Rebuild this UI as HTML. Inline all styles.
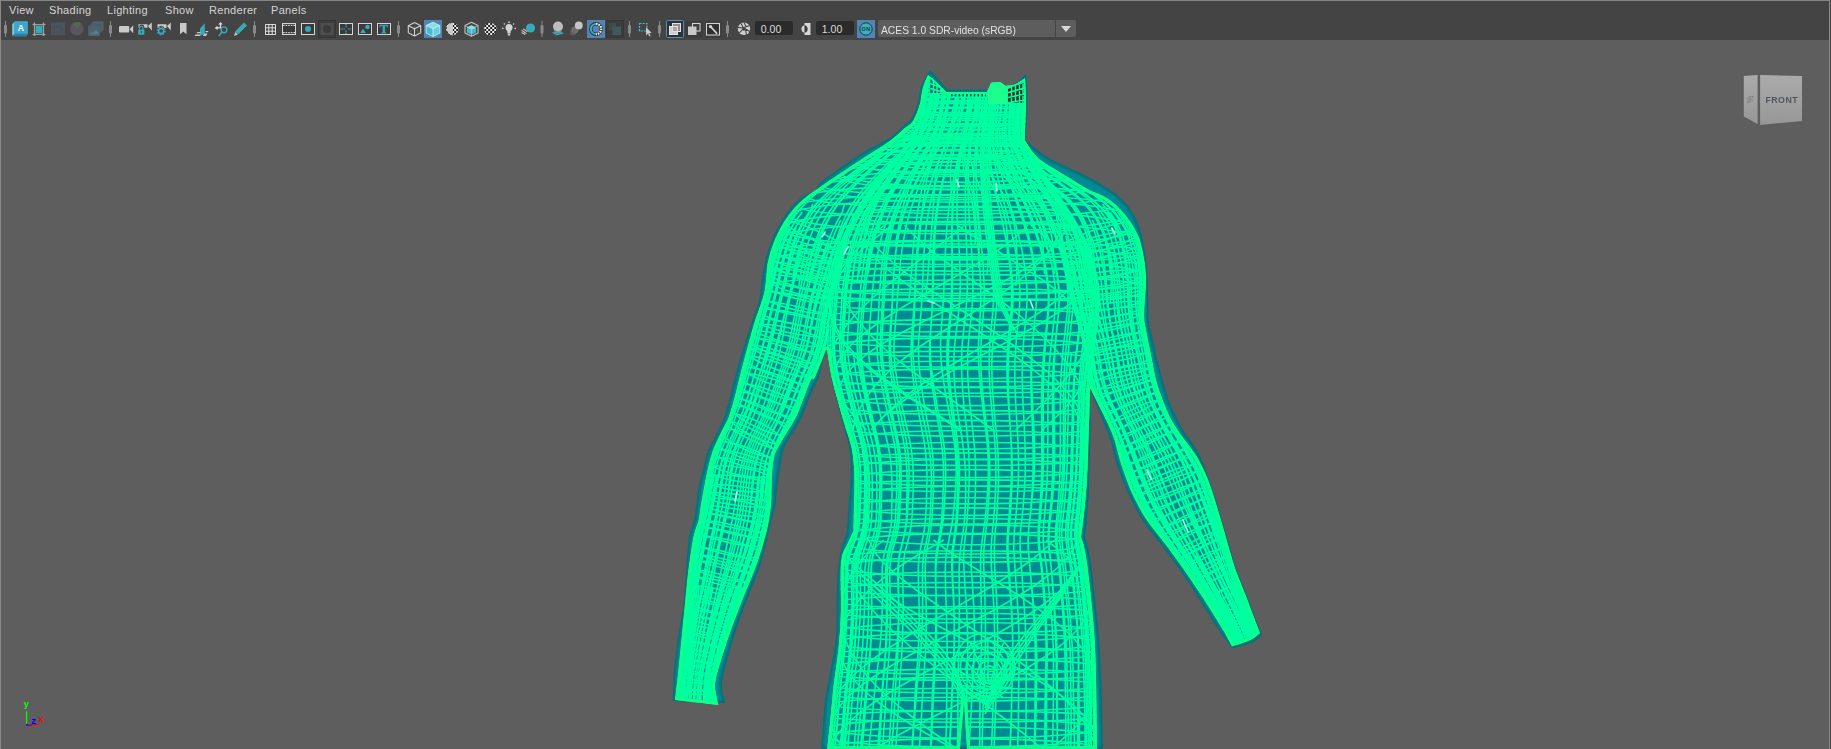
<!DOCTYPE html>
<html lang="en">
<head>
<meta charset="utf-8">
<title>Viewport</title>
<style>
html,body{margin:0;padding:0;}
body{width:1831px;height:749px;overflow:hidden;background:#5e5e5e;position:relative;font-family:"Liberation Sans","DejaVu Sans",sans-serif;}
#bar{position:absolute;left:0;top:0;width:1831px;height:40px;background:#444444;}
#topline{position:absolute;left:0;top:0;width:1831px;height:1px;background:#858585;}
#leftline{position:absolute;left:0;top:0;width:1px;height:749px;background:#8a8a8a;}
#rightline{position:absolute;left:1829px;top:0;width:1px;height:749px;background:#8a8a8a;}
#rightedge{position:absolute;left:1830px;top:0;width:1px;height:749px;background:#444444;}
.menu{position:absolute;top:3px;height:14px;line-height:14px;font-size:11px;letter-spacing:0.3px;color:#d4d4d4;white-space:nowrap;}
.fld{position:absolute;top:21px;height:14px;width:32px;padding-right:6px;background:#2b2b2b;border-radius:2px;color:#dcdcdc;font-size:10.5px;line-height:17px;text-align:center;letter-spacing:0;}
#dd{position:absolute;left:878px;top:20px;width:177px;height:17px;background:#5d5d5d;border-radius:2px 0 0 2px;color:#e2e2e2;font-size:11px;line-height:20px;white-space:nowrap;letter-spacing:0;}
#dd span{position:absolute;left:3px;top:0;transform:scaleX(0.935);transform-origin:0 50%;}
#dda{position:absolute;left:1056px;top:20px;width:20px;height:17px;background:#5d5d5d;border-radius:0 2px 2px 0;}
#dda:after{content:"";position:absolute;left:5px;top:6px;border-left:5px solid transparent;border-right:5px solid transparent;border-top:6px solid #d8d8d8;}
#icons{position:absolute;left:0;top:0;}
#scene{position:absolute;left:0;top:0;}
</style>
</head>
<body>
<div id="bar"></div>
<div class="menu" style="left:9px">View</div>
<div class="menu" style="left:49px">Shading</div>
<div class="menu" style="left:107px">Lighting</div>
<div class="menu" style="left:165px">Show</div>
<div class="menu" style="left:209px">Renderer</div>
<div class="menu" style="left:271px">Panels</div>
<div class="fld" style="left:755px">0.00</div>
<div class="fld" style="left:816px">1.00</div>
<div id="dd"><span>ACES 1.0 SDR-video (sRGB)</span></div>
<div id="dda"></div>
<svg id="scene" width="1831" height="749" viewBox="0 0 1831 749">
<defs>
<clipPath id="cg"><path d="M928 75 L929.1 75.9 L930.5 77.2 L932.3 78.6 L934.1 80.3 L936 82 L938 84 L940.3 86.3 L942.6 88.6 L944.6 90.6 L946 92 L952.2 92 L961.4 92 L971.6 92 L980.8 92 L987 92 L987.6 90.6 L988.5 88.6 L989.5 86.4 L990.4 84.4 L991 83 L992.1 82.8 L993.7 82.4 L995.5 82.1 L997.3 81.9 L999 82 L1000.6 82.5 L1002.2 83.4 L1003.8 84.4 L1005.1 85.4 L1006 86 L1007.4 85.8 L1009.3 85.5 L1011.6 85.2 L1013.9 84.7 L1016 84 L1018 83 L1020.1 81.6 L1022.1 80.2 L1023.8 78.9 L1025 78 L1025.2 81.5 L1025.4 86.5 L1025.7 92.3 L1025.9 98.7 L1026 105 L1025.9 112 L1025.5 120.1 L1025.2 128.1 L1024.8 135.1 L1024.6 140 L1026.2 142.4 L1028.3 145.9 L1030.9 149.9 L1034.2 154.1 L1038 158 L1042.8 161.7 L1048.4 165.4 L1054.5 169.1 L1060.5 172.7 L1066 176 L1070.9 179.1 L1075.6 182 L1080.1 184.7 L1084.3 187.2 L1088.5 189.5 L1092.5 191.5 L1096.4 193.1 L1100.1 194.6 L1103.7 196.2 L1107 198 L1110.1 200.1 L1113 202.4 L1115.8 204.7 L1118.4 207.3 L1121 210 L1123.6 212.9 L1126.1 216 L1128.6 219.3 L1130.9 222.6 L1133 226 L1134.9 229.2 L1136.6 232.4 L1138.2 235.7 L1139.7 239.5 L1141 244 L1142.3 249.4 L1143.6 255.5 L1144.6 262 L1145.5 268.9 L1146 276 L1146 283.7 L1145.5 292 L1144.8 300.4 L1144.2 308.3 L1144 315 L1144.2 320.1 L1144.7 324.1 L1145.4 327.6 L1146.2 331 L1147 335 L1147.9 339.8 L1148.9 344.9 L1150 350.1 L1151 355.2 L1152 360 L1152.8 364.3 L1153.5 368.4 L1154.3 372.2 L1155 376.1 L1156 380 L1157.1 384 L1158.4 388.1 L1159.8 392.1 L1161.2 396.1 L1162.7 400 L1164.2 403.9 L1165.7 407.8 L1167.3 411.6 L1169 415.2 L1170.7 418.7 L1172.5 421.9 L1174.3 424.9 L1176.1 427.7 L1178 430.5 L1180 433.4 L1182.1 436.4 L1184.3 439.4 L1186.6 442.4 L1188.8 445.2 L1190.8 448 L1192.5 450.4 L1194.1 452.5 L1195.6 454.6 L1197.1 457 L1198.8 460 L1200.7 463.7 L1202.8 467.8 L1204.9 472.3 L1207 477.1 L1209 482 L1210.9 487.2 L1212.7 492.8 L1214.5 498.5 L1216.3 504.3 L1218 510 L1219.6 515.5 L1221.2 520.9 L1222.8 526.3 L1224.4 531.8 L1226 537.5 L1227.7 543.4 L1229.4 549.6 L1231.2 555.8 L1233.1 562 L1235 568 L1237.1 573.8 L1239.4 579.6 L1241.6 585.2 L1243.9 590.7 L1246 596 L1248 601.2 L1249.9 606.4 L1251.8 611.4 L1253.5 616 L1255 620 L1256.3 623.5 L1257.5 626.6 L1258.6 629.3 L1259.4 631.4 L1260 633 L1258.9 634 L1257.3 635.3 L1255.4 636.9 L1253.1 638.5 L1250.5 640 L1247.1 641.4 L1242.9 642.9 L1238.5 644.4 L1234.7 645.6 L1232 646.5 L1230.9 644.4 L1229.4 641.5 L1227.5 638 L1225.4 634.1 L1223 630 L1220.4 625.6 L1217.4 620.8 L1214.2 615.6 L1210.9 610.3 L1207.5 605 L1204 599.6 L1200.5 594.1 L1196.8 588.5 L1192.9 582.8 L1189 577 L1184.9 571.1 L1180.7 565 L1176.3 559 L1171.9 552.9 L1167.6 547 L1163.2 541.3 L1158.7 535.7 L1154.2 530.1 L1149.9 524.6 L1146 519 L1142.5 513.4 L1139.3 507.8 L1136.4 502.3 L1133.6 496.7 L1131 491 L1128.5 485.2 L1126.3 479.1 L1124.2 473.1 L1122.2 467.4 L1120.5 462 L1119 457.1 L1117.8 452.4 L1116.7 448 L1115.7 443.9 L1114.5 440 L1113.3 436.5 L1112.1 433.3 L1110.8 430.3 L1109.5 427.3 L1108 424 L1106.3 420.4 L1104.4 416.5 L1102.4 412.6 L1100.5 408.7 L1098.6 405 L1096.7 401.2 L1094.7 397.2 L1092.8 393.5 L1091.2 390.3 L1090 388 L1089.9 392.6 L1089.7 398.9 L1089.5 406.5 L1089.3 414.7 L1089 423 L1088.7 431.8 L1088.4 441.6 L1088.1 451.6 L1087.8 461.2 L1087.4 470 L1087 477.6 L1086.6 484.6 L1086.1 491.1 L1085.6 497.5 L1085 504 L1084.2 511.2 L1083.3 518.9 L1082.4 526.2 L1081.6 532.5 L1081 537 L1081.7 539.2 L1082.6 542.1 L1083.7 545.8 L1084.9 550.7 L1086 557 L1087.2 565.2 L1088.4 575.1 L1089.7 586 L1090.9 597.2 L1092 608 L1092.9 617.7 L1093.7 627 L1094.4 636.5 L1095 647.2 L1095.5 660 L1096 676.9 L1096.3 697.2 L1096.6 718 L1096.8 736.3 L1097 749 L1077.2 749 L1048.1 749 L1015.9 749 L986.8 749 L967 749 L966.5 741.9 L965.9 731.3 L965.1 719.7 L964.5 709.1 L964 702 L963.4 709.1 L962.5 719.7 L961.5 731.3 L960.6 741.9 L960 749 L939.8 749 L910 749 L877 749 L847.2 749 L827 749 L827.4 745.8 L828 741.4 L828.6 736.1 L829.3 730.2 L830 724 L830.6 717.4 L831.3 710.1 L832 702.4 L832.7 694.7 L833.5 687 L834.4 679.5 L835.5 671.9 L836.6 664.2 L837.6 656.6 L838.5 649 L839.2 641.6 L839.8 634.4 L840.3 627.1 L840.7 619.4 L841 611 L841 601.3 L840.8 590.3 L840.6 579.3 L840.6 569.1 L841 561 L842 555.3 L843.4 551.2 L845 548.2 L846.6 545.7 L848 543 L849.3 540 L850.6 537.2 L851.8 534.6 L852.8 532.5 L853.5 531 L853.6 527.4 L853.7 522.4 L853.8 516.6 L853.9 510.6 L854 505 L854.1 499.8 L854.3 494.6 L854.4 489.5 L854.5 484.6 L854.5 480 L854.4 475.8 L854.3 471.8 L854.1 468.1 L853.8 464.5 L853.5 461 L853.2 457.7 L852.8 454.5 L852.3 451.5 L851.7 448.3 L851 445 L850 441.4 L848.9 437.7 L847.6 433.9 L846.3 430 L845 426 L843.8 422 L842.7 418.1 L841.5 414 L840.3 409.7 L839 405 L837.6 399.8 L836 394.3 L834.4 388.5 L832.9 382.6 L831.6 377 L830.4 371.1 L829.3 364.8 L828.4 358.8 L827.6 353.7 L827 350 L826.8 350 L826.6 350 L826.4 350 L826.2 350 L826 350 L824.4 354.1 L822.1 360 L819.4 366.6 L816.9 372.7 L815 377 L813.8 378.9 L813 379.2 L812.4 378.8 L811.7 378.8 L810.8 380 L809.5 382.7 L808.1 386.3 L806.5 390.5 L804.9 394.7 L803.4 398.7 L802 402.4 L800.6 406.2 L799.2 409.9 L797.6 413.7 L795.9 417.4 L793.9 421.2 L791.6 424.9 L789.2 428.7 L786.9 432.4 L784.7 436 L782.6 439.5 L780.5 443 L778.5 446.4 L776.7 449.8 L775.3 453 L774.3 456.1 L773.6 459 L773.2 461.8 L772.8 464.8 L772.5 468 L772.2 471.5 L772 475.1 L771.8 478.9 L771.7 482.7 L771.6 486.5 L771.5 490.1 L771.5 493.6 L771.5 497.1 L771.3 500.9 L771 505 L770.5 509.4 L769.9 514.1 L769.2 519.1 L768.2 524.4 L767 530 L765.4 536.2 L763.6 542.8 L761.5 549.7 L759.3 556.7 L757 563.5 L754.5 570.3 L751.8 577.1 L748.9 583.9 L746.1 590.5 L743.5 597 L741 603.2 L738.7 609.3 L736.4 615.2 L734.2 621.1 L732 627 L729.9 633 L727.7 639.1 L725.7 645.2 L723.8 651.2 L722 657 L720.2 662.7 L718.5 668.3 L716.9 673.8 L715.7 679 L715 684 L715.1 688.9 L715.8 693.8 L716.8 698.4 L717.8 702.2 L718.4 705 L711.8 704.2 L702.1 703.1 L691.3 701.9 L681.6 700.8 L675 700 L675.5 696 L676.1 690.3 L676.9 683.7 L677.7 676.7 L678.4 670 L679.1 663.6 L679.7 657 L680.4 650.4 L681 643.7 L681.7 637 L682.4 630.3 L683 623.6 L683.7 616.9 L684.3 610.2 L685 603.5 L685.6 596.8 L686.3 590.1 L686.9 583.4 L687.6 576.7 L688.4 570 L689.3 563.1 L690.3 556 L691.3 549 L692.4 542.6 L693.4 537 L694.5 532.5 L695.7 528.9 L696.8 525.7 L697.9 522.9 L698.7 520 L699.3 517.3 L699.6 514.9 L699.9 512.5 L700.2 510 L700.6 507 L701.2 503.3 L702 499.2 L702.7 494.9 L703.5 490.6 L704.3 486.5 L705 482.6 L705.7 478.9 L706.4 475.2 L707.2 471.6 L708 468 L708.8 464.5 L709.7 461.1 L710.6 457.7 L711.6 454.4 L712.7 451 L714 447.6 L715.5 444.3 L717 440.9 L718.6 437.6 L720.2 434.2 L721.9 430.9 L723.6 427.6 L725.4 424.3 L727.1 420.9 L728.6 417.4 L729.9 413.8 L731.1 410.1 L732.2 406.3 L733.2 402.5 L734.2 398.7 L735.2 394.9 L736.2 391.2 L737.1 387.4 L738 383.7 L738.9 380 L739.7 376.8 L740.4 374 L741.2 371 L742.1 367.4 L743.4 362.6 L745.1 356.1 L747.2 348.4 L749.5 340 L751.8 331.6 L754 324 L756.2 317.1 L758.6 310.5 L760.8 304.2 L762.9 298 L764.5 292 L765.5 286.1 L766.1 280.3 L766.5 274.7 L766.9 269.4 L767.5 264.6 L768.3 260.3 L769.2 256.4 L770.2 252.9 L771.2 249.5 L772.4 246 L773.7 242.5 L775.1 239.1 L776.6 235.7 L778.2 232.4 L780 229 L781.9 225.6 L784 222.1 L786.1 218.7 L788.5 215.3 L791 212 L793.7 208.8 L796.5 205.8 L799.5 202.8 L802.7 199.8 L806 197 L809.5 194.3 L813.1 191.8 L816.9 189.2 L820.8 186.7 L824.8 184 L829 181.1 L833.4 178.1 L837.9 175.1 L842.5 172 L847 169 L851.5 166 L856.1 163 L860.7 160.1 L865.2 157.1 L869.6 154.3 L873.9 151.5 L878.2 148.9 L882.3 146.2 L886.3 143.6 L890 141 L893.5 138.3 L896.7 135.5 L899.8 132.8 L902.5 130.2 L905 128 L907.1 126.4 L908.8 125.2 L910.2 124.2 L911.6 122.9 L913 121 L914.5 118.4 L915.9 115.3 L917.3 111.9 L918.6 108.4 L919.7 105 L920.6 101.5 L921.2 98 L921.7 94.4 L922.3 90.9 L923 87.7 L924 84.7 L925.1 81.7 L926.3 78.9 L927.3 76.7Z"/></clipPath>
<clipPath id="ct"><path d="M930 70 L931.1 71.1 L932.6 72.7 L934.3 74.5 L936.2 76.5 L938 78.5 L939.9 80.7 L942 83.2 L944 85.8 L945.8 88 L947 89.5 L955.1 89.5 L966.9 89.5 L980.1 89.5 L991.9 89.5 L1000 89.5 L1002.3 88.7 L1005.5 87.5 L1009.3 86.1 L1012.9 84.6 L1016 83 L1018.5 81.2 L1020.9 79.1 L1023 77.1 L1024.7 75.3 L1026 74 L1026.3 78.2 L1026.7 84 L1027.1 90.8 L1027.4 98 L1027.5 105 L1027.3 112.3 L1026.9 120.4 L1026.3 128.3 L1025.8 135.2 L1025.5 140 L1028.3 142.4 L1032.2 145.7 L1036.9 149.6 L1041.9 153.6 L1047 157 L1052.3 160 L1058.2 162.8 L1064.1 165.6 L1069.9 168.1 L1075 170.5 L1079.3 172.6 L1083.2 174.4 L1086.7 176.1 L1090.2 177.9 L1094 180 L1098.1 182.3 L1102.4 184.9 L1106.8 187.5 L1110.9 190.2 L1114.7 193 L1118.1 195.8 L1121.3 198.7 L1124.3 201.7 L1127.1 204.7 L1129.6 208 L1131.9 211.4 L1134 215.1 L1135.8 218.8 L1137.5 222.6 L1139 226.5 L1140.3 230.3 L1141.4 234.1 L1142.3 238.1 L1143.2 242.3 L1144 247 L1144.8 252 L1145.6 257.2 L1146.3 262.8 L1147 269 L1147.5 276 L1147.9 284.4 L1148.1 294.1 L1148.3 304.1 L1148.6 313.4 L1149 321 L1149.6 326.4 L1150.4 330.4 L1151.3 333.6 L1152.1 336.6 L1153 340 L1153.8 343.9 L1154.7 347.9 L1155.6 352 L1156.5 356 L1157.4 360 L1158.4 364 L1159.4 368 L1160.5 372 L1161.6 376 L1162.7 380 L1163.8 384.1 L1165 388.2 L1166.2 392.3 L1167.4 396.3 L1168.7 400 L1170.1 403.5 L1171.6 406.8 L1173.1 410 L1174.6 413 L1176 416 L1177.3 418.8 L1178.6 421.5 L1179.9 424.2 L1181.2 426.8 L1182.7 429.4 L1184.4 432.1 L1186.3 434.8 L1188.2 437.5 L1190.2 440.1 L1192 442.8 L1193.7 445.2 L1195.2 447.5 L1196.7 449.8 L1198.3 452.5 L1200 456 L1201.9 460.3 L1203.9 465.4 L1206 470.8 L1208 476.5 L1210 482 L1211.9 487.5 L1213.7 493.1 L1215.5 498.7 L1217.3 504.4 L1219 510 L1220.6 515.5 L1222.2 520.9 L1223.8 526.3 L1225.4 531.8 L1227 537.5 L1228.7 543.4 L1230.4 549.6 L1232.2 555.8 L1234.1 562 L1236 568 L1238.1 573.8 L1240.4 579.6 L1242.6 585.2 L1244.9 590.7 L1247 596 L1249 601.2 L1250.9 606.3 L1252.7 611.2 L1254.4 615.8 L1256 620 L1257.5 623.8 L1258.9 627.4 L1260.2 630.5 L1261.2 633.1 L1262 635 L1260.8 636 L1259.2 637.5 L1257.2 639.2 L1254.8 641 L1252 642.5 L1248.3 643.9 L1243.8 645.3 L1239 646.6 L1234.9 647.7 L1232 648.5 L1230.4 646.4 L1228.3 643.5 L1225.7 640 L1222.8 636.1 L1220 632 L1217.1 627.6 L1214 622.8 L1210.7 617.6 L1207.4 612.3 L1204 607 L1200.6 601.6 L1197.1 596.1 L1193.5 590.5 L1189.9 584.8 L1186 579 L1181.9 573.1 L1177.7 567 L1173.3 561 L1168.9 554.9 L1164.5 549 L1160.1 543.3 L1155.6 537.7 L1151.1 532.1 L1146.9 526.6 L1143 521 L1139.5 515.4 L1136.3 509.8 L1133.4 504.2 L1130.6 498.6 L1128 493 L1125.5 487.3 L1123.1 481.6 L1120.8 475.8 L1118.8 470.3 L1117 465 L1115.5 460 L1114.2 455.1 L1113.2 450.5 L1112.1 446.1 L1111 442 L1109.8 438.4 L1108.7 435.2 L1107.5 432.3 L1106.3 429.3 L1105 426 L1103.5 422.4 L1101.9 418.6 L1100.2 414.7 L1098.6 410.8 L1097 407 L1095.4 402.9 L1093.8 398.5 L1092.2 394.2 L1090.9 390.6 L1090 388 L1090.1 392.6 L1090.2 398.9 L1090.4 406.5 L1090.5 414.7 L1090.5 423 L1090.4 431.9 L1090.2 441.8 L1090 451.8 L1089.7 461.5 L1089.5 470 L1089.3 477 L1089.2 482.9 L1089.1 488.3 L1088.9 493.8 L1088.5 500 L1087.9 507.5 L1087.1 516.1 L1086.3 524.5 L1085.5 531.9 L1085 537 L1085.7 539.4 L1086.6 542.5 L1087.7 546.5 L1088.9 551.6 L1090 558 L1091.2 566.1 L1092.4 575.8 L1093.7 586.5 L1094.9 597.4 L1096 608 L1097 617.7 L1098 626.9 L1098.9 636.4 L1099.8 647.2 L1100.5 660 L1101.2 676.9 L1101.8 697.2 L1102.3 718 L1102.7 736.3 L1103 749 L1060.1 749 L997 749 L927 749 L863.9 749 L821 749 L821.1 747.7 L821.2 746.2 L821.4 744 L821.7 741.1 L822 737 L822.4 731.4 L822.8 724.3 L823.4 716.6 L824 708.9 L824.7 702 L825.5 696.1 L826.5 690.8 L827.5 685.6 L828.6 680.1 L829.7 674 L831 667.2 L832.4 660.1 L833.8 652.5 L835.1 644.5 L836 636 L836.5 626.4 L836.7 615.9 L836.7 605.1 L836.8 594.9 L837 586 L837.4 578.6 L837.7 572.3 L838.2 566.7 L838.8 561.4 L839.7 556 L841 550.3 L842.6 544.4 L844.4 539 L845.9 534.3 L847 531 L847.2 527.4 L847.5 522.4 L847.8 516.6 L848.1 510.6 L848.5 505 L848.9 499.8 L849.4 494.6 L849.8 489.5 L850.2 484.6 L850.5 480 L850.7 475.8 L850.7 471.8 L850.7 468.1 L850.7 464.5 L850.5 461 L850.3 457.7 L850 454.5 L849.6 451.5 L849.1 448.3 L848.5 445 L847.7 441.4 L846.7 437.7 L845.7 433.9 L844.6 430 L843.5 426 L842.5 422 L841.4 418.1 L840.3 414 L839.2 409.7 L838 405 L836.6 399.8 L835.2 394.3 L833.7 388.5 L832.2 382.6 L831 377 L829.9 371.1 L829 364.8 L828.2 358.8 L827.5 353.7 L827 350 L826.8 350 L826.6 350 L826.4 350 L826.2 350 L826 350 L825 354.1 L823.4 360 L821.7 366.6 L820.2 372.7 L819 377 L818.4 378.9 L818.3 379.2 L818.3 378.8 L818.1 378.8 L817.4 380 L816.1 382.7 L814.5 386.3 L812.6 390.5 L810.7 394.7 L809 398.7 L807.5 402.5 L806 406.3 L804.6 410.1 L803.1 413.8 L801.5 417.4 L799.7 420.9 L797.8 424.4 L795.8 427.7 L793.9 431 L792 434.2 L790.2 437.2 L788.4 440.1 L786.6 442.9 L785 445.8 L783.7 449 L782.7 452.5 L781.8 456.3 L781.2 460.2 L780.6 464.2 L780 468 L779.4 471.7 L778.8 475.3 L778.2 479 L777.7 482.7 L777.2 486.5 L776.8 490.4 L776.5 494.4 L776.1 498.5 L775.7 502.7 L775 507 L774.1 511.3 L773 515.5 L771.7 520 L770.4 524.7 L769 530 L767.6 535.9 L766.2 542.4 L764.7 549.2 L763 556.2 L761 563 L758.7 569.8 L756.1 576.7 L753.3 583.6 L750.6 590.4 L748 597 L745.6 603.3 L743.4 609.3 L741.2 615.2 L739 621.1 L737 627 L735 633 L733.1 639.1 L731.3 645.2 L729.6 651.2 L728 657 L726.5 662.7 L724.9 668.4 L723.6 673.9 L722.5 679.2 L722 684 L722.1 688.6 L722.9 693.1 L723.9 697.2 L724.9 700.5 L725.5 703 L717.5 702.7 L705.6 702.2 L692.6 701.8 L680.7 701.3 L672.7 701 L672.8 696.8 L673 690.9 L673.2 684 L673.5 676.8 L674 670 L674.6 663.5 L675.3 657 L676.2 650.3 L677.1 643.7 L678 637 L679 630.3 L680.2 623.6 L681.4 616.9 L682.5 610.2 L683.4 603.5 L684.1 596.8 L684.6 590.1 L685.1 583.4 L685.5 576.7 L686 570 L686.5 563.1 L687.1 556 L687.6 549 L688.3 542.6 L689 537 L689.9 532.5 L691 528.9 L692.1 525.7 L693.2 522.9 L694 520 L694.6 517.3 L694.9 514.9 L695.2 512.5 L695.5 510 L695.9 507 L696.4 503.3 L696.9 499.2 L697.4 494.9 L698 490.6 L698.7 486.5 L699.5 482.6 L700.4 478.9 L701.4 475.2 L702.4 471.6 L703.4 468 L704.3 464.5 L705.1 461.1 L705.9 457.7 L706.8 454.4 L708 451 L709.4 447.6 L711.1 444.3 L712.9 440.9 L714.7 437.6 L716.4 434.2 L718 430.9 L719.6 427.6 L721.1 424.3 L722.6 420.9 L724 417.4 L725.2 413.8 L726.4 410.1 L727.5 406.3 L728.5 402.5 L729.5 398.7 L730.5 395 L731.4 391.3 L732.3 387.6 L733.2 383.8 L734.2 380 L735.1 376.3 L736 372.9 L736.9 369.2 L738 365 L739.5 360 L741.5 353.6 L743.8 346.2 L746.4 338.3 L748.8 330.7 L751 324 L752.9 318.6 L754.6 313.9 L756.2 309.6 L757.7 305.1 L759 300 L760.1 294 L761 287.5 L761.8 280.8 L762.6 274.3 L763.5 268.5 L764.6 263.4 L765.7 258.7 L766.9 254.3 L768.2 250.1 L769.6 246 L771.1 241.9 L772.7 238.1 L774.3 234.3 L776.1 230.6 L778 227 L780 223.4 L782.1 219.9 L784.3 216.4 L786.6 213.1 L789 210 L791.5 207 L794 204.2 L796.7 201.6 L799.3 199.2 L802 197 L804.8 195.2 L807.7 193.8 L810.6 192.6 L813.2 191.4 L815.4 190 L816.7 188.6 L817.4 187.3 L817.9 185.9 L818.9 184.2 L821 182 L824.4 179.2 L828.8 175.9 L833.7 172.4 L838.7 168.8 L843.5 165.5 L848 162.4 L852.4 159.3 L856.9 156.4 L861.4 153.4 L866 150.6 L870.9 147.8 L876 145.2 L881.1 142.5 L885.9 140 L890 137.5 L893.4 135 L896.2 132.6 L898.7 130.2 L900.9 128 L903 126 L904.9 124.4 L906.6 123.3 L908.1 122.2 L909.6 120.8 L911 119 L912.4 116.6 L913.9 113.7 L915.2 110.6 L916.4 107.3 L917.5 104 L918.3 100.6 L918.9 96.9 L919.3 93.2 L920 89.5 L921 86 L922.6 82.4 L924.6 78.7 L926.8 75.2 L928.7 72.1Z"/></clipPath>
<clipPath id="cla"><path d="M800 196 L788 214 L772.4 246 L767.5 264.6 L764.5 292 L754 324 L743.4 362.6 L738.9 380 L734.2 398.7 L728.6 417.4 L720.2 434.2 L712.7 451 L708 468 L704.3 486.5 L700.6 507 L698.7 520 L693.4 537 L688.4 570 L685 603.5 L681.7 637 L678.4 670 L675 700 L718.4 705 L715 684 L722 657 L732 627 L743.5 597 L757 563.5 L767 530 L771 505 L771.6 486.5 L772.5 468 L775.3 453 L784.7 436 L795.9 417.4 L803.4 398.7 L810.8 380 L815 377 L826 350 L832 300 L842 262 L848 230 L850 200Z"/></clipPath>
<clipPath id="cra"><path d="M1100 192 L1121 210 L1133 226 L1141 243 L1146 276 L1144 315 L1147 335 L1152 360 L1156 380 L1162.7 400 L1170.7 418.7 L1180 433.4 L1190.8 448 L1198.8 460 L1209 482 L1218 510 L1226 537.5 L1235 568 L1246 596 L1255 620 L1260 633 L1250.5 640 L1232 646.5 L1223 630 L1207.5 605 L1189 577 L1167.6 547 L1146 519 L1131 491 L1120.5 462 L1114.5 440 L1108 424 L1098.6 405 L1090 388 L1082 340 L1068 290 L1060 245 L1056 220 L1056 196Z"/></clipPath>
<clipPath id="ccape"><rect x="700" y="60" width="520" height="285"/></clipPath><clipPath id="cribs"><rect x="700" y="135" width="520" height="620"/></clipPath>
<filter id="b2" x="-5%" y="-5%" width="110%" height="110%"><feGaussianBlur stdDeviation="1.1"/></filter>
</defs>
<path d="M930 70 L931.1 71.1 L932.6 72.7 L934.3 74.5 L936.2 76.5 L938 78.5 L939.9 80.7 L942 83.2 L944 85.8 L945.8 88 L947 89.5 L955.1 89.5 L966.9 89.5 L980.1 89.5 L991.9 89.5 L1000 89.5 L1002.3 88.7 L1005.5 87.5 L1009.3 86.1 L1012.9 84.6 L1016 83 L1018.5 81.2 L1020.9 79.1 L1023 77.1 L1024.7 75.3 L1026 74 L1026.3 78.2 L1026.7 84 L1027.1 90.8 L1027.4 98 L1027.5 105 L1027.3 112.3 L1026.9 120.4 L1026.3 128.3 L1025.8 135.2 L1025.5 140 L1028.3 142.4 L1032.2 145.7 L1036.9 149.6 L1041.9 153.6 L1047 157 L1052.3 160 L1058.2 162.8 L1064.1 165.6 L1069.9 168.1 L1075 170.5 L1079.3 172.6 L1083.2 174.4 L1086.7 176.1 L1090.2 177.9 L1094 180 L1098.1 182.3 L1102.4 184.9 L1106.8 187.5 L1110.9 190.2 L1114.7 193 L1118.1 195.8 L1121.3 198.7 L1124.3 201.7 L1127.1 204.7 L1129.6 208 L1131.9 211.4 L1134 215.1 L1135.8 218.8 L1137.5 222.6 L1139 226.5 L1140.3 230.3 L1141.4 234.1 L1142.3 238.1 L1143.2 242.3 L1144 247 L1144.8 252 L1145.6 257.2 L1146.3 262.8 L1147 269 L1147.5 276 L1147.9 284.4 L1148.1 294.1 L1148.3 304.1 L1148.6 313.4 L1149 321 L1149.6 326.4 L1150.4 330.4 L1151.3 333.6 L1152.1 336.6 L1153 340 L1153.8 343.9 L1154.7 347.9 L1155.6 352 L1156.5 356 L1157.4 360 L1158.4 364 L1159.4 368 L1160.5 372 L1161.6 376 L1162.7 380 L1163.8 384.1 L1165 388.2 L1166.2 392.3 L1167.4 396.3 L1168.7 400 L1170.1 403.5 L1171.6 406.8 L1173.1 410 L1174.6 413 L1176 416 L1177.3 418.8 L1178.6 421.5 L1179.9 424.2 L1181.2 426.8 L1182.7 429.4 L1184.4 432.1 L1186.3 434.8 L1188.2 437.5 L1190.2 440.1 L1192 442.8 L1193.7 445.2 L1195.2 447.5 L1196.7 449.8 L1198.3 452.5 L1200 456 L1201.9 460.3 L1203.9 465.4 L1206 470.8 L1208 476.5 L1210 482 L1211.9 487.5 L1213.7 493.1 L1215.5 498.7 L1217.3 504.4 L1219 510 L1220.6 515.5 L1222.2 520.9 L1223.8 526.3 L1225.4 531.8 L1227 537.5 L1228.7 543.4 L1230.4 549.6 L1232.2 555.8 L1234.1 562 L1236 568 L1238.1 573.8 L1240.4 579.6 L1242.6 585.2 L1244.9 590.7 L1247 596 L1249 601.2 L1250.9 606.3 L1252.7 611.2 L1254.4 615.8 L1256 620 L1257.5 623.8 L1258.9 627.4 L1260.2 630.5 L1261.2 633.1 L1262 635 L1260.8 636 L1259.2 637.5 L1257.2 639.2 L1254.8 641 L1252 642.5 L1248.3 643.9 L1243.8 645.3 L1239 646.6 L1234.9 647.7 L1232 648.5 L1230.4 646.4 L1228.3 643.5 L1225.7 640 L1222.8 636.1 L1220 632 L1217.1 627.6 L1214 622.8 L1210.7 617.6 L1207.4 612.3 L1204 607 L1200.6 601.6 L1197.1 596.1 L1193.5 590.5 L1189.9 584.8 L1186 579 L1181.9 573.1 L1177.7 567 L1173.3 561 L1168.9 554.9 L1164.5 549 L1160.1 543.3 L1155.6 537.7 L1151.1 532.1 L1146.9 526.6 L1143 521 L1139.5 515.4 L1136.3 509.8 L1133.4 504.2 L1130.6 498.6 L1128 493 L1125.5 487.3 L1123.1 481.6 L1120.8 475.8 L1118.8 470.3 L1117 465 L1115.5 460 L1114.2 455.1 L1113.2 450.5 L1112.1 446.1 L1111 442 L1109.8 438.4 L1108.7 435.2 L1107.5 432.3 L1106.3 429.3 L1105 426 L1103.5 422.4 L1101.9 418.6 L1100.2 414.7 L1098.6 410.8 L1097 407 L1095.4 402.9 L1093.8 398.5 L1092.2 394.2 L1090.9 390.6 L1090 388 L1090.1 392.6 L1090.2 398.9 L1090.4 406.5 L1090.5 414.7 L1090.5 423 L1090.4 431.9 L1090.2 441.8 L1090 451.8 L1089.7 461.5 L1089.5 470 L1089.3 477 L1089.2 482.9 L1089.1 488.3 L1088.9 493.8 L1088.5 500 L1087.9 507.5 L1087.1 516.1 L1086.3 524.5 L1085.5 531.9 L1085 537 L1085.7 539.4 L1086.6 542.5 L1087.7 546.5 L1088.9 551.6 L1090 558 L1091.2 566.1 L1092.4 575.8 L1093.7 586.5 L1094.9 597.4 L1096 608 L1097 617.7 L1098 626.9 L1098.9 636.4 L1099.8 647.2 L1100.5 660 L1101.2 676.9 L1101.8 697.2 L1102.3 718 L1102.7 736.3 L1103 749 L1060.1 749 L997 749 L927 749 L863.9 749 L821 749 L821.1 747.7 L821.2 746.2 L821.4 744 L821.7 741.1 L822 737 L822.4 731.4 L822.8 724.3 L823.4 716.6 L824 708.9 L824.7 702 L825.5 696.1 L826.5 690.8 L827.5 685.6 L828.6 680.1 L829.7 674 L831 667.2 L832.4 660.1 L833.8 652.5 L835.1 644.5 L836 636 L836.5 626.4 L836.7 615.9 L836.7 605.1 L836.8 594.9 L837 586 L837.4 578.6 L837.7 572.3 L838.2 566.7 L838.8 561.4 L839.7 556 L841 550.3 L842.6 544.4 L844.4 539 L845.9 534.3 L847 531 L847.2 527.4 L847.5 522.4 L847.8 516.6 L848.1 510.6 L848.5 505 L848.9 499.8 L849.4 494.6 L849.8 489.5 L850.2 484.6 L850.5 480 L850.7 475.8 L850.7 471.8 L850.7 468.1 L850.7 464.5 L850.5 461 L850.3 457.7 L850 454.5 L849.6 451.5 L849.1 448.3 L848.5 445 L847.7 441.4 L846.7 437.7 L845.7 433.9 L844.6 430 L843.5 426 L842.5 422 L841.4 418.1 L840.3 414 L839.2 409.7 L838 405 L836.6 399.8 L835.2 394.3 L833.7 388.5 L832.2 382.6 L831 377 L829.9 371.1 L829 364.8 L828.2 358.8 L827.5 353.7 L827 350 L826.8 350 L826.6 350 L826.4 350 L826.2 350 L826 350 L825 354.1 L823.4 360 L821.7 366.6 L820.2 372.7 L819 377 L818.4 378.9 L818.3 379.2 L818.3 378.8 L818.1 378.8 L817.4 380 L816.1 382.7 L814.5 386.3 L812.6 390.5 L810.7 394.7 L809 398.7 L807.5 402.5 L806 406.3 L804.6 410.1 L803.1 413.8 L801.5 417.4 L799.7 420.9 L797.8 424.4 L795.8 427.7 L793.9 431 L792 434.2 L790.2 437.2 L788.4 440.1 L786.6 442.9 L785 445.8 L783.7 449 L782.7 452.5 L781.8 456.3 L781.2 460.2 L780.6 464.2 L780 468 L779.4 471.7 L778.8 475.3 L778.2 479 L777.7 482.7 L777.2 486.5 L776.8 490.4 L776.5 494.4 L776.1 498.5 L775.7 502.7 L775 507 L774.1 511.3 L773 515.5 L771.7 520 L770.4 524.7 L769 530 L767.6 535.9 L766.2 542.4 L764.7 549.2 L763 556.2 L761 563 L758.7 569.8 L756.1 576.7 L753.3 583.6 L750.6 590.4 L748 597 L745.6 603.3 L743.4 609.3 L741.2 615.2 L739 621.1 L737 627 L735 633 L733.1 639.1 L731.3 645.2 L729.6 651.2 L728 657 L726.5 662.7 L724.9 668.4 L723.6 673.9 L722.5 679.2 L722 684 L722.1 688.6 L722.9 693.1 L723.9 697.2 L724.9 700.5 L725.5 703 L717.5 702.7 L705.6 702.2 L692.6 701.8 L680.7 701.3 L672.7 701 L672.8 696.8 L673 690.9 L673.2 684 L673.5 676.8 L674 670 L674.6 663.5 L675.3 657 L676.2 650.3 L677.1 643.7 L678 637 L679 630.3 L680.2 623.6 L681.4 616.9 L682.5 610.2 L683.4 603.5 L684.1 596.8 L684.6 590.1 L685.1 583.4 L685.5 576.7 L686 570 L686.5 563.1 L687.1 556 L687.6 549 L688.3 542.6 L689 537 L689.9 532.5 L691 528.9 L692.1 525.7 L693.2 522.9 L694 520 L694.6 517.3 L694.9 514.9 L695.2 512.5 L695.5 510 L695.9 507 L696.4 503.3 L696.9 499.2 L697.4 494.9 L698 490.6 L698.7 486.5 L699.5 482.6 L700.4 478.9 L701.4 475.2 L702.4 471.6 L703.4 468 L704.3 464.5 L705.1 461.1 L705.9 457.7 L706.8 454.4 L708 451 L709.4 447.6 L711.1 444.3 L712.9 440.9 L714.7 437.6 L716.4 434.2 L718 430.9 L719.6 427.6 L721.1 424.3 L722.6 420.9 L724 417.4 L725.2 413.8 L726.4 410.1 L727.5 406.3 L728.5 402.5 L729.5 398.7 L730.5 395 L731.4 391.3 L732.3 387.6 L733.2 383.8 L734.2 380 L735.1 376.3 L736 372.9 L736.9 369.2 L738 365 L739.5 360 L741.5 353.6 L743.8 346.2 L746.4 338.3 L748.8 330.7 L751 324 L752.9 318.6 L754.6 313.9 L756.2 309.6 L757.7 305.1 L759 300 L760.1 294 L761 287.5 L761.8 280.8 L762.6 274.3 L763.5 268.5 L764.6 263.4 L765.7 258.7 L766.9 254.3 L768.2 250.1 L769.6 246 L771.1 241.9 L772.7 238.1 L774.3 234.3 L776.1 230.6 L778 227 L780 223.4 L782.1 219.9 L784.3 216.4 L786.6 213.1 L789 210 L791.5 207 L794 204.2 L796.7 201.6 L799.3 199.2 L802 197 L804.8 195.2 L807.7 193.8 L810.6 192.6 L813.2 191.4 L815.4 190 L816.7 188.6 L817.4 187.3 L817.9 185.9 L818.9 184.2 L821 182 L824.4 179.2 L828.8 175.9 L833.7 172.4 L838.7 168.8 L843.5 165.5 L848 162.4 L852.4 159.3 L856.9 156.4 L861.4 153.4 L866 150.6 L870.9 147.8 L876 145.2 L881.1 142.5 L885.9 140 L890 137.5 L893.4 135 L896.2 132.6 L898.7 130.2 L900.9 128 L903 126 L904.9 124.4 L906.6 123.3 L908.1 122.2 L909.6 120.8 L911 119 L912.4 116.6 L913.9 113.7 L915.2 110.6 L916.4 107.3 L917.5 104 L918.3 100.6 L918.9 96.9 L919.3 93.2 L920 89.5 L921 86 L922.6 82.4 L924.6 78.7 L926.8 75.2 L928.7 72.1Z" fill="#028a94"/>
<g clip-path="url(#ct)"><path d="M930 70 L931.1 71.1 L932.6 72.7 L934.3 74.5 L936.2 76.5 L938 78.5 L939.9 80.7 L942 83.2 L944 85.8 L945.8 88 L947 89.5 L955.1 89.5 L966.9 89.5 L980.1 89.5 L991.9 89.5 L1000 89.5 L1002.3 88.7 L1005.5 87.5 L1009.3 86.1 L1012.9 84.6 L1016 83 L1018.5 81.2 L1020.9 79.1 L1023 77.1 L1024.7 75.3 L1026 74 L1026.3 78.2 L1026.7 84 L1027.1 90.8 L1027.4 98 L1027.5 105 L1027.3 112.3 L1026.9 120.4 L1026.3 128.3 L1025.8 135.2 L1025.5 140 L1028.3 142.4 L1032.2 145.7 L1036.9 149.6 L1041.9 153.6 L1047 157 L1052.3 160 L1058.2 162.8 L1064.1 165.6 L1069.9 168.1 L1075 170.5 L1079.3 172.6 L1083.2 174.4 L1086.7 176.1 L1090.2 177.9 L1094 180 L1098.1 182.3 L1102.4 184.9 L1106.8 187.5 L1110.9 190.2 L1114.7 193 L1118.1 195.8 L1121.3 198.7 L1124.3 201.7 L1127.1 204.7 L1129.6 208 L1131.9 211.4 L1134 215.1 L1135.8 218.8 L1137.5 222.6 L1139 226.5 L1140.3 230.3 L1141.4 234.1 L1142.3 238.1 L1143.2 242.3 L1144 247 L1144.8 252 L1145.6 257.2 L1146.3 262.8 L1147 269 L1147.5 276 L1147.9 284.4 L1148.1 294.1 L1148.3 304.1 L1148.6 313.4 L1149 321 L1149.6 326.4 L1150.4 330.4 L1151.3 333.6 L1152.1 336.6 L1153 340 L1153.8 343.9 L1154.7 347.9 L1155.6 352 L1156.5 356 L1157.4 360 L1158.4 364 L1159.4 368 L1160.5 372 L1161.6 376 L1162.7 380 L1163.8 384.1 L1165 388.2 L1166.2 392.3 L1167.4 396.3 L1168.7 400 L1170.1 403.5 L1171.6 406.8 L1173.1 410 L1174.6 413 L1176 416 L1177.3 418.8 L1178.6 421.5 L1179.9 424.2 L1181.2 426.8 L1182.7 429.4 L1184.4 432.1 L1186.3 434.8 L1188.2 437.5 L1190.2 440.1 L1192 442.8 L1193.7 445.2 L1195.2 447.5 L1196.7 449.8 L1198.3 452.5 L1200 456 L1201.9 460.3 L1203.9 465.4 L1206 470.8 L1208 476.5 L1210 482 L1211.9 487.5 L1213.7 493.1 L1215.5 498.7 L1217.3 504.4 L1219 510 L1220.6 515.5 L1222.2 520.9 L1223.8 526.3 L1225.4 531.8 L1227 537.5 L1228.7 543.4 L1230.4 549.6 L1232.2 555.8 L1234.1 562 L1236 568 L1238.1 573.8 L1240.4 579.6 L1242.6 585.2 L1244.9 590.7 L1247 596 L1249 601.2 L1250.9 606.3 L1252.7 611.2 L1254.4 615.8 L1256 620 L1257.5 623.8 L1258.9 627.4 L1260.2 630.5 L1261.2 633.1 L1262 635 L1260.8 636 L1259.2 637.5 L1257.2 639.2 L1254.8 641 L1252 642.5 L1248.3 643.9 L1243.8 645.3 L1239 646.6 L1234.9 647.7 L1232 648.5 L1230.4 646.4 L1228.3 643.5 L1225.7 640 L1222.8 636.1 L1220 632 L1217.1 627.6 L1214 622.8 L1210.7 617.6 L1207.4 612.3 L1204 607 L1200.6 601.6 L1197.1 596.1 L1193.5 590.5 L1189.9 584.8 L1186 579 L1181.9 573.1 L1177.7 567 L1173.3 561 L1168.9 554.9 L1164.5 549 L1160.1 543.3 L1155.6 537.7 L1151.1 532.1 L1146.9 526.6 L1143 521 L1139.5 515.4 L1136.3 509.8 L1133.4 504.2 L1130.6 498.6 L1128 493 L1125.5 487.3 L1123.1 481.6 L1120.8 475.8 L1118.8 470.3 L1117 465 L1115.5 460 L1114.2 455.1 L1113.2 450.5 L1112.1 446.1 L1111 442 L1109.8 438.4 L1108.7 435.2 L1107.5 432.3 L1106.3 429.3 L1105 426 L1103.5 422.4 L1101.9 418.6 L1100.2 414.7 L1098.6 410.8 L1097 407 L1095.4 402.9 L1093.8 398.5 L1092.2 394.2 L1090.9 390.6 L1090 388 L1090.1 392.6 L1090.2 398.9 L1090.4 406.5 L1090.5 414.7 L1090.5 423 L1090.4 431.9 L1090.2 441.8 L1090 451.8 L1089.7 461.5 L1089.5 470 L1089.3 477 L1089.2 482.9 L1089.1 488.3 L1088.9 493.8 L1088.5 500 L1087.9 507.5 L1087.1 516.1 L1086.3 524.5 L1085.5 531.9 L1085 537 L1085.7 539.4 L1086.6 542.5 L1087.7 546.5 L1088.9 551.6 L1090 558 L1091.2 566.1 L1092.4 575.8 L1093.7 586.5 L1094.9 597.4 L1096 608 L1097 617.7 L1098 626.9 L1098.9 636.4 L1099.8 647.2 L1100.5 660 L1101.2 676.9 L1101.8 697.2 L1102.3 718 L1102.7 736.3 L1103 749 L1060.1 749 L997 749 L927 749 L863.9 749 L821 749 L821.1 747.7 L821.2 746.2 L821.4 744 L821.7 741.1 L822 737 L822.4 731.4 L822.8 724.3 L823.4 716.6 L824 708.9 L824.7 702 L825.5 696.1 L826.5 690.8 L827.5 685.6 L828.6 680.1 L829.7 674 L831 667.2 L832.4 660.1 L833.8 652.5 L835.1 644.5 L836 636 L836.5 626.4 L836.7 615.9 L836.7 605.1 L836.8 594.9 L837 586 L837.4 578.6 L837.7 572.3 L838.2 566.7 L838.8 561.4 L839.7 556 L841 550.3 L842.6 544.4 L844.4 539 L845.9 534.3 L847 531 L847.2 527.4 L847.5 522.4 L847.8 516.6 L848.1 510.6 L848.5 505 L848.9 499.8 L849.4 494.6 L849.8 489.5 L850.2 484.6 L850.5 480 L850.7 475.8 L850.7 471.8 L850.7 468.1 L850.7 464.5 L850.5 461 L850.3 457.7 L850 454.5 L849.6 451.5 L849.1 448.3 L848.5 445 L847.7 441.4 L846.7 437.7 L845.7 433.9 L844.6 430 L843.5 426 L842.5 422 L841.4 418.1 L840.3 414 L839.2 409.7 L838 405 L836.6 399.8 L835.2 394.3 L833.7 388.5 L832.2 382.6 L831 377 L829.9 371.1 L829 364.8 L828.2 358.8 L827.5 353.7 L827 350 L826.8 350 L826.6 350 L826.4 350 L826.2 350 L826 350 L825 354.1 L823.4 360 L821.7 366.6 L820.2 372.7 L819 377 L818.4 378.9 L818.3 379.2 L818.3 378.8 L818.1 378.8 L817.4 380 L816.1 382.7 L814.5 386.3 L812.6 390.5 L810.7 394.7 L809 398.7 L807.5 402.5 L806 406.3 L804.6 410.1 L803.1 413.8 L801.5 417.4 L799.7 420.9 L797.8 424.4 L795.8 427.7 L793.9 431 L792 434.2 L790.2 437.2 L788.4 440.1 L786.6 442.9 L785 445.8 L783.7 449 L782.7 452.5 L781.8 456.3 L781.2 460.2 L780.6 464.2 L780 468 L779.4 471.7 L778.8 475.3 L778.2 479 L777.7 482.7 L777.2 486.5 L776.8 490.4 L776.5 494.4 L776.1 498.5 L775.7 502.7 L775 507 L774.1 511.3 L773 515.5 L771.7 520 L770.4 524.7 L769 530 L767.6 535.9 L766.2 542.4 L764.7 549.2 L763 556.2 L761 563 L758.7 569.8 L756.1 576.7 L753.3 583.6 L750.6 590.4 L748 597 L745.6 603.3 L743.4 609.3 L741.2 615.2 L739 621.1 L737 627 L735 633 L733.1 639.1 L731.3 645.2 L729.6 651.2 L728 657 L726.5 662.7 L724.9 668.4 L723.6 673.9 L722.5 679.2 L722 684 L722.1 688.6 L722.9 693.1 L723.9 697.2 L724.9 700.5 L725.5 703 L717.5 702.7 L705.6 702.2 L692.6 701.8 L680.7 701.3 L672.7 701 L672.8 696.8 L673 690.9 L673.2 684 L673.5 676.8 L674 670 L674.6 663.5 L675.3 657 L676.2 650.3 L677.1 643.7 L678 637 L679 630.3 L680.2 623.6 L681.4 616.9 L682.5 610.2 L683.4 603.5 L684.1 596.8 L684.6 590.1 L685.1 583.4 L685.5 576.7 L686 570 L686.5 563.1 L687.1 556 L687.6 549 L688.3 542.6 L689 537 L689.9 532.5 L691 528.9 L692.1 525.7 L693.2 522.9 L694 520 L694.6 517.3 L694.9 514.9 L695.2 512.5 L695.5 510 L695.9 507 L696.4 503.3 L696.9 499.2 L697.4 494.9 L698 490.6 L698.7 486.5 L699.5 482.6 L700.4 478.9 L701.4 475.2 L702.4 471.6 L703.4 468 L704.3 464.5 L705.1 461.1 L705.9 457.7 L706.8 454.4 L708 451 L709.4 447.6 L711.1 444.3 L712.9 440.9 L714.7 437.6 L716.4 434.2 L718 430.9 L719.6 427.6 L721.1 424.3 L722.6 420.9 L724 417.4 L725.2 413.8 L726.4 410.1 L727.5 406.3 L728.5 402.5 L729.5 398.7 L730.5 395 L731.4 391.3 L732.3 387.6 L733.2 383.8 L734.2 380 L735.1 376.3 L736 372.9 L736.9 369.2 L738 365 L739.5 360 L741.5 353.6 L743.8 346.2 L746.4 338.3 L748.8 330.7 L751 324 L752.9 318.6 L754.6 313.9 L756.2 309.6 L757.7 305.1 L759 300 L760.1 294 L761 287.5 L761.8 280.8 L762.6 274.3 L763.5 268.5 L764.6 263.4 L765.7 258.7 L766.9 254.3 L768.2 250.1 L769.6 246 L771.1 241.9 L772.7 238.1 L774.3 234.3 L776.1 230.6 L778 227 L780 223.4 L782.1 219.9 L784.3 216.4 L786.6 213.1 L789 210 L791.5 207 L794 204.2 L796.7 201.6 L799.3 199.2 L802 197 L804.8 195.2 L807.7 193.8 L810.6 192.6 L813.2 191.4 L815.4 190 L816.7 188.6 L817.4 187.3 L817.9 185.9 L818.9 184.2 L821 182 L824.4 179.2 L828.8 175.9 L833.7 172.4 L838.7 168.8 L843.5 165.5 L848 162.4 L852.4 159.3 L856.9 156.4 L861.4 153.4 L866 150.6 L870.9 147.8 L876 145.2 L881.1 142.5 L885.9 140 L890 137.5 L893.4 135 L896.2 132.6 L898.7 130.2 L900.9 128 L903 126 L904.9 124.4 L906.6 123.3 L908.1 122.2 L909.6 120.8 L911 119 L912.4 116.6 L913.9 113.7 L915.2 110.6 L916.4 107.3 L917.5 104 L918.3 100.6 L918.9 96.9 L919.3 93.2 L920 89.5 L921 86 L922.6 82.4 L924.6 78.7 L926.8 75.2 L928.7 72.1Z" fill="none" stroke="#0a6c70" stroke-width="4.5" filter="url(#b2)"/></g>
<g clip-path="url(#cg)" fill="none" stroke="#00ffa0" stroke-width="1.6" stroke-linejoin="round">
<g id="w-cape" clip-path="url(#ccape)">
<path d="M924.4 70 L924 76 L923.5 82 L922.6 88 L921.6 94 L920.3 100 L918.6 106 L916.1 112 L912.5 118 L907.8 124 L901.9 130 L894.9 136 L887.2 142 L878.9 148 L870.1 154 L861.2 160 L852.1 166 L843 172 L834.2 178 L825.5 184 L817.4 190 L809.9 196 L803.1 202 L797.2 208 L792.2 214 L787.8 220 L784.1 226 L780.7 232 L777.8 238 L775.2 244 L772.9 250 L770.8 256M925.5 70 L925.1 76 L924.7 82 L923.8 88 L922.8 94 L921.5 100 L919.8 106 L917.4 112 L913.8 118 L909.1 124 L903.4 130 L896.5 136 L888.9 142 L880.7 148 L872.1 154 L863.4 160 L854.5 166 L845.7 172 L837 178 L828.6 184 L820.7 190 L813.4 196 L806.8 202 L801.1 208 L796.2 214 L791.9 220 L788.3 226 L785 232 L782.1 238 L779.6 244 L777.3 250M929.3 70 L928.9 76 L928.4 82 L927.4 88 L926.5 94 L925.2 100 L923.5 106 L921.1 112 L917.6 118 L913.1 124 L907.5 130 L900.9 136 L893.7 142 L886.1 148 L878 154 L869.9 160 L861.7 166 L853.6 172 L845.7 178 L838.1 184 L830.9 190 L824.3 196 L818.3 202 L813.1 208 L808.7 214 L804.8 220 L801.6 226 L798.6 232 L796 238 L793.6 244 L791.5 250 L789.7 256 L788.2 262 L786.9 268M929.4 70 L929 76 L928.6 82 L927.8 88 L926.9 94 L925.7 100 L924.1 106 L921.7 112 L918.3 118 L913.8 124 L908.2 130 L901.6 136 L894.3 142 L886.6 148 L878.5 154 L870.3 160 L862 166 L853.8 172 L845.7 178 L838 184 L830.7 190 L823.9 196 L817.8 202 L812.5 208 L807.9 214 L804 220 L800.6 226 L797.6 232 L794.9 238 L792.6 244M933.2 70 L932.8 76 L932.3 82 L931.4 88 L930.5 94 L929.2 100 L927.6 106 L925.3 112 L921.9 118 L917.6 124 L912.2 130 L906 136 L899.2 142 L892 148 L884.5 154 L877 160 L869.5 166 L862.1 172 L854.9 178 L848 184 L841.5 190 L835.5 196 L830.2 202 L825.4 208 L821.4 214 L817.9 220 L814.9 226 L812.2 232 L809.8 238 L807.7 244 L805.8 250 L804.2 256 L802.8 262 L801.7 268 L800.7 274 L799.8 280 L798.9 286M935.5 70 L935.1 76 L934.7 82 L933.9 88 L933.1 94 L931.9 100 L930.4 106 L928.1 112 L924.8 118 L920.6 124 L915.4 130 L909.3 136 L902.6 142 L895.7 148 L888.4 154 L881.2 160 L874 166 L866.9 172 L860 178 L853.4 184 L847.2 190 L841.5 196 L836.3 202 L831.8 208 L827.9 214 L824.5 220 L821.6 226 L819 232 L816.7 238 L814.6 244 L812.7 250 L811 256 L809.7 262 L808.5 268 L807.5 274 L806.5 280M937.2 70 L936.9 76 L936.6 82 L935.9 88 L935.1 94 L933.9 100 L932.5 106 L930.2 112 L927 118 L922.8 124 L917.6 130 L911.6 136 L905 142 L898.1 148 L891 154 L883.9 160 L876.8 166 L869.8 172 L863 178 L856.5 184 L850.5 190 L844.8 196 L839.7 202 L835.3 208 L831.4 214 L828 220 L825.1 226 L822.5 232 L820.2 238 L818.1 244 L816.2 250M940.7 70 L940.4 76 L940.1 82 L939.5 88 L938.9 94 L937.9 100 L936.6 106 L934.6 112 L931.7 118 L927.9 124 L923.3 130 L917.9 136 L912 142 L906 148 L899.8 154 L893.7 160 L887.7 166 L881.8 172 L876.2 178 L870.8 184 L865.8 190 L861.1 196 L856.9 202 L853.1 208 L849.8 214 L847 220 L844.5 226 L842.1 232 L840 238 L838.1 244 L836.3 250 L834.7 256 L833.4 262M940.8 70 L940.6 76 L940.3 82 L939.8 88 L939.2 94 L938.3 100 L937.1 106 L935.2 112 L932.4 118 L928.7 124 L924.2 130 L918.9 136 L913.2 142 L907.2 148 L901.1 154 L895.1 160 L889 166 L883.2 172 L877.5 178 L872.1 184 L867.1 190 L862.3 196 L858 202 L854.1 208 L850.7 214 L847.7 220 L845.1 226 L842.7 232 L840.5 238 L838.5 244 L836.7 250 L835.1 256 L833.8 262 L832.7 268 L831.7 274 L830.8 280M947.4 70 L947.1 76 L946.8 82 L946.2 88 L945.5 94 L944.5 100 L943.2 106 L941.2 112 L938.3 118 L934.6 124 L930.3 130 L925.2 136 L919.8 142 L914.4 148 L909 154 L903.7 160 L898.5 166 L893.6 172 L889 178 L884.7 184 L880.7 190 L877 196 L873.6 202 L870.6 208 L868 214 L865.7 220 L863.7 226 L861.9 232 L860.1 238 L858.6 244 L857.2 250 L855.9 256 L854.9 262 L853.9 268 L853.1 274 L852.3 280 L851.4 286 L850.6 292 L849.6 298 L848.6 304M948 70 L947.6 76 L947.1 82 L946.4 88 L945.5 94 L944.4 100 L943 106 L941 112 L938.1 118 L934.4 124 L930 130 L925 136 L919.7 142 L914.4 148 L909.2 154 L904.1 160 L899.2 166 L894.5 172 L890.2 178 L886.2 184 L882.4 190 L879 196 L875.9 202 L873.2 208 L870.9 214 L868.8 220 L867.1 226 L865.5 232 L864 238 L862.7 244 L861.5 250 L860.4 256 L859.5 262 L858.8 268 L858.1 274 L857.4 280M952.1 70 L951.8 76 L951.5 82 L950.9 88 L950.2 94 L949.3 100 L948 106 L946.1 112 L943.4 118 L939.9 124 L935.8 130 L931.1 136 L926.2 142 L921.3 148 L916.5 154 L912 160 L907.6 166 L903.5 172 L899.8 178 L896.3 184 L893.1 190 L890.2 196 L887.5 202 L885.1 208 L883 214 L881.1 220 L879.5 226 L878 232M957.7 70 L957.5 76 L957.2 82 L956.6 88 L956 94 L955.1 100 L953.9 106 L952.1 112 L949.5 118 L946.3 124 L942.5 130 L938.2 136 L933.9 142 L929.8 148 L925.8 154 L922.1 160 L918.7 166 L915.6 172 L912.9 178 L910.5 184 L908.3 190 L906.3 196 L904.5 202 L902.8 208 L901.3 214 L900 220 L898.8 226 L897.7 232 L896.6 238 L895.5 244M964.5 70 L964.2 76 L963.8 82 L963.2 88 L962.5 94 L961.5 100 L960.3 106 L958.5 112 L956 118 L952.9 124 L949.5 130 L945.7 136 L941.9 142 L938.5 148 L935.4 154 L932.7 160 L930.5 166 L928.6 172 L927.1 178 L926 184 L925 190 L924.1 196 L923.3 202 L922.6 208 L921.9 214 L921.2 220 L920.6 226 L920 232 L919.4 238 L918.7 244 L918 250 L917.4 256 L916.8 262M963.9 70 L963.8 76 L963.6 82 L963.2 88 L962.7 94 L961.9 100 L960.8 106 L959.1 112 L956.6 118 L953.5 124 L949.9 130 L945.9 136 L941.9 142 L938.2 148 L934.8 154 L931.7 160 L929 166 L926.7 172 L924.7 178 L923.2 184 L921.7 190 L920.5 196 L919.3 202 L918.3 208 L917.3 214 L916.4 220 L915.7 226 L915 232 L914.3 238 L913.6 244 L913 250 L912.5 256 L912 262 L911.7 268 L911.3 274 L910.9 280 L910.4 286 L909.9 292 L909.2 298M967 70 L966.7 76 L966.4 82 L966 88 L965.4 94 L964.6 100 L963.5 106 L961.9 112 L959.7 118 L956.8 124 L953.7 130 L950.2 136 L946.9 142 L944 148 L941.4 154 L939.2 160 L937.5 166 L936.2 172 L935.3 178 L934.8 184 L934.3 190 L934 196 L933.6 202 L933.2 208 L932.8 214 L932.3 220 L931.9 226 L931.5 232 L931 238 L930.4 244 L929.8 250 L929.3 256 L928.9 262 L928.4 268 L928 274 L927.5 280 L926.9 286 L926.2 292 L925.4 298M975.8 70 L975.6 76 L975.3 82 L974.8 88 L974.3 94 L973.5 100 L972.4 106 L970.8 112 L968.7 118 L965.9 124 L963 130 L959.9 136 L957.1 142 L954.8 148 L952.9 154 L951.6 160 L950.7 166 L950.4 172 L950.4 178 L950.9 184 L951.3 190 L951.8 196 L952.1 202 L952.3 208 L952.4 214 L952.3 220 L952.2 226 L952 232 L951.6 238 L951.2 244M979 70 L978.9 76 L978.8 82 L978.6 88 L978.3 94 L977.7 100 L976.9 106 L975.7 112 L973.9 118 L971.7 124 L969.4 130 L967.1 136 L965.1 142 L963.7 148 L963 154 L962.8 160 L963.2 166 L964.1 172 L965.5 178 L967.3 184 L969 190 L970.6 196 L972 202 L973.1 208 L973.9 214 L974.5 220 L975 226 L975.2 232 L975.3 238 L975.1 244M980.8 70 L980.7 76 L980.6 82 L980.3 88 L979.9 94 L979.3 100 L978.5 106 L977.2 112 L975.5 118 L973.2 124 L971 130 L968.6 136 L966.7 142 L965.4 148 L964.8 154 L964.8 160 L965.3 166 L966.4 172 L968 178 L970 184 L971.8 190 L973.6 196 L975.2 202 L976.5 208 L977.4 214 L978.1 220 L978.7 226 L979 232 L979.2 238 L979.2 244 L979.1 250 L979 256 L978.8 262 L978.6 268M981 70 L981 76 L981 82 L980.9 88 L980.8 94 L980.5 100 L980 106 L979.1 112 L977.7 118 L975.9 124 L974.1 130 L972.3 136 L971 142 L970.3 148 L970.4 154 L971 160 L972.2 166 L973.9 172 L976.1 178 L978.6 184 L981 190 L983.2 196 L985.1 202 L986.6 208 L987.7 214 L988.5 220 L989 226 L989.3 232 L989.3 238 L989.1 244 L988.8 250 L988.4 256 L988 262 L987.5 268 L987 274M991 70 L991 76 L991 82 L991 88 L990.8 94 L990.4 100 L989.9 106 L988.9 112 L987.5 118 L985.8 124 L984.2 130 L982.8 136 L982 142 L982 148 L982.8 154 L984.4 160 L986.8 166 L989.7 172 L993.1 178 L996.9 184 L1000.6 190 L1004.1 196 L1007.1 202 L1009.6 208 L1011.6 214 L1013.2 220 L1014.4 226 L1015.4 232 L1016.1 238 L1016.4 244 L1016.7 250 L1016.9 256 L1016.9 262 L1016.8 268 L1016.7 274 L1016.4 280 L1015.9 286M986.5 70 L986.3 76 L986.1 82 L985.9 88 L985.7 94 L985.3 100 L984.7 106 L983.8 112 L982.5 118 L980.8 124 L979.3 130 L977.9 136 L977 142 L977 148 L977.8 154 L979.3 160 L981.4 166 L984.1 172 L987.3 178 L990.9 184 L994.3 190 L997.4 196 L1000.2 202 L1002.4 208 L1004.1 214 L1005.4 220 L1006.4 226 L1007.1 232 L1007.5 238 L1007.5 244 L1007.5 250 L1007.3 256M997.2 70 L997.2 76 L997.1 82 L997 88 L996.8 94 L996.4 100 L995.8 106 L994.8 112 L993.6 118 L992 124 L990.7 130 L989.7 136 L989.4 142 L990.1 148 L991.8 154 L994.3 160 L997.7 166 L1001.7 172 L1006.2 178 L1011.2 184 L1015.9 190 L1020.4 196 L1024.4 202 L1027.7 208 L1030.4 214 L1032.6 220 L1034.4 226M997 70 L996.9 76 L996.8 82 L996.7 88 L996.5 94 L996 100 L995.4 106 L994.5 112 L993.2 118 L991.7 124 L990.4 130 L989.4 136 L989.1 142 L989.8 148 L991.5 154 L994 160 L997.3 166 L1001.3 172 L1005.8 178 L1010.8 184 L1015.5 190 L1020 196 L1023.9 202 L1027.2 208 L1029.9 214 L1032.1 220 L1033.8 226M999.4 70 L999.4 76 L999.4 82 L999.3 88 L999.1 94 L998.8 100 L998.2 106 L997.4 112 L996.2 118 L994.8 124 L993.7 130 L992.9 136 L992.9 142 L994 148 L996 154 L998.9 160 L1002.7 166 L1007.1 172 L1012.1 178 L1017.6 184 L1022.7 190 L1027.6 196 L1032 202 L1035.6 208 L1038.5 214 L1040.9 220 L1042.8 226 L1044.4 232 L1045.6 238 L1046.4 244 L1047.1 250M1002.5 70 L1002.5 76 L1002.5 82 L1002.5 88 L1002.4 94 L1002.1 100 L1001.6 106 L1000.8 112 L999.8 118 L998.5 124 L997.6 130 L997 136 L997.4 142 L998.8 148 L1001.3 154 L1004.7 160 L1009 166 L1014 172 L1019.6 178 L1025.6 184 L1031.3 190 L1036.7 196 L1041.5 202 L1045.5 208 L1048.7 214 L1051.4 220 L1053.6 226 L1055.3 232M1006.6 70 L1006.6 76 L1006.6 82 L1006.5 88 L1006.4 94 L1006.1 100 L1005.7 106 L1005 112 L1004 118 L1002.9 124 L1002.3 130 L1002.1 136 L1002.8 142 L1004.8 148 L1007.9 154 L1012 160 L1017 166 L1022.8 172 L1029.1 178 L1036 184 L1042.5 190 L1048.6 196 L1054.1 202 L1058.6 208 L1062.3 214 L1065.5 220 L1068 226 L1070.1 232M1011.2 70 L1011.3 76 L1011.5 82 L1011.7 88 L1011.8 94 L1011.8 100 L1011.7 106 L1011.3 112 L1010.8 118 L1010.1 124 L1010 130 L1010.4 136 L1011.9 142 L1014.6 148 L1018.6 154 L1023.6 160 L1029.6 166 L1036.3 172 L1043.6 178 L1051.4 184 L1058.7 190 L1065.6 196 L1071.6 202 L1076.7 208 L1080.7 214 L1084.1 220 L1086.9 226 L1089.1 232 L1090.8 238 L1092 244 L1093.1 250 L1093.9 256 L1094.5 262M1011.9 70 L1011.9 76 L1012 82 L1012 88 L1012 94 L1011.8 100 L1011.4 106 L1010.9 112 L1010.1 118 L1009.2 124 L1008.9 130 L1009.1 136 L1010.4 142 L1013 148 L1016.8 154 L1021.7 160 L1027.6 166 L1034.2 172 L1041.6 178 L1049.3 184 L1056.7 190 L1063.7 196 L1069.8 202 L1075 208 L1079.2 214 L1082.8 220 L1085.7 226 L1088.1 232 L1089.9 238 L1091.3 244M1017.1 70 L1017.2 76 L1017.3 82 L1017.4 88 L1017.4 94 L1017.3 100 L1017 106 L1016.6 112 L1016 118 L1015.3 124 L1015.2 130 L1015.8 136 L1017.5 142 L1020.6 148 L1025.1 154 L1030.7 160 L1037.3 166 L1044.7 172 L1052.8 178 L1061.4 184 L1069.5 190 L1077.1 196 L1083.9 202 L1089.6 208 L1094.2 214 L1098.1 220 L1101.3 226 L1103.9 232 L1105.9 238 L1107.4 244 L1108.7 250 L1109.8 256 L1110.4 262 L1110.9 268 L1111.3 274 L1111.3 280 L1111.2 286 L1110.9 292 L1110.5 298 L1110.1 304M1018.6 70 L1018.7 76 L1018.8 82 L1018.9 88 L1018.9 94 L1018.9 100 L1018.6 106 L1018.2 112 L1017.7 118 L1017.1 124 L1017.3 130 L1018.1 136 L1020.1 142 L1023.6 148 L1028.5 154 L1034.5 160 L1041.7 166 L1049.6 172 L1058.3 178 L1067.4 184 L1076.1 190 L1084.3 196 L1091.5 202 L1097.6 208 L1102.6 214 L1106.8 220 L1110.3 226M1020.4 70 L1020.6 76 L1020.6 82 L1020.8 88 L1020.8 94 L1020.7 100 L1020.5 106 L1020.1 112 L1019.5 118 L1019 124 L1019.1 130 L1019.9 136 L1022 142 L1025.6 148 L1030.6 154 L1036.7 160 L1044 166 L1052.1 172 L1060.9 178 L1070.2 184 L1079.1 190 L1087.4 196 L1094.8 202 L1101 208 L1106.2 214 L1110.5 220 L1114.1 226 L1117.1 232 L1119.4 238 L1121.2 244 L1122.8 250 L1124.1 256 L1124.9 262 L1125.6 268 L1126.1 274 L1126.3 280M1022.9 70 L1023 76 L1023.1 82 L1023.2 88 L1023.3 94 L1023.3 100 L1023.1 106 L1022.8 112 L1022.3 118 L1022 124 L1022.3 130 L1023.4 136 L1025.8 142 L1029.8 148 L1035.2 154 L1041.8 160 L1049.6 166 L1058.2 172 L1067.5 178 L1077.4 184 L1086.7 190 L1095.4 196 L1103.2 202 L1109.7 208 L1115.1 214 L1119.7 220 L1123.4 226 L1126.5 232 L1129 238 L1130.8 244 L1132.4 250 L1133.8 256 L1134.7 262 L1135.4 268 L1135.9 274 L1136.1 280 L1136 286M1022.9 70 L1023 76 L1023.1 82 L1023.3 88 L1023.4 94 L1023.3 100 L1023.2 106 L1022.9 112 L1022.5 118 L1022.1 124 L1022.5 130 L1023.7 136 L1026.1 142 L1030.1 148 L1035.6 154 L1042.3 160 L1050.1 166 L1058.8 172 L1068.2 178 L1078.1 184 L1087.5 190 L1096.3 196 L1104.1 202 L1110.7 208 L1116.2 214 L1120.7 220 L1124.5 226 L1127.6 232 L1130.1 238"/>
<ellipse cx="974.4" cy="82.0" rx="51.7" ry="7.8"/>
<ellipse cx="973.4" cy="95.7" rx="53.0" ry="8.1"/>
<ellipse cx="971.5" cy="108.4" rx="54.6" ry="8.1"/>
<ellipse cx="967.5" cy="120.7" rx="58.0" ry="5.9"/>
<ellipse cx="962.6" cy="131.8" rx="63.7" ry="6.8"/>
<ellipse cx="958.9" cy="140.2" rx="70.2" ry="5.6"/>
<ellipse cx="955.6" cy="150.0" rx="80.5" ry="7.4"/>
<ellipse cx="953.4" cy="162.0" rx="96.3" ry="12.4"/>
<ellipse cx="953.1" cy="172.7" rx="112.3" ry="13.7"/>
<ellipse cx="954.6" cy="186.4" rx="133.7" ry="15.7"/>
<ellipse cx="956.0" cy="196.7" rx="148.2" ry="11.1"/>
<ellipse cx="956.9" cy="206.2" rx="159.3" ry="11.5"/>
<ellipse cx="957.4" cy="215.5" rx="167.8" ry="15.8"/>
<ellipse cx="957.6" cy="228.7" rx="176.6" ry="18.5"/>
<ellipse cx="957.3" cy="239.6" rx="181.8" ry="17.1"/>
<ellipse cx="956.6" cy="252.3" rx="186.1" ry="12.0"/>
<ellipse cx="955.9" cy="264.2" rx="188.9" ry="20.2"/>
<ellipse cx="955.2" cy="276.7" rx="190.8" ry="18.8"/>
<ellipse cx="954.2" cy="287.6" rx="191.8" ry="13.2"/>
<ellipse cx="974.4" cy="80.0" rx="51.6" ry="3.0"/>
<ellipse cx="974.3" cy="84.2" rx="51.9" ry="1.8"/>
<ellipse cx="974.0" cy="88.4" rx="52.3" ry="2.9"/>
<ellipse cx="973.5" cy="94.6" rx="52.9" ry="1.8"/>
<ellipse cx="973.0" cy="99.6" rx="53.4" ry="2.5"/>
<ellipse cx="972.1" cy="105.3" rx="54.1" ry="2.0"/>
<ellipse cx="971.0" cy="110.3" rx="55.0" ry="2.3"/>
<ellipse cx="969.3" cy="116.2" rx="56.5" ry="2.1"/>
<ellipse cx="966.9" cy="122.3" rx="58.6" ry="2.2"/>
<ellipse cx="965.0" cy="126.6" rx="60.6" ry="2.8"/>
<ellipse cx="962.7" cy="131.6" rx="63.5" ry="1.9"/>
<ellipse cx="960.3" cy="136.9" rx="67.4" ry="1.9"/>
<ellipse cx="957.9" cy="142.6" rx="72.5" ry="2.8"/>
<ellipse cx="956.0" cy="148.3" rx="78.5" ry="2.7"/>
<ellipse cx="956.7" cy="146.0" rx="76.0" ry="9.1"/>
<ellipse cx="954.5" cy="154.4" rx="85.9" ry="11.3"/>
<ellipse cx="953.1" cy="165.0" rx="100.6" ry="7.3"/>
<ellipse cx="953.3" cy="175.5" rx="116.6" ry="13.8"/>
<ellipse cx="954.5" cy="185.7" rx="132.6" ry="9.6"/>
<path d="M915.4 154 L910.9 160 L906.5 166 L902.5 172 L898.7 178 L895.2 184 L892 190 L889 196 L886.3 202 L883.8 208 L881.7 214 L879.7 220 L878 226 L876.4 232 L874.9 238 L873.5 244 L872.1 250 L870.9 256 L869.9 262 L868.9 268 L868 274M910.6 154 L905.6 160 L900.7 166 L896.1 172 L891.8 178 L887.8 184 L884.1 190 L880.6 196 L877.5 202 L874.8 208 L872.4 214 L870.3 220 L868.5 226 L866.8 232 L865.2 238 L863.8 244 L862.5 250 L861.4 256 L860.5 262 L859.6 268 L858.9 274M901.4 154 L895.5 160 L889.8 166 L884.3 172 L879.1 178 L874.2 184 L869.6 190 L865.4 196 L861.6 202 L858.3 208 L855.4 214 L852.9 220 L850.8 226 L848.8 232 L847.1 238 L845.5 244 L844 250 L842.7 256 L841.6 262 L840.6 268 L839.8 274M897.4 154 L891.2 160 L885 166 L879 172 L873.2 178 L867.7 184 L862.6 190 L857.9 196 L853.6 202 L849.8 208 L846.6 214 L843.7 220 L841.3 226 L839 232 L837 238 L835.1 244 L833.4 250 L831.9 256 L830.6 262 L829.5 268 L828.5 274M889.5 154 L882.5 160 L875.5 166 L868.7 172 L862.1 178 L855.7 184 L849.8 190 L844.3 196 L839.3 202 L835 208 L831.2 214 L828 220 L825.2 226 L822.7 232 L820.4 238 L818.5 244 L816.6 250 L815 256 L813.7 262 L812.6 268 L811.5 274M882.5 154 L874.7 160 L866.8 166 L859 172 L851.4 178 L844 184 L837.2 190 L830.8 196 L825 202 L820 208 L815.7 214 L811.9 220 L808.7 226 L805.9 232 L803.3 238 L801 244 L799 250 L797.2 256 L795.8 262 L794.6 268 L793.5 274M880.1 154 L872.2 160 L864.1 166 L856.1 172 L848.3 178 L840.8 184 L833.7 190 L827.1 196 L821.2 202 L816.1 208 L811.6 214 L807.8 220 L804.5 226 L801.5 232 L798.9 238 L796.5 244 L794.4 250 L792.5 256 L791 262 L789.7 268 L788.5 274M993.6 154 L996.4 160 L1000 166 L1004.3 172 L1009.2 178 L1014.4 184 L1019.5 190 L1024.2 196 L1028.5 202 L1032 208 L1034.8 214 L1037.2 220 L1039.1 226 L1040.7 232 L1041.9 238 L1042.7 244 L1043.3 250 L1043.9 256 L1044.2 262 L1044.4 268 L1044.5 274M999.5 154 L1002.8 160 L1006.9 166 L1011.7 172 L1017 178 L1022.8 184 L1028.3 190 L1033.4 196 L1037.9 202 L1041.7 208 L1044.7 214 L1047.2 220 L1049.2 226 L1050.8 232 L1052 238 L1052.7 244 L1053.3 250 L1053.8 256 L1054 262 L1054.1 268 L1054.1 274M1007.4 154 L1011.3 160 L1016.1 166 L1021.6 172 L1027.8 178 L1034.3 184 L1040.6 190 L1046.5 196 L1051.7 202 L1056 208 L1059.5 214 L1062.5 220 L1064.8 226 L1066.8 232 L1068.2 238 L1069.3 244 L1070.2 250 L1070.9 256 L1071.3 262 L1071.6 268 L1071.8 274M1011.3 154 L1015.6 160 L1020.8 166 L1026.8 172 L1033.4 178 L1040.4 184 L1047 190 L1053.3 196 L1058.8 202 L1063.4 208 L1067.2 214 L1070.3 220 L1072.8 226 L1074.8 232 L1076.4 238 L1077.5 244 L1078.4 250 L1079.1 256 L1079.5 262 L1079.7 268 L1079.9 274M1016.7 154 L1021.4 160 L1027.1 166 L1033.6 172 L1040.7 178 L1048.3 184 L1055.5 190 L1062.3 196 L1068.3 202 L1073.3 208 L1077.4 214 L1080.9 220 L1083.7 226 L1086 232 L1087.8 238 L1089.1 244 L1090.2 250 L1091.2 256 L1091.8 262 L1092.3 268 L1092.6 274M1023.5 154 L1029 160 L1035.6 166 L1043 172 L1051.1 178 L1059.7 184 L1067.8 190 L1075.4 196 L1082.2 202 L1087.9 208 L1092.6 214 L1096.6 220 L1099.8 226 L1102.4 232 L1104.6 238 L1106.1 244 L1107.5 250 L1108.6 256 L1109.3 262 L1109.9 268 L1110.3 274M1030.5 154 L1036.7 160 L1044.1 166 L1052.3 172 L1061.2 178 L1070.6 184 L1079.5 190 L1087.9 196 L1095.4 202 L1101.7 208 L1106.9 214 L1111.3 220 L1114.9 226 L1118 232 L1120.4 238 L1122.2 244 L1123.9 250 L1125.2 256 L1126.2 262 L1126.9 268 L1127.5 274"/>
</g>
<g id="w-ribs">
<path d="M925.9 70 L925.8 76 L925.7 82 L925.5 88 L925 94 L924.2 100 L923.1 106 L921.6 112 L919.9 118 L918.1 124 L915.7 130 L912.6 136 L909 142 L904.7 148 L899.9 154 L895 160 L890.1 166 L885.1 172 L880.1 178 L875.3 184 L870.7 190 L866.3 196 L862.1 202 L858.1 208 L854.5 214 L851.1 220 L848.1 226 L845.4 232 L843 238 L840.8 244 L838.9 250 L837.2 256 L835.8 262 L834.6 268 L833.5 274 L832.6 280 L831.7 286 L831 292 L830.5 298 L830 304 L829.6 310 L829.2 316 L828.9 322 L828.5 328 L828.2 334 L827.9 340 L827.9 346 L828.2 352 L828.7 358 L829.6 364 L830.7 370 L831.9 376 L833.3 382 L834.7 388 L836.3 394 L837.9 400 L839.5 406 L841.2 412 L842.9 418 L844.7 424 L846.5 430 L848.2 436 L849.8 442 L851.3 448 L852.4 454 L853.2 460 L853.8 466 L854.2 472 L854.4 478 L854.4 484 L854.4 490 L854.3 496 L854.2 502 L854.1 508 L854 514 L853.8 520 L853.1 526 L851.9 532 L850.2 538 L848.1 544 L845.6 550 L843.7 556 L842.4 562 L841.6 568 L841.2 574 L841.2 580 L841.2 586 L841.2 592 L841.2 598 L841.1 604 L841 610 L840.7 616 L840.4 622 L840.1 628 L839.7 634 L839.2 640 L838.7 646 L838.1 652 L837.5 658 L836.7 664 L835.9 670 L835.1 676 L834.4 682 L833.7 688 L833.1 694 L832.5 700 L831.9 706 L831.3 712 L830.7 718 L830.1 724 L829.5 730 L828.9 736 L828.3 742 L828 748 L827.7 752M926.7 70 L926.6 76 L926.5 82 L926.3 88 L925.8 94 L925 100 L923.9 106 L922.5 112 L920.8 118 L919.1 124 L916.7 130 L913.7 136 L910 142 L905.8 148 L901.1 154 L896.3 160 L891.4 166 L886.6 172 L881.7 178 L876.9 184 L872.4 190 L868.1 196 L864 202 L860 208 L856.4 214 L853.1 220 L850.1 226 L847.5 232 L845.1 238 L843 244 L841.1 250 L839.4 256 L838 262 L836.8 268 L835.8 274 L834.8 280 L834 286 L833.3 292 L832.8 298 L832.3 304 L831.9 310 L831.5 316 L831.2 322 L830.8 328 L830.4 334 L830.2 340 L830.2 346 L830.5 352 L831 358 L831.9 364 L833 370 L834.2 376 L835.5 382 L837 388 L838.6 394 L840.2 400 L841.8 406 L843.4 412 L845.1 418 L846.9 424 L848.7 430 L850.4 436 L852 442 L853.4 448 L854.5 454 L855.3 460 L855.9 466 L856.2 472 L856.4 478 L856.5 484 L856.5 490 L856.4 496 L856.2 502 L856.1 508 L856 514 L855.8 520 L855.1 526 L853.8 532 L852.1 538 L850 544 L847.7 550 L845.8 556 L844.5 562 L843.7 568 L843.3 574 L843.3 580 L843.3 586 L843.3 592 L843.3 598 L843.3 604 L843.2 610 L843 616 L842.7 622 L842.3 628 L841.9 634 L841.5 640 L841 646 L840.4 652 L839.8 658 L839.1 664 L838.3 670 L837.5 676 L836.8 682 L836.1 688 L835.4 694 L834.8 700 L834.3 706 L833.7 712 L833.1 718 L832.5 724 L831.9 730 L831.3 736 L830.7 742 L830.3 748 L830 752M927.8 70 L927.7 76 L927.7 82 L927.5 88 L927 94 L926.2 100 L925 106 L923.6 112 L921.9 118 L920.1 124 L917.7 130 L914.7 136 L911.1 142 L906.9 148 L902.1 154 L897.3 160 L892.5 166 L887.7 172 L882.8 178 L878.2 184 L873.7 190 L869.5 196 L865.4 202 L861.5 208 L858 214 L854.8 220 L851.9 226 L849.3 232 L847 238 L844.9 244 L843.1 250 L841.6 256 L840.2 262 L839.1 268 L838.1 274 L837.2 280 L836.4 286 L835.8 292 L835.3 298 L834.9 304 L834.5 310 L834.1 316 L833.8 322 L833.4 328 L833.1 334 L832.8 340 L832.8 346 L833 352 L833.5 358 L834.3 364 L835.4 370 L836.6 376 L837.8 382 L839.2 388 L840.7 394 L842.3 400 L843.8 406 L845.4 412 L847.1 418 L848.8 424 L850.5 430 L852.2 436 L853.8 442 L855.1 448 L856.2 454 L857 460 L857.6 466 L858 472 L858.2 478 L858.3 484 L858.3 490 L858.2 496 L858.1 502 L858 508 L858 514 L857.8 520 L857.1 526 L855.9 532 L854.3 538 L852.3 544 L850 550 L848.1 556 L846.9 562 L846.1 568 L845.7 574 L845.7 580 L845.8 586 L845.8 592 L845.8 598 L845.7 604 L845.5 610 L845.3 616 L845 622 L844.6 628 L844.2 634 L843.7 640 L843.2 646 L842.6 652 L841.9 658 L841.1 664 L840.3 670 L839.5 676 L838.8 682 L838.1 688 L837.4 694 L836.8 700 L836.2 706 L835.7 712 L835.1 718 L834.6 724 L834 730 L833.4 736 L832.8 742 L832.5 748 L832.3 752M927.4 70 L927.3 76 L927.2 82 L927 88 L926.5 94 L925.7 100 L924.7 106 L923.3 112 L921.6 118 L919.9 124 L917.5 130 L914.6 136 L911 142 L906.9 148 L902.2 154 L897.5 160 L892.7 166 L887.9 172 L883.1 178 L878.5 184 L874.1 190 L869.8 196 L865.8 202 L861.9 208 L858.4 214 L855.1 220 L852.2 226 L849.6 232 L847.3 238 L845.2 244 L843.3 250 L841.7 256 L840.3 262 L839.1 268 L838 274 L837.1 280 L836.3 286 L835.6 292 L835 298 L834.5 304 L834.1 310 L833.7 316 L833.3 322 L832.9 328 L832.6 334 L832.3 340 L832.3 346 L832.5 352 L833.1 358 L833.9 364 L835 370 L836.2 376 L837.5 382 L839 388 L840.5 394 L842.1 400 L843.7 406 L845.4 412 L847.1 418 L848.9 424 L850.7 430 L852.4 436 L854 442 L855.4 448 L856.5 454 L857.3 460 L857.9 466 L858.3 472 L858.5 478 L858.6 484 L858.6 490 L858.5 496 L858.4 502 L858.2 508 L858.1 514 L857.9 520 L857.2 526 L855.9 532 L854.3 538 L852.2 544 L849.8 550 L847.9 556 L846.6 562 L845.8 568 L845.4 574 L845.4 580 L845.3 586 L845.3 592 L845.3 598 L845.2 604 L845.1 610 L844.9 616 L844.6 622 L844.2 628 L843.8 634 L843.4 640 L842.9 646 L842.4 652 L841.7 658 L841 664 L840.2 670 L839.5 676 L838.8 682 L838.1 688 L837.5 694 L837 700 L836.4 706 L835.9 712 L835.4 718 L834.8 724 L834.2 730 L833.6 736 L833.1 742 L832.8 748 L832.5 752M928.1 70 L928 76 L927.9 82 L927.7 88 L927.2 94 L926.4 100 L925.4 106 L924 112 L922.4 118 L920.6 124 L918.3 130 L915.4 136 L911.9 142 L907.9 148 L903.3 154 L898.6 160 L894 166 L889.3 172 L884.5 178 L880 184 L875.6 190 L871.5 196 L867.5 202 L863.7 208 L860.2 214 L857 220 L854.1 226 L851.5 232 L849.3 238 L847.2 244 L845.4 250 L843.7 256 L842.3 262 L841.2 268 L840.1 274 L839.2 280 L838.3 286 L837.6 292 L837.1 298 L836.6 304 L836.2 310 L835.7 316 L835.4 322 L835 328 L834.6 334 L834.3 340 L834.3 346 L834.6 352 L835.1 358 L835.9 364 L837 370 L838.2 376 L839.6 382 L841 388 L842.6 394 L844.2 400 L845.8 406 L847.5 412 L849.2 418 L850.9 424 L852.7 430 L854.5 436 L856 442 L857.4 448 L858.6 454 L859.4 460 L859.9 466 L860.3 472 L860.5 478 L860.6 484 L860.5 490 L860.4 496 L860.3 502 L860.1 508 L859.9 514 L859.7 520 L859 526 L857.7 532 L856 538 L853.9 544 L851.6 550 L849.7 556 L848.4 562 L847.6 568 L847.2 574 L847.2 580 L847.1 586 L847.1 592 L847.2 598 L847.1 604 L847 610 L846.8 616 L846.5 622 L846.2 628 L845.8 634 L845.4 640 L845 646 L844.5 652 L843.8 658 L843.2 664 L842.4 670 L841.7 676 L841 682 L840.4 688 L839.8 694 L839.3 700 L838.8 706 L838.2 712 L837.7 718 L837.1 724 L836.5 730 L835.9 736 L835.4 742 L835 748 L834.7 752M930.6 70 L930.6 76 L930.5 82 L930.3 88 L929.8 94 L929.1 100 L928 106 L926.6 112 L925 118 L923.2 124 L920.9 130 L918 136 L914.5 142 L910.5 148 L905.9 154 L901.4 160 L896.8 166 L892.1 172 L887.5 178 L883 184 L878.8 190 L874.7 196 L870.8 202 L867.1 208 L863.7 214 L860.7 220 L857.9 226 L855.4 232 L853.2 238 L851.2 244 L849.5 250 L848 256 L846.7 262 L845.6 268 L844.7 274 L843.8 280 L843.1 286 L842.5 292 L842 298 L841.6 304 L841.2 310 L840.9 316 L840.6 322 L840.2 328 L839.9 334 L839.7 340 L839.7 346 L840 352 L840.6 358 L841.4 364 L842.5 370 L843.7 376 L845 382 L846.4 388 L847.9 394 L849.4 400 L851 406 L852.6 412 L854.2 418 L855.9 424 L857.6 430 L859.3 436 L860.8 442 L862.1 448 L863.1 454 L863.8 460 L864.4 466 L864.7 472 L864.8 478 L864.8 484 L864.8 490 L864.6 496 L864.4 502 L864.2 508 L864 514 L863.8 520 L863 526 L861.8 532 L860.1 538 L858.1 544 L855.8 550 L854 556 L852.8 562 L852 568 L851.6 574 L851.7 580 L851.7 586 L851.7 592 L851.8 598 L851.8 604 L851.7 610 L851.5 616 L851.3 622 L851 628 L850.7 634 L850.3 640 L849.9 646 L849.4 652 L848.8 658 L848.2 664 L847.5 670 L846.8 676 L846.1 682 L845.5 688 L844.9 694 L844.4 700 L843.9 706 L843.4 712 L842.9 718 L842.3 724 L841.8 730 L841.2 736 L840.6 742 L840.3 748 L840 752M931.5 70 L931.4 76 L931.3 82 L931.1 88 L930.6 94 L929.7 100 L928.6 106 L927.1 112 L925.4 118 L923.6 124 L921.2 130 L918.2 136 L914.7 142 L910.7 148 L906.2 154 L901.6 160 L897.1 166 L892.5 172 L888 178 L883.6 184 L879.5 190 L875.5 196 L871.8 202 L868.2 208 L865 214 L862.1 220 L859.5 226 L857.2 232 L855.1 238 L853.3 244 L851.8 250 L850.4 256 L849.2 262 L848.2 268 L847.3 274 L846.6 280 L845.9 286 L845.3 292 L844.8 298 L844.3 304 L843.9 310 L843.5 316 L843 322 L842.6 328 L842.1 334 L841.7 340 L841.6 346 L841.7 352 L842.1 358 L842.8 364 L843.7 370 L844.7 376 L845.9 382 L847.2 388 L848.6 394 L850.1 400 L851.6 406 L853.2 412 L854.8 418 L856.5 424 L858.2 430 L859.9 436 L861.5 442 L862.9 448 L864.1 454 L864.9 460 L865.6 466 L866 472 L866.3 478 L866.5 484 L866.5 490 L866.5 496 L866.4 502 L866.4 508 L866.3 514 L866.1 520 L865.4 526 L864.2 532 L862.6 538 L860.6 544 L858.3 550 L856.5 556 L855.2 562 L854.3 568 L853.9 574 L853.8 580 L853.7 586 L853.7 592 L853.6 598 L853.5 604 L853.3 610 L853 616 L852.7 622 L852.3 628 L851.9 634 L851.5 640 L851.1 646 L850.6 652 L850 658 L849.3 664 L848.7 670 L848 676 L847.4 682 L846.9 688 L846.4 694 L845.9 700 L845.5 706 L845 712 L844.6 718 L844.1 724 L843.6 730 L843.1 736 L842.5 742 L842.3 748 L842 752M931.1 70 L931 76 L930.9 82 L930.8 88 L930.3 94 L929.5 100 L928.4 106 L927.1 112 L925.4 118 L923.7 124 L921.4 130 L918.5 136 L915.1 142 L911.1 148 L906.7 154 L902.2 160 L897.6 166 L893.1 172 L888.5 178 L884.2 184 L880 190 L876 196 L872.2 202 L868.6 208 L865.3 214 L862.2 220 L859.5 226 L857.1 232 L855 238 L853.1 244 L851.4 250 L849.9 256 L848.6 262 L847.6 268 L846.7 274 L845.8 280 L845.1 286 L844.5 292 L844.1 298 L843.7 304 L843.3 310 L842.9 316 L842.6 322 L842.2 328 L841.9 334 L841.6 340 L841.6 346 L841.8 352 L842.4 358 L843.1 364 L844.2 370 L845.3 376 L846.6 382 L847.9 388 L849.4 394 L850.9 400 L852.5 406 L854 412 L855.6 418 L857.3 424 L858.9 430 L860.6 436 L862 442 L863.3 448 L864.4 454 L865.1 460 L865.6 466 L866 472 L866.1 478 L866.1 484 L866.1 490 L865.9 496 L865.8 502 L865.6 508 L865.5 514 L865.2 520 L864.5 526 L863.3 532 L861.7 538 L859.8 544 L857.5 550 L855.8 556 L854.6 562 L853.9 568 L853.6 574 L853.6 580 L853.7 586 L853.7 592 L853.8 598 L853.8 604 L853.7 610 L853.6 616 L853.3 622 L853 628 L852.7 634 L852.3 640 L851.9 646 L851.4 652 L850.8 658 L850.1 664 L849.3 670 L848.6 676 L847.9 682 L847.3 688 L846.7 694 L846.1 700 L845.5 706 L845 712 L844.4 718 L843.9 724 L843.3 730 L842.6 736 L842 742 L841.7 748 L841.4 752M932.9 70 L932.8 76 L932.6 82 L932.4 88 L931.9 94 L931.2 100 L930.1 106 L928.7 112 L927.1 118 L925.3 124 L923 130 L920.2 136 L916.8 142 L912.8 148 L908.4 154 L904 160 L899.5 166 L895 172 L890.5 178 L886.2 184 L882.1 190 L878.1 196 L874.4 202 L870.8 208 L867.5 214 L864.6 220 L861.9 226 L859.4 232 L857.3 238 L855.4 244 L853.7 250 L852.2 256 L851 262 L849.9 268 L849 274 L848.1 280 L847.4 286 L846.7 292 L846.2 298 L845.8 304 L845.4 310 L845 316 L844.6 322 L844.2 328 L843.9 334 L843.6 340 L843.6 346 L843.8 352 L844.4 358 L845.1 364 L846.2 370 L847.4 376 L848.6 382 L850 388 L851.5 394 L853.1 400 L854.7 406 L856.3 412 L858 418 L859.7 424 L861.4 430 L863.1 436 L864.7 442 L866 448 L867.1 454 L867.9 460 L868.5 466 L869 472 L869.2 478 L869.3 484 L869.3 490 L869.3 496 L869.2 502 L869 508 L868.9 514 L868.7 520 L868.1 526 L866.9 532 L865.4 538 L863.4 544 L861.2 550 L859.5 556 L858.4 562 L857.6 568 L857.3 574 L857.3 580 L857.3 586 L857.3 592 L857.3 598 L857.3 604 L857.1 610 L856.9 616 L856.6 622 L856.2 628 L855.8 634 L855.4 640 L854.9 646 L854.3 652 L853.6 658 L852.9 664 L852.1 670 L851.3 676 L850.5 682 L849.8 688 L849.2 694 L848.5 700 L847.9 706 L847.4 712 L846.8 718 L846.2 724 L845.5 730 L844.9 736 L844.3 742 L843.9 748 L843.6 752M933.7 70 L933.6 76 L933.5 82 L933.3 88 L932.8 94 L932 100 L930.9 106 L929.6 112 L927.9 118 L926.2 124 L924 130 L921.2 136 L917.9 142 L914.1 148 L909.8 154 L905.5 160 L901.2 166 L896.8 172 L892.5 178 L888.3 184 L884.3 190 L880.5 196 L876.9 202 L873.5 208 L870.4 214 L867.5 220 L864.9 226 L862.7 232 L860.7 238 L858.8 244 L857.2 250 L855.8 256 L854.7 262 L853.7 268 L852.8 274 L852 280 L851.3 286 L850.7 292 L850.2 298 L849.8 304 L849.4 310 L849 316 L848.6 322 L848.3 328 L847.9 334 L847.6 340 L847.6 346 L847.8 352 L848.3 358 L849.1 364 L850.1 370 L851.2 376 L852.4 382 L853.8 388 L855.2 394 L856.7 400 L858.3 406 L859.8 412 L861.4 418 L863.1 424 L864.8 430 L866.4 436 L867.9 442 L869.2 448 L870.3 454 L871.1 460 L871.6 466 L872 472 L872.2 478 L872.3 484 L872.3 490 L872.2 496 L872 502 L871.9 508 L871.8 514 L871.5 520 L870.9 526 L869.7 532 L868.2 538 L866.2 544 L864.1 550 L862.4 556 L861.3 562 L860.6 568 L860.3 574 L860.3 580 L860.3 586 L860.4 592 L860.4 598 L860.4 604 L860.3 610 L860.1 616 L859.8 622 L859.5 628 L859.1 634 L858.7 640 L858.2 646 L857.7 652 L857 658 L856.3 664 L855.6 670 L854.8 676 L854.1 682 L853.5 688 L852.8 694 L852.3 700 L851.7 706 L851.2 712 L850.6 718 L850 724 L849.4 730 L848.8 736 L848.2 742 L847.9 748 L847.6 752M936.8 70 L936.7 76 L936.6 82 L936.5 88 L936 94 L935.3 100 L934.3 106 L933.1 112 L931.5 118 L929.9 124 L927.8 130 L925.2 136 L922.1 142 L918.5 148 L914.5 154 L910.5 160 L906.5 166 L902.5 172 L898.5 178 L894.6 184 L891 190 L887.5 196 L884.2 202 L881 208 L878.2 214 L875.6 220 L873.2 226 L871.2 232 L869.3 238 L867.7 244 L866.3 250 L865 256 L863.9 262 L863.1 268 L862.3 274 L861.5 280 L860.9 286 L860.4 292 L859.9 298 L859.5 304 L859.1 310 L858.7 316 L858.3 322 L858 328 L857.6 334 L857.3 340 L857.2 346 L857.4 352 L857.8 358 L858.5 364 L859.5 370 L860.5 376 L861.6 382 L862.9 388 L864.3 394 L865.7 400 L867.1 406 L868.5 412 L870 418 L871.6 424 L873.2 430 L874.7 436 L876.1 442 L877.3 448 L878.2 454 L878.9 460 L879.4 466 L879.7 472 L879.9 478 L879.9 484 L879.8 490 L879.7 496 L879.5 502 L879.3 508 L879.1 514 L878.9 520 L878.2 526 L877.1 532 L875.6 538 L873.8 544 L871.7 550 L870.2 556 L869.2 562 L868.5 568 L868.3 574 L868.3 580 L868.4 586 L868.5 592 L868.6 598 L868.6 604 L868.6 610 L868.4 616 L868.2 622 L867.9 628 L867.7 634 L867.3 640 L866.9 646 L866.4 652 L865.9 658 L865.2 664 L864.5 670 L863.9 676 L863.2 682 L862.6 688 L862 694 L861.5 700 L861 706 L860.5 712 L860 718 L859.5 724 L858.9 730 L858.3 736 L857.8 742 L857.5 748 L857.2 752M937 70 L937 76 L937 82 L936.9 88 L936.6 94 L935.9 100 L935.1 106 L933.9 112 L932.5 118 L931 124 L929 130 L926.6 136 L923.7 142 L920.3 148 L916.5 154 L912.7 160 L909 166 L905.2 172 L901.4 178 L897.8 184 L894.3 190 L891 196 L887.9 202 L885 208 L882.3 214 L879.8 220 L877.6 226 L875.7 232 L874 238 L872.4 244 L871.1 250 L869.9 256 L868.8 262 L868 268 L867.2 274 L866.5 280 L865.8 286 L865.3 292 L864.8 298 L864.3 304 L863.8 310 L863.3 316 L862.8 322 L862.3 328 L861.9 334 L861.4 340 L861.3 346 L861.3 352 L861.6 358 L862.2 364 L863 370 L863.9 376 L864.9 382 L866 388 L867.2 394 L868.5 400 L869.8 406 L871.2 412 L872.5 418 L874 424 L875.5 430 L876.9 436 L878.2 442 L879.3 448 L880.2 454 L880.8 460 L881.3 466 L881.6 472 L881.7 478 L881.7 484 L881.6 490 L881.5 496 L881.3 502 L881.1 508 L881 514 L880.8 520 L880.1 526 L879 532 L877.6 538 L875.9 544 L874 550 L872.5 556 L871.6 562 L871.1 568 L870.9 574 L871.1 580 L871.2 586 L871.4 592 L871.6 598 L871.7 604 L871.8 610 L871.7 616 L871.6 622 L871.5 628 L871.3 634 L871.1 640 L870.8 646 L870.4 652 L869.9 658 L869.4 664 L868.8 670 L868.2 676 L867.6 682 L867.1 688 L866.6 694 L866.2 700 L865.7 706 L865.3 712 L864.8 718 L864.3 724 L863.8 730 L863.3 736 L862.8 742 L862.5 748 L862.2 752M937.9 70 L937.9 76 L937.9 82 L937.8 88 L937.4 94 L936.8 100 L935.8 106 L934.7 112 L933.2 118 L931.6 124 L929.6 130 L927.1 136 L924.1 142 L920.6 148 L916.7 154 L912.8 160 L909 166 L905.1 172 L901.1 178 L897.4 184 L893.8 190 L890.4 196 L887.2 202 L884.1 208 L881.3 214 L878.8 220 L876.5 226 L874.4 232 L872.6 238 L871 244 L869.6 250 L868.3 256 L867.2 262 L866.2 268 L865.4 274 L864.6 280 L863.9 286 L863.3 292 L862.8 298 L862.3 304 L861.8 310 L861.3 316 L860.9 322 L860.4 328 L859.9 334 L859.5 340 L859.4 346 L859.5 352 L859.8 358 L860.4 364 L861.3 370 L862.2 376 L863.3 382 L864.5 388 L865.8 394 L867.2 400 L868.6 406 L870 412 L871.5 418 L873 424 L874.6 430 L876.1 436 L877.5 442 L878.7 448 L879.7 454 L880.4 460 L881 466 L881.3 472 L881.5 478 L881.6 484 L881.6 490 L881.5 496 L881.4 502 L881.3 508 L881.2 514 L881 520 L880.4 526 L879.4 532 L878 538 L876.3 544 L874.3 550 L872.9 556 L871.9 562 L871.4 568 L871.2 574 L871.3 580 L871.5 586 L871.6 592 L871.7 598 L871.8 604 L871.8 610 L871.7 616 L871.6 622 L871.3 628 L871.1 634 L870.8 640 L870.4 646 L869.9 652 L869.4 658 L868.8 664 L868.1 670 L867.4 676 L866.8 682 L866.2 688 L865.6 694 L865 700 L864.5 706 L864 712 L863.5 718 L862.9 724 L862.3 730 L861.7 736 L861.1 742 L860.8 748 L860.5 752M942.7 70 L942.7 76 L942.7 82 L942.7 88 L942.3 94 L941.7 100 L940.8 106 L939.6 112 L938.2 118 L936.7 124 L934.7 130 L932.3 136 L929.5 142 L926.2 148 L922.5 154 L918.9 160 L915.2 166 L911.6 172 L907.9 178 L904.4 184 L901.1 190 L897.9 196 L894.9 202 L892.1 208 L889.4 214 L887.1 220 L884.9 226 L883 232 L881.3 238 L879.8 244 L878.4 250 L877.2 256 L876.1 262 L875.3 268 L874.4 274 L873.7 280 L873 286 L872.5 292 L871.9 298 L871.4 304 L870.9 310 L870.5 316 L870 322 L869.5 328 L869.1 334 L868.7 340 L868.6 346 L868.7 352 L869.1 358 L869.7 364 L870.6 370 L871.6 376 L872.7 382 L873.9 388 L875.3 394 L876.7 400 L878.1 406 L879.6 412 L881.1 418 L882.7 424 L884.3 430 L885.9 436 L887.3 442 L888.6 448 L889.7 454 L890.5 460 L891.1 466 L891.5 472 L891.8 478 L891.9 484 L892 490 L892 496 L891.9 502 L891.8 508 L891.7 514 L891.6 520 L891 526 L890 532 L888.6 538 L887 544 L885.2 550 L883.8 556 L882.9 562 L882.3 568 L882.1 574 L882.2 580 L882.2 586 L882.3 592 L882.3 598 L882.3 604 L882.2 610 L882 616 L881.7 622 L881.4 628 L881 634 L880.6 640 L880.1 646 L879.5 652 L878.8 658 L878.1 664 L877.3 670 L876.5 676 L875.8 682 L875.1 688 L874.4 694 L873.8 700 L873.2 706 L872.7 712 L872.1 718 L871.5 724 L870.9 730 L870.2 736 L869.6 742 L869.3 748 L869 752M944.7 70 L944.7 76 L944.6 82 L944.4 88 L944 94 L943.3 100 L942.3 106 L941.1 112 L939.6 118 L938.1 124 L936.1 130 L933.7 136 L931 142 L927.8 148 L924.3 154 L920.8 160 L917.3 166 L913.9 172 L910.5 178 L907.2 184 L904.1 190 L901.2 196 L898.4 202 L895.8 208 L893.5 214 L891.3 220 L889.4 226 L887.8 232 L886.4 238 L885.1 244 L884 250 L883 256 L882.2 262 L881.6 268 L881 274 L880.5 280 L880.1 286 L879.7 292 L879.4 298 L879 304 L878.7 310 L878.4 316 L878 322 L877.7 328 L877.4 334 L877.1 340 L877 346 L877.2 352 L877.6 358 L878.3 364 L879.1 370 L880.1 376 L881.1 382 L882.2 388 L883.5 394 L884.8 400 L886 406 L887.4 412 L888.7 418 L890.1 424 L891.5 430 L892.8 436 L894 442 L895 448 L895.9 454 L896.4 460 L896.8 466 L897 472 L897 478 L896.9 484 L896.7 490 L896.5 496 L896.2 502 L895.9 508 L895.6 514 L895.3 520 L894.6 526 L893.4 532 L892.1 538 L890.4 544 L888.6 550 L887.3 556 L886.4 562 L885.9 568 L885.7 574 L885.9 580 L886 586 L886.2 592 L886.3 598 L886.4 604 L886.5 610 L886.5 616 L886.4 622 L886.3 628 L886.1 634 L885.9 640 L885.7 646 L885.3 652 L884.9 658 L884.4 664 L883.9 670 L883.3 676 L882.8 682 L882.3 688 L881.9 694 L881.5 700 L881.1 706 L880.6 712 L880.2 718 L879.7 724 L879.2 730 L878.7 736 L878.2 742 L877.9 748 L877.6 752M944.1 70 L943.9 76 L943.7 82 L943.5 88 L943 94 L942.2 100 L941.2 106 L940 112 L938.5 118 L937 124 L935.1 130 L932.8 136 L930.1 142 L927 148 L923.7 154 L920.4 160 L917.1 166 L913.8 172 L910.6 178 L907.5 184 L904.6 190 L901.9 196 L899.3 202 L897 208 L894.8 214 L892.9 220 L891.2 226 L889.7 232 L888.4 238 L887.3 244 L886.4 250 L885.5 256 L884.9 262 L884.3 268 L883.8 274 L883.4 280 L883.1 286 L882.7 292 L882.5 298 L882.2 304 L881.9 310 L881.6 316 L881.2 322 L880.9 328 L880.6 334 L880.3 340 L880.2 346 L880.4 352 L880.8 358 L881.4 364 L882.2 370 L883.1 376 L884.1 382 L885.2 388 L886.4 394 L887.6 400 L888.9 406 L890.2 412 L891.5 418 L892.8 424 L894.2 430 L895.5 436 L896.6 442 L897.7 448 L898.4 454 L899 460 L899.3 466 L899.5 472 L899.5 478 L899.3 484 L899.1 490 L898.8 496 L898.5 502 L898.2 508 L897.9 514 L897.4 520 L896.6 526 L895.5 532 L894 538 L892.3 544 L890.4 550 L889.1 556 L888.1 562 L887.5 568 L887.2 574 L887.3 580 L887.3 586 L887.4 592 L887.5 598 L887.5 604 L887.4 610 L887.3 616 L887.2 622 L887 628 L886.7 634 L886.5 640 L886.2 646 L885.8 652 L885.3 658 L884.8 664 L884.3 670 L883.8 676 L883.3 682 L882.8 688 L882.4 694 L882.1 700 L881.7 706 L881.4 712 L881.1 718 L880.8 724 L880.4 730 L880 736 L879.7 742 L879.5 748 L879.4 752M946.4 70 L946.2 76 L946.1 82 L945.8 88 L945.3 94 L944.6 100 L943.6 106 L942.3 112 L940.8 118 L939.2 124 L937.3 130 L935 136 L932.3 142 L929.2 148 L925.8 154 L922.5 160 L919.2 166 L915.9 172 L912.7 178 L909.6 184 L906.7 190 L903.9 196 L901.4 202 L899 208 L896.8 214 L894.9 220 L893.1 226 L891.6 232 L890.4 238 L889.3 244 L888.3 250 L887.4 256 L886.7 262 L886.2 268 L885.7 274 L885.2 280 L884.9 286 L884.5 292 L884.3 298 L884 304 L883.6 310 L883.3 316 L883 322 L882.6 328 L882.3 334 L882 340 L882 346 L882.1 352 L882.5 358 L883.1 364 L883.9 370 L884.8 376 L885.8 382 L886.9 388 L888.1 394 L889.3 400 L890.6 406 L891.9 412 L893.2 418 L894.5 424 L895.8 430 L897.1 436 L898.3 442 L899.3 448 L900.1 454 L900.6 460 L900.9 466 L901.1 472 L901.1 478 L901 484 L900.8 490 L900.6 496 L900.2 502 L899.9 508 L899.6 514 L899.2 520 L898.5 526 L897.4 532 L896 538 L894.3 544 L892.6 550 L891.3 556 L890.4 562 L889.9 568 L889.7 574 L889.8 580 L889.9 586 L890.1 592 L890.2 598 L890.3 604 L890.3 610 L890.3 616 L890.2 622 L890.1 628 L889.9 634 L889.8 640 L889.5 646 L889.2 652 L888.8 658 L888.3 664 L887.8 670 L887.3 676 L886.9 682 L886.5 688 L886.1 694 L885.7 700 L885.4 706 L885 712 L884.7 718 L884.3 724 L883.9 730 L883.4 736 L883 742 L882.8 748 L882.6 752M949.1 70 L949 76 L948.9 82 L948.7 88 L948.2 94 L947.5 100 L946.6 106 L945.3 112 L943.9 118 L942.4 124 L940.5 130 L938.3 136 L935.8 142 L932.9 148 L929.7 154 L926.6 160 L923.6 166 L920.6 172 L917.6 178 L914.8 184 L912.1 190 L909.7 196 L907.4 202 L905.3 208 L903.3 214 L901.6 220 L900.1 226 L898.9 232 L897.8 238 L896.8 244 L896 250 L895.3 256 L894.7 262 L894.2 268 L893.8 274 L893.4 280 L893.1 286 L892.7 292 L892.4 298 L892.1 304 L891.7 310 L891.3 316 L890.8 322 L890.3 328 L889.9 334 L889.5 340 L889.2 346 L889.2 352 L889.4 358 L889.8 364 L890.5 370 L891.2 376 L892 382 L893 388 L894 394 L895.1 400 L896.2 406 L897.4 412 L898.6 418 L899.9 424 L901.2 430 L902.5 436 L903.6 442 L904.7 448 L905.5 454 L906.1 460 L906.5 466 L906.9 472 L907 478 L907.1 484 L907 490 L907 496 L906.8 502 L906.7 508 L906.6 514 L906.3 520 L905.8 526 L904.8 532 L903.6 538 L902.2 544 L900.6 550 L899.5 556 L898.8 562 L898.4 568 L898.2 574 L898.4 580 L898.5 586 L898.6 592 L898.7 598 L898.7 604 L898.6 610 L898.5 616 L898.3 622 L898 628 L897.7 634 L897.4 640 L897 646 L896.5 652 L896 658 L895.4 664 L894.7 670 L894.1 676 L893.5 682 L893 688 L892.5 694 L892.1 700 L891.7 706 L891.3 712 L890.9 718 L890.5 724 L890.1 730 L889.7 736 L889.3 742 L889.1 748 L889 752M950.2 70 L950.1 76 L950 82 L949.8 88 L949.4 94 L948.7 100 L947.8 106 L946.6 112 L945.2 118 L943.7 124 L941.8 130 L939.6 136 L937.1 142 L934.2 148 L931 154 L927.9 160 L924.8 166 L921.8 172 L918.7 178 L915.9 184 L913.2 190 L910.6 196 L908.3 202 L906 208 L904 214 L902.2 220 L900.7 226 L899.3 232 L898.1 238 L897.1 244 L896.2 250 L895.5 256 L894.8 262 L894.3 268 L893.9 274 L893.5 280 L893.2 286 L892.9 292 L892.6 298 L892.4 304 L892.1 310 L891.8 316 L891.4 322 L891.1 328 L890.8 334 L890.6 340 L890.5 346 L890.7 352 L891.1 358 L891.7 364 L892.5 370 L893.4 376 L894.4 382 L895.5 388 L896.6 394 L897.8 400 L899.1 406 L900.3 412 L901.6 418 L902.8 424 L904.1 430 L905.4 436 L906.5 442 L907.4 448 L908.1 454 L908.6 460 L908.9 466 L909.1 472 L909 478 L908.9 484 L908.7 490 L908.4 496 L908 502 L907.7 508 L907.3 514 L906.9 520 L906.1 526 L905 532 L903.6 538 L902.1 544 L900.4 550 L899.2 556 L898.4 562 L897.9 568 L897.8 574 L897.9 580 L898 586 L898.2 592 L898.4 598 L898.5 604 L898.6 610 L898.6 616 L898.6 622 L898.5 628 L898.4 634 L898.3 640 L898.2 646 L897.9 652 L897.6 658 L897.2 664 L896.7 670 L896.3 676 L895.9 682 L895.5 688 L895.2 694 L894.8 700 L894.5 706 L894.2 712 L893.9 718 L893.5 724 L893.1 730 L892.6 736 L892.2 742 L892 748 L891.7 752M950 70 L949.9 76 L949.9 82 L949.8 88 L949.5 94 L948.9 100 L948.1 106 L947.1 112 L945.8 118 L944.6 124 L942.9 130 L941 136 L938.8 142 L936.2 148 L933.4 154 L930.6 160 L927.9 166 L925.2 172 L922.5 178 L920 184 L917.6 190 L915.3 196 L913.2 202 L911.2 208 L909.4 214 L907.7 220 L906.3 226 L905 232 L903.9 238 L902.9 244 L902 250 L901.2 256 L900.5 262 L899.9 268 L899.4 274 L898.9 280 L898.4 286 L897.9 292 L897.5 298 L897 304 L896.6 310 L896 316 L895.5 322 L895.1 328 L894.6 334 L894.2 340 L894 346 L894 352 L894.3 358 L894.8 364 L895.5 370 L896.4 376 L897.3 382 L898.4 388 L899.5 394 L900.8 400 L902 406 L903.3 412 L904.6 418 L906 424 L907.4 430 L908.7 436 L910 442 L911 448 L911.9 454 L912.5 460 L912.9 466 L913.2 472 L913.3 478 L913.3 484 L913.2 490 L913 496 L912.7 502 L912.5 508 L912.2 514 L911.8 520 L911 526 L910 532 L908.7 538 L907.1 544 L905.5 550 L904.3 556 L903.5 562 L903 568 L902.8 574 L902.9 580 L903 586 L903 592 L903.1 598 L903.2 604 L903.2 610 L903.1 616 L903 622 L902.8 628 L902.7 634 L902.5 640 L902.2 646 L901.9 652 L901.5 658 L901.1 664 L900.6 670 L900.1 676 L899.7 682 L899.3 688 L899 694 L898.7 700 L898.4 706 L898.1 712 L897.7 718 L897.4 724 L897 730 L896.6 736 L896.2 742 L896 748 L895.8 752M956.9 70 L956.9 76 L956.8 82 L956.7 88 L956.3 94 L955.7 100 L954.9 106 L953.9 112 L952.7 118 L951.4 124 L949.8 130 L948.1 136 L946 142 L943.7 148 L941.3 154 L938.9 160 L936.6 166 L934.3 172 L932.1 178 L930 184 L928.1 190 L926.3 196 L924.7 202 L923.2 208 L921.8 214 L920.7 220 L919.6 226 L918.8 232 L918.1 238 L917.5 244 L917 250 L916.5 256 L916.1 262 L915.8 268 L915.5 274 L915.3 280 L915 286 L914.8 292 L914.5 298 L914.1 304 L913.7 310 L913.3 316 L912.8 322 L912.3 328 L911.8 334 L911.4 340 L911.1 346 L911.1 352 L911.2 358 L911.6 364 L912.1 370 L912.8 376 L913.5 382 L914.4 388 L915.4 394 L916.4 400 L917.4 406 L918.5 412 L919.6 418 L920.8 424 L921.9 430 L923.1 436 L924.1 442 L925 448 L925.8 454 L926.3 460 L926.7 466 L926.9 472 L927 478 L926.9 484 L926.8 490 L926.6 496 L926.4 502 L926.2 508 L925.9 514 L925.5 520 L924.9 526 L923.9 532 L922.8 538 L921.5 544 L920.2 550 L919.3 556 L918.7 562 L918.3 568 L918.3 574 L918.4 580 L918.6 586 L918.8 592 L918.9 598 L919.1 604 L919.1 610 L919.1 616 L919.1 622 L918.9 628 L918.8 634 L918.7 640 L918.5 646 L918.2 652 L917.8 658 L917.4 664 L916.9 670 L916.4 676 L916 682 L915.6 688 L915.2 694 L914.9 700 L914.6 706 L914.2 712 L913.9 718 L913.5 724 L913.1 730 L912.7 736 L912.3 742 L912.1 748 L911.8 752M959.1 70 L958.9 76 L958.7 82 L958.4 88 L957.9 94 L957.2 100 L956.2 106 L955.1 112 L953.7 118 L952.3 124 L950.6 130 L948.7 136 L946.6 142 L944.2 148 L941.7 154 L939.3 160 L937 166 L934.7 172 L932.4 178 L930.3 184 L928.4 190 L926.6 196 L924.9 202 L923.4 208 L922.1 214 L920.9 220 L919.9 226 L919 232 L918.3 238 L917.7 244 L917.2 250 L916.8 256 L916.4 262 L916.1 268 L915.9 274 L915.7 280 L915.5 286 L915.3 292 L915.1 298 L914.8 304 L914.5 310 L914.2 316 L913.8 322 L913.5 328 L913.1 334 L912.9 340 L912.8 346 L912.9 352 L913.2 358 L913.7 364 L914.4 370 L915.3 376 L916.2 382 L917.2 388 L918.3 394 L919.5 400 L920.7 406 L921.9 412 L923.1 418 L924.4 424 L925.7 430 L926.9 436 L928.1 442 L929.1 448 L929.9 454 L930.5 460 L930.9 466 L931.2 472 L931.3 478 L931.3 484 L931.2 490 L931 496 L930.8 502 L930.5 508 L930.3 514 L929.9 520 L929.2 526 L928.2 532 L927.1 538 L925.8 544 L924.4 550 L923.5 556 L922.9 562 L922.5 568 L922.4 574 L922.4 580 L922.5 586 L922.6 592 L922.6 598 L922.6 604 L922.6 610 L922.4 616 L922.2 622 L922 628 L921.7 634 L921.4 640 L921 646 L920.5 652 L920 658 L919.4 664 L918.7 670 L918.1 676 L917.5 682 L916.9 688 L916.4 694 L915.9 700 L915.5 706 L915 712 L914.6 718 L914.1 724 L913.6 730 L913.2 736 L912.7 742 L912.4 748 L912.2 752M959.6 70 L959.5 76 L959.4 82 L959.3 88 L958.9 94 L958.4 100 L957.6 106 L956.6 112 L955.4 118 L954.2 124 L952.8 130 L951.1 136 L949.2 142 L947.2 148 L945 154 L942.9 160 L940.8 166 L938.8 172 L936.9 178 L935.1 184 L933.5 190 L931.9 196 L930.5 202 L929.3 208 L928.2 214 L927.2 220 L926.3 226 L925.6 232 L925.1 238 L924.6 244 L924.2 250 L923.8 256 L923.5 262 L923.2 268 L923 274 L922.7 280 L922.5 286 L922.3 292 L921.9 298 L921.6 304 L921.2 310 L920.7 316 L920.2 322 L919.7 328 L919.2 334 L918.8 340 L918.5 346 L918.5 352 L918.6 358 L918.9 364 L919.5 370 L920.1 376 L920.8 382 L921.7 388 L922.6 394 L923.6 400 L924.6 406 L925.6 412 L926.7 418 L927.8 424 L928.9 430 L930 436 L931 442 L931.9 448 L932.6 454 L933 460 L933.4 466 L933.6 472 L933.6 478 L933.5 484 L933.4 490 L933.2 496 L932.9 502 L932.6 508 L932.3 514 L931.9 520 L931.2 526 L930.3 532 L929.3 538 L928.1 544 L926.8 550 L926 556 L925.5 562 L925.2 568 L925.2 574 L925.4 580 L925.6 586 L925.8 592 L926 598 L926.2 604 L926.2 610 L926.3 616 L926.3 622 L926.2 628 L926.1 634 L926 640 L925.8 646 L925.5 652 L925.1 658 L924.7 664 L924.3 670 L923.8 676 L923.4 682 L923 688 L922.7 694 L922.3 700 L922 706 L921.7 712 L921.4 718 L921 724 L920.6 730 L920.2 736 L919.8 742 L919.6 748 L919.4 752M964 70 L963.9 76 L963.9 82 L963.8 88 L963.5 94 L963 100 L962.2 106 L961.3 112 L960.2 118 L959 124 L957.7 130 L956.2 136 L954.6 142 L952.7 148 L950.8 154 L949 160 L947.3 166 L945.6 172 L944 178 L942.6 184 L941.2 190 L940 196 L938.9 202 L937.9 208 L937.1 214 L936.3 220 L935.7 226 L935.2 232 L934.9 238 L934.6 244 L934.3 250 L934.1 256 L933.9 262 L933.7 268 L933.6 274 L933.4 280 L933.3 286 L933.1 292 L932.9 298 L932.6 304 L932.2 310 L931.7 316 L931.2 322 L930.8 328 L930.3 334 L929.9 340 L929.6 346 L929.6 352 L929.7 358 L930 364 L930.5 370 L931.1 376 L931.7 382 L932.5 388 L933.4 394 L934.3 400 L935.3 406 L936.2 412 L937.3 418 L938.3 424 L939.3 430 L940.3 436 L941.2 442 L942 448 L942.6 454 L943.1 460 L943.4 466 L943.5 472 L943.5 478 L943.4 484 L943.2 490 L943 496 L942.7 502 L942.4 508 L942 514 L941.6 520 L940.9 526 L940 532 L939 538 L937.9 544 L936.8 550 L936 556 L935.6 562 L935.4 568 L935.4 574 L935.6 580 L935.8 586 L936 592 L936.3 598 L936.4 604 L936.5 610 L936.6 616 L936.6 622 L936.5 628 L936.5 634 L936.4 640 L936.2 646 L936 652 L935.7 658 L935.3 664 L934.9 670 L934.5 676 L934.2 682 L933.8 688 L933.5 694 L933.2 700 L933 706 L932.7 712 L932.5 718 L932.2 724 L931.8 730 L931.5 736 L931.2 742 L931 748 L930.8 752M965.8 70 L965.7 76 L965.5 82 L965.3 88 L964.8 94 L964.2 100 L963.3 106 L962.2 112 L960.9 118 L959.6 124 L958.1 130 L956.5 136 L954.7 142 L952.7 148 L950.7 154 L948.7 160 L946.8 166 L945.1 172 L943.4 178 L941.8 184 L940.4 190 L939.1 196 L937.9 202 L936.9 208 L936 214 L935.2 220 L934.6 226 L934.1 232 L933.7 238 L933.4 244 L933.2 250 L933 256 L932.8 262 L932.8 268 L932.7 274 L932.6 280 L932.6 286 L932.5 292 L932.4 298 L932.2 304 L931.9 310 L931.6 316 L931.3 322 L930.9 328 L930.6 334 L930.3 340 L930.2 346 L930.3 352 L930.6 358 L931 364 L931.7 370 L932.4 376 L933.2 382 L934.1 388 L935.1 394 L936.1 400 L937.1 406 L938.2 412 L939.3 418 L940.4 424 L941.5 430 L942.5 436 L943.5 442 L944.3 448 L944.9 454 L945.3 460 L945.6 466 L945.7 472 L945.7 478 L945.5 484 L945.3 490 L944.9 496 L944.6 502 L944.1 508 L943.7 514 L943.2 520 L942.3 526 L941.3 532 L940.2 538 L938.9 544 L937.7 550 L936.8 556 L936.3 562 L935.9 568 L935.8 574 L935.8 580 L935.9 586 L936 592 L936 598 L936.1 604 L936.1 610 L936 616 L935.9 622 L935.8 628 L935.6 634 L935.5 640 L935.2 646 L934.9 652 L934.6 658 L934.2 664 L933.8 670 L933.4 676 L933.1 682 L932.8 688 L932.5 694 L932.3 700 L932.1 706 L931.9 712 L931.7 718 L931.5 724 L931.3 730 L931.1 736 L930.9 742 L930.9 748 L930.8 752M967.5 70 L967.7 76 L968 82 L968.1 88 L968.1 94 L967.9 100 L967.5 106 L966.9 112 L966.1 118 L965.3 124 L964.3 130 L963.2 136 L961.9 142 L960.5 148 L959 154 L957.6 160 L956.3 166 L955 172 L953.8 178 L952.7 184 L951.6 190 L950.6 196 L949.7 202 L948.9 208 L948.2 214 L947.6 220 L947 226 L946.5 232 L946.2 238 L945.8 244 L945.5 250 L945.2 256 L944.9 262 L944.7 268 L944.4 274 L944.2 280 L944 286 L943.8 292 L943.5 298 L943.1 304 L942.7 310 L942.3 316 L941.8 322 L941.4 328 L941 334 L940.7 340 L940.6 346 L940.7 352 L941 358 L941.4 364 L942.1 370 L942.9 376 L943.7 382 L944.7 388 L945.7 394 L946.8 400 L947.9 406 L949 412 L950.1 418 L951.2 424 L952.3 430 L953.3 436 L954.2 442 L955 448 L955.6 454 L955.9 460 L956.2 466 L956.2 472 L956.1 478 L955.8 484 L955.5 490 L955 496 L954.4 502 L953.9 508 L953.3 514 L952.6 520 L951.6 526 L950.5 532 L949.3 538 L948.1 544 L946.9 550 L946.1 556 L945.6 562 L945.3 568 L945.2 574 L945.4 580 L945.5 586 L945.7 592 L945.9 598 L946.1 604 L946.3 610 L946.5 616 L946.6 622 L946.7 628 L946.9 634 L947 640 L947.1 646 L947.2 652 L947.2 658 L947.1 664 L947 670 L946.9 676 L946.8 682 L946.8 688 L946.8 694 L946.8 700 L946.7 706 L946.7 712 L946.6 718 L946.5 724 L946.3 730 L946 736 L945.8 742 L945.6 748 L945.4 752M970.4 70 L970.4 76 L970.3 82 L970.2 88 L970 94 L969.5 100 L968.8 106 L968 112 L967 118 L966 124 L964.9 130 L963.7 136 L962.4 142 L961.1 148 L959.8 154 L958.5 160 L957.4 166 L956.4 172 L955.5 178 L954.7 184 L954 190 L953.4 196 L952.9 202 L952.6 208 L952.3 214 L952.1 220 L952 226 L951.9 232 L952 238 L952 244 L952.1 250 L952.2 256 L952.2 262 L952.3 268 L952.3 274 L952.4 280 L952.4 286 L952.3 292 L952.1 298 L951.8 304 L951.4 310 L950.9 316 L950.4 322 L949.8 328 L949.3 334 L948.8 340 L948.5 346 L948.3 352 L948.3 358 L948.5 364 L948.8 370 L949.2 376 L949.8 382 L950.4 388 L951.1 394 L951.8 400 L952.6 406 L953.4 412 L954.2 418 L955.1 424 L956 430 L956.8 436 L957.5 442 L958.2 448 L958.7 454 L959 460 L959.3 466 L959.4 472 L959.3 478 L959.2 484 L959 490 L958.7 496 L958.4 502 L958.1 508 L957.7 514 L957.3 520 L956.6 526 L955.8 532 L954.9 538 L954.1 544 L953.2 550 L952.7 556 L952.5 562 L952.5 568 L952.6 574 L952.8 580 L953.1 586 L953.4 592 L953.6 598 L953.9 604 L954 610 L954.2 616 L954.2 622 L954.2 628 L954.2 634 L954.2 640 L954.1 646 L953.9 652 L953.7 658 L953.4 664 L953 670 L952.7 676 L952.4 682 L952.1 688 L951.8 694 L951.5 700 L951.3 706 L951.1 712 L950.9 718 L950.6 724 L950.3 730 L950 736 L949.7 742 L949.5 748 L949.4 752M970.8 70 L970.8 76 L970.8 82 L970.8 88 L970.5 94 L970.1 100 L969.5 106 L968.7 112 L967.7 118 L966.7 124 L965.7 130 L964.5 136 L963.2 142 L961.8 148 L960.5 154 L959.3 160 L958.1 166 L957.1 172 L956.1 178 L955.2 184 L954.5 190 L953.9 196 L953.3 202 L952.9 208 L952.5 214 L952.3 220 L952.1 226 L952 232 L951.9 238 L951.9 244 L951.9 250 L951.9 256 L951.9 262 L951.9 268 L951.9 274 L951.8 280 L951.7 286 L951.5 292 L951.3 298 L950.9 304 L950.4 310 L949.8 316 L949.2 322 L948.7 328 L948.1 334 L947.5 340 L947.1 346 L946.9 352 L946.9 358 L947 364 L947.2 370 L947.6 376 L948.1 382 L948.7 388 L949.4 394 L950.1 400 L950.8 406 L951.6 412 L952.5 418 L953.3 424 L954.2 430 L955.1 436 L955.8 442 L956.5 448 L957 454 L957.4 460 L957.6 466 L957.8 472 L957.8 478 L957.7 484 L957.6 490 L957.3 496 L957.1 502 L956.8 508 L956.5 514 L956.1 520 L955.5 526 L954.8 532 L954 538 L953.2 544 L952.4 550 L952 556 L951.8 562 L951.8 568 L952 574 L952.4 580 L952.7 586 L953 592 L953.4 598 L953.7 604 L953.9 610 L954.1 616 L954.2 622 L954.3 628 L954.4 634 L954.4 640 L954.3 646 L954.2 652 L954 658 L953.7 664 L953.4 670 L953.1 676 L952.7 682 L952.5 688 L952.2 694 L952 700 L951.7 706 L951.5 712 L951.3 718 L951 724 L950.7 730 L950.3 736 L950 742 L949.8 748 L949.6 752M974.2 70 L973.9 76 L973.7 82 L973.3 88 L972.8 94 L972.1 100 L971.2 106 L970.2 112 L969 118 L967.8 124 L966.6 130 L965.3 136 L964 142 L962.7 148 L961.5 154 L960.4 160 L959.5 166 L958.7 172 L958.1 178 L957.6 184 L957.3 190 L957.1 196 L957 202 L957 208 L957.1 214 L957.3 220 L957.6 226 L957.9 232 L958.3 238 L958.7 244 L959.1 250 L959.4 256 L959.7 262 L959.9 268 L960.1 274 L960.2 280 L960.2 286 L960.1 292 L959.8 298 L959.4 304 L958.8 310 L958.2 316 L957.4 322 L956.7 328 L955.9 334 L955.2 340 L954.6 346 L954.2 352 L953.9 358 L953.8 364 L953.9 370 L954.1 376 L954.5 382 L954.9 388 L955.5 394 L956.2 400 L956.9 406 L957.8 412 L958.6 418 L959.6 424 L960.6 430 L961.6 436 L962.5 442 L963.3 448 L964 454 L964.6 460 L965.1 466 L965.5 472 L965.6 478 L965.7 484 L965.8 490 L965.6 496 L965.5 502 L965.2 508 L965 514 L964.6 520 L963.9 526 L963.1 532 L962.2 538 L961.3 544 L960.4 550 L959.8 556 L959.5 562 L959.2 568 L959.1 574 L959.2 580 L959.2 586 L959.3 592 L959.3 598 L959.3 604 L959.3 610 L959.3 616 L959.2 622 L959.1 628 L959.1 634 L959 640 L958.9 646 L958.8 652 L958.6 658 L958.4 664 L958.2 670 L958.1 676 L958 682 L957.9 688 L957.9 694 L957.9 700 L957.9 706 L957.9 712 L957.9 718 L957.9 724 L957.8 730 L957.7 736 L957.5 742 L957.4 748 L957.3 752M975.6 70 L975.7 76 L975.8 82 L975.8 88 L975.7 94 L975.4 100 L974.9 106 L974.3 112 L973.5 118 L972.7 124 L971.8 130 L970.9 136 L970 142 L969.1 148 L968.3 154 L967.5 160 L966.9 166 L966.4 172 L966 178 L965.7 184 L965.4 190 L965.3 196 L965.3 202 L965.3 208 L965.4 214 L965.5 220 L965.7 226 L966 232 L966.2 238 L966.5 244 L966.7 250 L966.9 256 L967.1 262 L967.2 268 L967.3 274 L967.3 280 L967.3 286 L967.2 292 L966.9 298 L966.5 304 L965.9 310 L965.3 316 L964.6 322 L963.9 328 L963.3 334 L962.6 340 L962.1 346 L961.8 352 L961.6 358 L961.5 364 L961.6 370 L961.8 376 L962.1 382 L962.5 388 L963 394 L963.5 400 L964.1 406 L964.7 412 L965.3 418 L966 424 L966.7 430 L967.3 436 L967.9 442 L968.4 448 L968.8 454 L969.1 460 L969.2 466 L969.3 472 L969.2 478 L969 484 L968.8 490 L968.5 496 L968.2 502 L967.9 508 L967.5 514 L967.1 520 L966.5 526 L965.8 532 L965.2 538 L964.5 544 L963.9 550 L963.7 556 L963.7 562 L963.9 568 L964.2 574 L964.6 580 L965 586 L965.4 592 L965.9 598 L966.3 604 L966.6 610 L966.9 616 L967.2 622 L967.4 628 L967.5 634 L967.7 640 L967.8 646 L967.8 652 L967.7 658 L967.6 664 L967.4 670 L967.2 676 L967.1 682 L966.9 688 L966.8 694 L966.7 700 L966.6 706 L966.5 712 L966.3 718 L966.1 724 L965.9 730 L965.7 736 L965.5 742 L965.3 748 L965.2 752M976.8 70 L976.8 76 L976.8 82 L976.7 88 L976.5 94 L976.1 100 L975.6 106 L974.9 112 L974 118 L973.2 124 L972.4 130 L971.6 136 L970.8 142 L970 148 L969.4 154 L968.9 160 L968.5 166 L968.2 172 L968 178 L968 184 L968 190 L968.1 196 L968.3 202 L968.6 208 L969 214 L969.3 220 L969.8 226 L970.2 232 L970.7 238 L971.1 244 L971.5 250 L971.9 256 L972.2 262 L972.5 268 L972.7 274 L972.8 280 L972.9 286 L972.9 292 L972.6 298 L972.3 304 L971.8 310 L971.2 316 L970.6 322 L969.9 328 L969.3 334 L968.7 340 L968.2 346 L967.8 352 L967.6 358 L967.6 364 L967.7 370 L967.8 376 L968.1 382 L968.5 388 L969 394 L969.5 400 L970.1 406 L970.7 412 L971.4 418 L972 424 L972.7 430 L973.4 436 L974 442 L974.5 448 L975 454 L975.3 460 L975.5 466 L975.6 472 L975.6 478 L975.5 484 L975.4 490 L975.2 496 L974.9 502 L974.6 508 L974.3 514 L974 520 L973.4 526 L972.8 532 L972.2 538 L971.7 544 L971.2 550 L971.1 556 L971.1 562 L971.3 568 L971.6 574 L972.1 580 L972.5 586 L972.9 592 L973.2 598 L973.6 604 L973.9 610 L974.1 616 L974.2 622 L974.3 628 L974.4 634 L974.4 640 L974.3 646 L974.2 652 L974 658 L973.7 664 L973.3 670 L973 676 L972.6 682 L972.3 688 L972 694 L971.7 700 L971.4 706 L971.1 712 L970.8 718 L970.4 724 L970.1 730 L969.7 736 L969.3 742 L969 748 L968.8 752M984.2 70 L984.1 76 L983.9 82 L983.7 88 L983.4 94 L982.8 100 L982.1 106 L981.3 112 L980.3 118 L979.2 124 L978.3 130 L977.3 136 L976.4 142 L975.6 148 L975 154 L974.4 160 L974 166 L973.8 172 L973.7 178 L973.7 184 L973.8 190 L974 196 L974.3 202 L974.7 208 L975.1 214 L975.6 220 L976.1 226 L976.6 232 L977.2 238 L977.8 244 L978.3 250 L978.8 256 L979.3 262 L979.7 268 L980.1 274 L980.4 280 L980.7 286 L980.8 292 L980.8 298 L980.7 304 L980.5 310 L980.1 316 L979.7 322 L979.4 328 L979 334 L978.7 340 L978.5 346 L978.4 352 L978.5 358 L978.7 364 L979 370 L979.5 376 L980 382 L980.6 388 L981.2 394 L982 400 L982.7 406 L983.4 412 L984.2 418 L985 424 L985.7 430 L986.4 436 L987 442 L987.6 448 L987.9 454 L988.2 460 L988.3 466 L988.4 472 L988.2 478 L988 484 L987.7 490 L987.3 496 L986.8 502 L986.3 508 L985.7 514 L985.1 520 L984.2 526 L983.3 532 L982.5 538 L981.8 544 L981.1 550 L980.8 556 L980.6 562 L980.6 568 L980.6 574 L980.8 580 L980.9 586 L981.1 592 L981.2 598 L981.3 604 L981.4 610 L981.5 616 L981.5 622 L981.5 628 L981.5 634 L981.5 640 L981.4 646 L981.3 652 L981.1 658 L980.9 664 L980.6 670 L980.4 676 L980.2 682 L980.1 688 L980 694 L979.9 700 L979.9 706 L979.9 712 L979.9 718 L979.8 724 L979.8 730 L979.7 736 L979.6 742 L979.7 748 L979.7 752M984.3 70 L984.2 76 L984.2 82 L984 88 L983.7 94 L983.3 100 L982.7 106 L982 112 L981 118 L980.1 124 L979.3 130 L978.5 136 L977.8 142 L977.1 148 L976.6 154 L976.3 160 L976.1 166 L976 172 L976.1 178 L976.2 184 L976.5 190 L976.8 196 L977.3 202 L977.8 208 L978.3 214 L978.9 220 L979.5 226 L980.1 232 L980.8 238 L981.4 244 L981.9 250 L982.4 256 L982.9 262 L983.3 268 L983.6 274 L983.9 280 L984.2 286 L984.3 292 L984.2 298 L984 304 L983.6 310 L983.2 316 L982.7 322 L982.2 328 L981.7 334 L981.3 340 L981 346 L980.8 352 L980.7 358 L980.8 364 L981 370 L981.4 376 L981.8 382 L982.3 388 L982.9 394 L983.5 400 L984.2 406 L984.9 412 L985.6 418 L986.3 424 L987 430 L987.7 436 L988.3 442 L988.8 448 L989.2 454 L989.5 460 L989.7 466 L989.8 472 L989.7 478 L989.5 484 L989.3 490 L989 496 L988.6 502 L988.2 508 L987.7 514 L987.2 520 L986.4 526 L985.7 532 L985 538 L984.4 544 L983.9 550 L983.8 556 L983.7 562 L983.8 568 L984 574 L984.2 580 L984.4 586 L984.7 592 L984.9 598 L985.1 604 L985.2 610 L985.3 616 L985.4 622 L985.4 628 L985.4 634 L985.4 640 L985.3 646 L985.2 652 L984.9 658 L984.7 664 L984.4 670 L984.1 676 L983.9 682 L983.6 688 L983.4 694 L983.3 700 L983.1 706 L983 712 L982.9 718 L982.7 724 L982.5 730 L982.3 736 L982.2 742 L982.1 748 L982 752M986.5 70 L986.5 76 L986.4 82 L986.3 88 L986.1 94 L985.7 100 L985.2 106 L984.5 112 L983.7 118 L983 124 L982.3 130 L981.7 136 L981.2 142 L980.8 148 L980.7 154 L980.7 160 L980.8 166 L981.1 172 L981.6 178 L982.1 184 L982.7 190 L983.4 196 L984.2 202 L985 208 L985.9 214 L986.7 220 L987.6 226 L988.4 232 L989.3 238 L990.1 244 L990.8 250 L991.4 256 L992 262 L992.5 268 L992.9 274 L993.3 280 L993.5 286 L993.6 292 L993.5 298 L993.3 304 L992.9 310 L992.4 316 L991.8 322 L991.2 328 L990.6 334 L990.1 340 L989.7 346 L989.4 352 L989.2 358 L989.1 364 L989.2 370 L989.4 376 L989.6 382 L990 388 L990.4 394 L990.9 400 L991.4 406 L992 412 L992.5 418 L993.1 424 L993.7 430 L994.3 436 L994.8 442 L995.2 448 L995.5 454 L995.8 460 L995.9 466 L996 472 L995.9 478 L995.8 484 L995.5 490 L995.2 496 L994.9 502 L994.5 508 L994.1 514 L993.6 520 L992.9 526 L992.3 532 L991.8 538 L991.4 544 L991.1 550 L991.1 556 L991.3 562 L991.5 568 L991.9 574 L992.2 580 L992.6 586 L993 592 L993.3 598 L993.7 604 L993.9 610 L994.2 616 L994.3 622 L994.5 628 L994.6 634 L994.7 640 L994.7 646 L994.7 652 L994.5 658 L994.3 664 L994.1 670 L993.9 676 L993.7 682 L993.5 688 L993.3 694 L993.1 700 L993 706 L992.8 712 L992.7 718 L992.5 724 L992.2 730 L992 736 L991.7 742 L991.6 748 L991.4 752M987 70 L987.1 76 L987.1 82 L987.1 88 L987 94 L986.7 100 L986.3 106 L985.7 112 L985 118 L984.4 124 L983.8 130 L983.4 136 L983 142 L982.8 148 L982.8 154 L983 160 L983.3 166 L983.7 172 L984.3 178 L985 184 L985.7 190 L986.5 196 L987.4 202 L988.4 208 L989.3 214 L990.2 220 L991.1 226 L992.1 232 L993 238 L993.8 244 L994.5 250 L995.1 256 L995.7 262 L996.2 268 L996.6 274 L996.9 280 L997.1 286 L997.1 292 L997 298 L996.7 304 L996.2 310 L995.6 316 L995 322 L994.3 328 L993.7 334 L993.1 340 L992.6 346 L992.2 352 L992 358 L991.8 364 L991.9 370 L992 376 L992.2 382 L992.5 388 L992.9 394 L993.3 400 L993.8 406 L994.4 412 L994.9 418 L995.5 424 L996.1 430 L996.7 436 L997.2 442 L997.6 448 L998 454 L998.2 460 L998.4 466 L998.5 472 L998.5 478 L998.4 484 L998.2 490 L997.9 496 L997.6 502 L997.3 508 L996.9 514 L996.5 520 L995.8 526 L995.3 532 L994.8 538 L994.4 544 L994.2 550 L994.3 556 L994.5 562 L994.8 568 L995.1 574 L995.5 580 L995.9 586 L996.2 592 L996.6 598 L996.9 604 L997.2 610 L997.4 616 L997.5 622 L997.6 628 L997.7 634 L997.8 640 L997.8 646 L997.7 652 L997.5 658 L997.3 664 L997 670 L996.7 676 L996.5 682 L996.2 688 L996 694 L995.8 700 L995.6 706 L995.5 712 L995.3 718 L995 724 L994.8 730 L994.5 736 L994.3 742 L994.1 748 L994 752M993.4 70 L993.3 76 L993.2 82 L993.1 88 L992.8 94 L992.4 100 L991.9 106 L991.3 112 L990.6 118 L989.8 124 L989.3 130 L989 136 L988.8 142 L988.9 148 L989.2 154 L989.8 160 L990.5 166 L991.4 172 L992.5 178 L993.7 184 L994.9 190 L996.2 196 L997.6 202 L999.1 208 L1000.5 214 L1001.9 220 L1003.3 226 L1004.7 232 L1006 238 L1007.2 244 L1008.4 250 L1009.4 256 L1010.2 262 L1011 268 L1011.7 274 L1012.3 280 L1012.8 286 L1013 292 L1013 298 L1012.9 304 L1012.5 310 L1012 316 L1011.4 322 L1010.8 328 L1010.3 334 L1009.7 340 L1009.2 346 L1008.8 352 L1008.5 358 L1008.3 364 L1008.2 370 L1008.1 376 L1008.2 382 L1008.3 388 L1008.5 394 L1008.8 400 L1009.1 406 L1009.4 412 L1009.7 418 L1010.1 424 L1010.4 430 L1010.7 436 L1011 442 L1011.3 448 L1011.4 454 L1011.5 460 L1011.5 466 L1011.5 472 L1011.3 478 L1011.1 484 L1010.8 490 L1010.4 496 L1010 502 L1009.6 508 L1009.2 514 L1008.7 520 L1008.1 526 L1007.5 532 L1007.2 538 L1007 544 L1007 550 L1007.3 556 L1007.7 562 L1008.2 568 L1008.6 574 L1009.1 580 L1009.6 586 L1010.1 592 L1010.6 598 L1011 604 L1011.4 610 L1011.7 616 L1012 622 L1012.3 628 L1012.5 634 L1012.7 640 L1012.8 646 L1012.8 652 L1012.8 658 L1012.6 664 L1012.5 670 L1012.3 676 L1012.1 682 L1011.9 688 L1011.8 694 L1011.6 700 L1011.5 706 L1011.3 712 L1011.2 718 L1011 724 L1010.7 730 L1010.5 736 L1010.2 742 L1010 748 L1009.9 752M993.6 70 L993.6 76 L993.5 82 L993.4 88 L993.2 94 L992.8 100 L992.4 106 L991.8 112 L991 118 L990.4 124 L989.9 130 L989.5 136 L989.4 142 L989.4 148 L989.8 154 L990.3 160 L991 166 L991.9 172 L993 178 L994.1 184 L995.3 190 L996.5 196 L997.8 202 L999.2 208 L1000.6 214 L1001.9 220 L1003.2 226 L1004.4 232 L1005.6 238 L1006.8 244 L1007.8 250 L1008.7 256 L1009.5 262 L1010.1 268 L1010.7 274 L1011.2 280 L1011.6 286 L1011.8 292 L1011.7 298 L1011.5 304 L1011.1 310 L1010.6 316 L1010 322 L1009.4 328 L1008.8 334 L1008.3 340 L1007.8 346 L1007.4 352 L1007.2 358 L1007 364 L1007 370 L1007.1 376 L1007.2 382 L1007.5 388 L1007.8 394 L1008.1 400 L1008.6 406 L1009 412 L1009.5 418 L1009.9 424 L1010.4 430 L1010.9 436 L1011.2 442 L1011.6 448 L1011.9 454 L1012.1 460 L1012.2 466 L1012.2 472 L1012.1 478 L1012 484 L1011.7 490 L1011.4 496 L1011.1 502 L1010.7 508 L1010.3 514 L1009.8 520 L1009.1 526 L1008.6 532 L1008.2 538 L1008 544 L1008 550 L1008.2 556 L1008.6 562 L1009 568 L1009.4 574 L1009.8 580 L1010.2 586 L1010.6 592 L1011 598 L1011.4 604 L1011.7 610 L1012 616 L1012.3 622 L1012.4 628 L1012.6 634 L1012.8 640 L1012.8 646 L1012.8 652 L1012.8 658 L1012.6 664 L1012.5 670 L1012.3 676 L1012.1 682 L1012 688 L1011.8 694 L1011.7 700 L1011.6 706 L1011.5 712 L1011.3 718 L1011.2 724 L1011 730 L1010.7 736 L1010.5 742 L1010.3 748 L1010.2 752M995.7 70 L995.7 76 L995.7 82 L995.6 88 L995.5 94 L995.2 100 L994.8 106 L994.3 112 L993.7 118 L993.1 124 L992.7 130 L992.5 136 L992.6 142 L992.9 148 L993.5 154 L994.3 160 L995.3 166 L996.5 172 L997.8 178 L999.2 184 L1000.7 190 L1002.2 196 L1003.8 202 L1005.4 208 L1007 214 L1008.6 220 L1010.1 226 L1011.5 232 L1012.9 238 L1014.2 244 L1015.4 250 L1016.4 256 L1017.3 262 L1018 268 L1018.7 274 L1019.3 280 L1019.7 286 L1020 292 L1019.9 298 L1019.7 304 L1019.3 310 L1018.8 316 L1018.2 322 L1017.5 328 L1016.9 334 L1016.3 340 L1015.9 346 L1015.5 352 L1015.1 358 L1014.9 364 L1014.8 370 L1014.8 376 L1014.9 382 L1015 388 L1015.3 394 L1015.5 400 L1015.9 406 L1016.2 412 L1016.6 418 L1017 424 L1017.3 430 L1017.7 436 L1018 442 L1018.2 448 L1018.4 454 L1018.5 460 L1018.5 466 L1018.5 472 L1018.4 478 L1018.1 484 L1017.8 490 L1017.5 496 L1017.1 502 L1016.6 508 L1016.1 514 L1015.6 520 L1014.9 526 L1014.3 532 L1014 538 L1013.8 544 L1013.8 550 L1014.2 556 L1014.6 562 L1015 568 L1015.4 574 L1015.8 580 L1016.2 586 L1016.7 592 L1017.1 598 L1017.5 604 L1017.8 610 L1018.2 616 L1018.4 622 L1018.7 628 L1018.9 634 L1019.1 640 L1019.2 646 L1019.2 652 L1019.2 658 L1019.1 664 L1019 670 L1018.9 676 L1018.8 682 L1018.7 688 L1018.6 694 L1018.6 700 L1018.5 706 L1018.5 712 L1018.4 718 L1018.3 724 L1018.1 730 L1018 736 L1017.8 742 L1017.7 748 L1017.6 752M998.8 70 L998.8 76 L998.8 82 L998.8 88 L998.6 94 L998.4 100 L998 106 L997.5 112 L996.9 118 L996.4 124 L996.1 130 L996 136 L996.2 142 L996.6 148 L997.4 154 L998.4 160 L999.5 166 L1000.9 172 L1002.4 178 L1004 184 L1005.7 190 L1007.4 196 L1009.2 202 L1011 208 L1012.8 214 L1014.5 220 L1016.1 226 L1017.7 232 L1019.2 238 L1020.6 244 L1021.9 250 L1023 256 L1024 262 L1024.9 268 L1025.6 274 L1026.2 280 L1026.8 286 L1027.1 292 L1027.1 298 L1026.9 304 L1026.6 310 L1026 316 L1025.4 322 L1024.9 328 L1024.3 334 L1023.7 340 L1023.3 346 L1022.9 352 L1022.6 358 L1022.4 364 L1022.3 370 L1022.2 376 L1022.3 382 L1022.4 388 L1022.6 394 L1022.9 400 L1023.1 406 L1023.4 412 L1023.8 418 L1024.1 424 L1024.4 430 L1024.7 436 L1024.9 442 L1025.1 448 L1025.2 454 L1025.3 460 L1025.3 466 L1025.2 472 L1025 478 L1024.7 484 L1024.4 490 L1023.9 496 L1023.5 502 L1023 508 L1022.4 514 L1021.8 520 L1021.1 526 L1020.5 532 L1020.2 538 L1020.1 544 L1020.1 550 L1020.6 556 L1021 562 L1021.4 568 L1021.9 574 L1022.3 580 L1022.7 586 L1023.2 592 L1023.6 598 L1024 604 L1024.4 610 L1024.8 616 L1025.1 622 L1025.4 628 L1025.7 634 L1025.9 640 L1026.1 646 L1026.2 652 L1026.3 658 L1026.3 664 L1026.2 670 L1026.2 676 L1026.1 682 L1026.1 688 L1026.1 694 L1026.1 700 L1026.1 706 L1026.1 712 L1026.1 718 L1026 724 L1025.9 730 L1025.8 736 L1025.6 742 L1025.5 748 L1025.4 752M1001.7 70 L1001.7 76 L1001.7 82 L1001.6 88 L1001.5 94 L1001.3 100 L1000.9 106 L1000.5 112 L1000 118 L999.6 124 L999.4 130 L999.6 136 L1000 142 L1000.7 148 L1001.8 154 L1003.1 160 L1004.7 166 L1006.4 172 L1008.3 178 L1010.3 184 L1012.3 190 L1014.3 196 L1016.4 202 L1018.6 208 L1020.6 214 L1022.6 220 L1024.4 226 L1026.2 232 L1028 238 L1029.5 244 L1030.9 250 L1032.1 256 L1033.2 262 L1034.1 268 L1034.9 274 L1035.6 280 L1036.1 286 L1036.4 292 L1036.4 298 L1036.2 304 L1035.8 310 L1035.2 316 L1034.6 322 L1034 328 L1033.4 334 L1032.8 340 L1032.3 346 L1031.8 352 L1031.5 358 L1031.2 364 L1031 370 L1030.9 376 L1030.9 382 L1030.9 388 L1031.1 394 L1031.3 400 L1031.5 406 L1031.7 412 L1032 418 L1032.3 424 L1032.5 430 L1032.7 436 L1032.9 442 L1033.1 448 L1033.1 454 L1033.2 460 L1033.1 466 L1033 472 L1032.8 478 L1032.6 484 L1032.2 490 L1031.8 496 L1031.3 502 L1030.8 508 L1030.3 514 L1029.7 520 L1029 526 L1028.5 532 L1028.2 538 L1028.2 544 L1028.4 550 L1029 556 L1029.5 562 L1030.1 568 L1030.6 574 L1031 580 L1031.5 586 L1032 592 L1032.5 598 L1033 604 L1033.4 610 L1033.8 616 L1034.1 622 L1034.4 628 L1034.7 634 L1035 640 L1035.2 646 L1035.3 652 L1035.4 658 L1035.4 664 L1035.3 670 L1035.2 676 L1035.2 682 L1035.1 688 L1035.1 694 L1035 700 L1035 706 L1035 712 L1034.9 718 L1034.8 724 L1034.7 730 L1034.5 736 L1034.4 742 L1034.3 748 L1034.2 752M1001.2 70 L1001.2 76 L1001.1 82 L1001.1 88 L1001 94 L1000.8 100 L1000.5 106 L1000.2 112 L999.8 118 L999.5 124 L999.4 130 L999.7 136 L1000.2 142 L1001.1 148 L1002.4 154 L1003.8 160 L1005.5 166 L1007.4 172 L1009.4 178 L1011.5 184 L1013.5 190 L1015.7 196 L1017.8 202 L1019.9 208 L1022 214 L1023.9 220 L1025.7 226 L1027.5 232 L1029.1 238 L1030.6 244 L1031.8 250 L1033 256 L1033.9 262 L1034.7 268 L1035.4 274 L1035.9 280 L1036.4 286 L1036.6 292 L1036.5 298 L1036.2 304 L1035.8 310 L1035.2 316 L1034.6 322 L1033.9 328 L1033.4 334 L1032.8 340 L1032.4 346 L1032 352 L1031.7 358 L1031.6 364 L1031.5 370 L1031.5 376 L1031.6 382 L1031.8 388 L1032.1 394 L1032.4 400 L1032.7 406 L1033 412 L1033.4 418 L1033.7 424 L1034 430 L1034.2 436 L1034.4 442 L1034.5 448 L1034.5 454 L1034.5 460 L1034.4 466 L1034.2 472 L1033.9 478 L1033.5 484 L1033 490 L1032.4 496 L1031.8 502 L1031.2 508 L1030.5 514 L1029.8 520 L1029 526 L1028.5 532 L1028.1 538 L1028.1 544 L1028.3 550 L1028.9 556 L1029.4 562 L1030 568 L1030.5 574 L1031.1 580 L1031.7 586 L1032.3 592 L1032.9 598 L1033.4 604 L1034 610 L1034.5 616 L1035 622 L1035.4 628 L1035.8 634 L1036.2 640 L1036.5 646 L1036.7 652 L1036.8 658 L1036.8 664 L1036.8 670 L1036.7 676 L1036.7 682 L1036.6 688 L1036.5 694 L1036.4 700 L1036.2 706 L1036.1 712 L1035.9 718 L1035.7 724 L1035.5 730 L1035.2 736 L1034.9 742 L1034.7 748 L1034.5 752M1007 70 L1007 76 L1006.9 82 L1006.8 88 L1006.6 94 L1006.4 100 L1006 106 L1005.5 112 L1004.9 118 L1004.4 124 L1004.2 130 L1004.3 136 L1004.7 142 L1005.5 148 L1006.9 154 L1008.4 160 L1010.1 166 L1012.1 172 L1014.3 178 L1016.5 184 L1018.8 190 L1021.2 196 L1023.6 202 L1026.1 208 L1028.5 214 L1030.8 220 L1033 226 L1035.2 232 L1037.2 238 L1039.1 244 L1040.9 250 L1042.4 256 L1043.8 262 L1045 268 L1046 274 L1047 280 L1047.7 286 L1048.2 292 L1048.4 298 L1048.3 304 L1048 310 L1047.5 316 L1046.9 322 L1046.3 328 L1045.6 334 L1045 340 L1044.4 346 L1043.9 352 L1043.3 358 L1042.9 364 L1042.5 370 L1042.2 376 L1042 382 L1041.8 388 L1041.7 394 L1041.6 400 L1041.6 406 L1041.6 412 L1041.7 418 L1041.7 424 L1041.8 430 L1041.8 436 L1041.8 442 L1041.8 448 L1041.8 454 L1041.8 460 L1041.8 466 L1041.7 472 L1041.5 478 L1041.3 484 L1041 490 L1040.7 496 L1040.3 502 L1039.9 508 L1039.5 514 L1039 520 L1038.5 526 L1038.2 532 L1038.2 538 L1038.4 544 L1038.9 550 L1039.7 556 L1040.5 562 L1041.2 568 L1041.8 574 L1042.3 580 L1042.9 586 L1043.4 592 L1043.9 598 L1044.4 604 L1044.8 610 L1045.1 616 L1045.4 622 L1045.6 628 L1045.8 634 L1046 640 L1046.1 646 L1046.1 652 L1046.1 658 L1045.9 664 L1045.8 670 L1045.6 676 L1045.5 682 L1045.4 688 L1045.3 694 L1045.2 700 L1045.1 706 L1045.1 712 L1045 718 L1044.9 724 L1044.8 730 L1044.7 736 L1044.7 742 L1044.6 748 L1044.6 752M1006.5 70 L1006.6 76 L1006.7 82 L1006.8 88 L1006.7 94 L1006.6 100 L1006.4 106 L1006 112 L1005.6 118 L1005.2 124 L1005.2 130 L1005.4 136 L1006 142 L1007 148 L1008.4 154 L1010 160 L1011.8 166 L1013.8 172 L1016 178 L1018.3 184 L1020.6 190 L1022.9 196 L1025.3 202 L1027.7 208 L1030.1 214 L1032.3 220 L1034.4 226 L1036.5 232 L1038.4 238 L1040.2 244 L1041.9 250 L1043.3 256 L1044.6 262 L1045.8 268 L1046.8 274 L1047.6 280 L1048.4 286 L1048.8 292 L1049 298 L1048.9 304 L1048.6 310 L1048.1 316 L1047.6 322 L1047 328 L1046.5 334 L1045.9 340 L1045.4 346 L1044.9 352 L1044.5 358 L1044.1 364 L1043.8 370 L1043.6 376 L1043.4 382 L1043.3 388 L1043.2 394 L1043.2 400 L1043.2 406 L1043.3 412 L1043.3 418 L1043.4 424 L1043.5 430 L1043.5 436 L1043.5 442 L1043.5 448 L1043.4 454 L1043.4 460 L1043.3 466 L1043.2 472 L1042.9 478 L1042.7 484 L1042.4 490 L1042 496 L1041.6 502 L1041.1 508 L1040.7 514 L1040.1 520 L1039.6 526 L1039.2 532 L1039.2 538 L1039.4 544 L1039.9 550 L1040.7 556 L1041.4 562 L1042.1 568 L1042.7 574 L1043.3 580 L1043.8 586 L1044.3 592 L1044.8 598 L1045.3 604 L1045.7 610 L1046 616 L1046.3 622 L1046.6 628 L1046.8 634 L1047 640 L1047.1 646 L1047.2 652 L1047.2 658 L1047.1 664 L1047 670 L1046.9 676 L1046.8 682 L1046.7 688 L1046.6 694 L1046.6 700 L1046.6 706 L1046.6 712 L1046.6 718 L1046.5 724 L1046.5 730 L1046.5 736 L1046.4 742 L1046.4 748 L1046.4 752M1008.2 70 L1008.1 76 L1007.9 82 L1007.8 88 L1007.6 94 L1007.3 100 L1007 106 L1006.6 112 L1006.1 118 L1005.7 124 L1005.6 130 L1006 136 L1006.7 142 L1007.8 148 L1009.5 154 L1011.4 160 L1013.5 166 L1015.8 172 L1018.4 178 L1021 184 L1023.7 190 L1026.4 196 L1029.1 202 L1031.9 208 L1034.6 214 L1037.2 220 L1039.6 226 L1041.9 232 L1044.2 238 L1046.2 244 L1048 250 L1049.7 256 L1051.1 262 L1052.3 268 L1053.4 274 L1054.3 280 L1055.1 286 L1055.5 292 L1055.6 298 L1055.5 304 L1055.1 310 L1054.5 316 L1053.8 322 L1053.2 328 L1052.5 334 L1051.8 340 L1051.1 346 L1050.5 352 L1050 358 L1049.4 364 L1049 370 L1048.7 376 L1048.4 382 L1048.2 388 L1048 394 L1048 400 L1047.9 406 L1047.9 412 L1047.9 418 L1047.9 424 L1047.9 430 L1047.9 436 L1047.8 442 L1047.8 448 L1047.7 454 L1047.7 460 L1047.6 466 L1047.4 472 L1047.2 478 L1046.9 484 L1046.5 490 L1046.1 496 L1045.7 502 L1045.2 508 L1044.7 514 L1044.2 520 L1043.6 526 L1043.3 532 L1043.2 538 L1043.5 544 L1044.1 550 L1045 556 L1045.8 562 L1046.5 568 L1047.2 574 L1047.9 580 L1048.5 586 L1049.1 592 L1049.7 598 L1050.3 604 L1050.8 610 L1051.3 616 L1051.8 622 L1052.2 628 L1052.6 634 L1052.9 640 L1053.2 646 L1053.4 652 L1053.5 658 L1053.5 664 L1053.5 670 L1053.5 676 L1053.5 682 L1053.4 688 L1053.4 694 L1053.3 700 L1053.3 706 L1053.2 712 L1053.2 718 L1053 724 L1052.9 730 L1052.7 736 L1052.5 742 L1052.3 748 L1052.1 752M1010.4 70 L1010.4 76 L1010.4 82 L1010.3 88 L1010.2 94 L1010.1 100 L1009.8 106 L1009.5 112 L1009.1 118 L1008.7 124 L1008.8 130 L1009.2 136 L1010.1 142 L1011.3 148 L1013 154 L1015 160 L1017.2 166 L1019.7 172 L1022.3 178 L1025 184 L1027.7 190 L1030.5 196 L1033.3 202 L1036.1 208 L1038.7 214 L1041.3 220 L1043.8 226 L1046.1 232 L1048.3 238 L1050.3 244 L1052 250 L1053.6 256 L1055 262 L1056.2 268 L1057.2 274 L1058.1 280 L1058.8 286 L1059.2 292 L1059.3 298 L1059.1 304 L1058.8 310 L1058.2 316 L1057.5 322 L1056.8 328 L1056.2 334 L1055.5 340 L1054.9 346 L1054.4 352 L1053.9 358 L1053.4 364 L1053.1 370 L1052.8 376 L1052.6 382 L1052.5 388 L1052.4 394 L1052.4 400 L1052.5 406 L1052.5 412 L1052.6 418 L1052.7 424 L1052.8 430 L1052.9 436 L1052.9 442 L1052.9 448 L1052.9 454 L1052.9 460 L1052.8 466 L1052.7 472 L1052.5 478 L1052.2 484 L1051.9 490 L1051.5 496 L1051 502 L1050.5 508 L1049.9 514 L1049.3 520 L1048.6 526 L1048.3 532 L1048.2 538 L1048.4 544 L1049 550 L1049.8 556 L1050.5 562 L1051.2 568 L1051.8 574 L1052.3 580 L1052.8 586 L1053.3 592 L1053.8 598 L1054.3 604 L1054.8 610 L1055.2 616 L1055.5 622 L1055.9 628 L1056.2 634 L1056.5 640 L1056.8 646 L1057 652 L1057.1 658 L1057.1 664 L1057.1 670 L1057.1 676 L1057.2 682 L1057.2 688 L1057.2 694 L1057.3 700 L1057.3 706 L1057.4 712 L1057.4 718 L1057.4 724 L1057.3 730 L1057.3 736 L1057.2 742 L1057.1 748 L1057.1 752M1011.5 70 L1011.5 76 L1011.4 82 L1011.3 88 L1011.1 94 L1010.8 100 L1010.5 106 L1010.1 112 L1009.6 118 L1009.1 124 L1009.1 130 L1009.4 136 L1010.1 142 L1011.3 148 L1012.9 154 L1014.8 160 L1016.9 166 L1019.3 172 L1021.9 178 L1024.5 184 L1027.2 190 L1029.9 196 L1032.6 202 L1035.3 208 L1038 214 L1040.5 220 L1043 226 L1045.3 232 L1047.5 238 L1049.5 244 L1051.3 250 L1052.9 256 L1054.3 262 L1055.5 268 L1056.6 274 L1057.5 280 L1058.3 286 L1058.8 292 L1059 298 L1058.9 304 L1058.6 310 L1058.1 316 L1057.6 322 L1057 328 L1056.4 334 L1055.9 340 L1055.4 346 L1055 352 L1054.6 358 L1054.2 364 L1054 370 L1053.8 376 L1053.7 382 L1053.7 388 L1053.7 394 L1053.8 400 L1053.9 406 L1054 412 L1054.2 418 L1054.3 424 L1054.4 430 L1054.5 436 L1054.5 442 L1054.5 448 L1054.5 454 L1054.5 460 L1054.4 466 L1054.2 472 L1054 478 L1053.7 484 L1053.3 490 L1052.8 496 L1052.2 502 L1051.6 508 L1051 514 L1050.3 520 L1049.5 526 L1049 532 L1048.8 538 L1048.9 544 L1049.4 550 L1050.1 556 L1050.7 562 L1051.3 568 L1051.8 574 L1052.2 580 L1052.6 586 L1053 592 L1053.4 598 L1053.8 604 L1054.2 610 L1054.5 616 L1054.8 622 L1055.1 628 L1055.4 634 L1055.7 640 L1055.9 646 L1056.1 652 L1056.2 658 L1056.3 664 L1056.3 670 L1056.3 676 L1056.4 682 L1056.5 688 L1056.6 694 L1056.7 700 L1056.8 706 L1056.9 712 L1057 718 L1057.1 724 L1057.2 730 L1057.2 736 L1057.2 742 L1057.3 748 L1057.3 752M1013.5 70 L1013.5 76 L1013.5 82 L1013.5 88 L1013.4 94 L1013.3 100 L1013 106 L1012.7 112 L1012.4 118 L1012.1 124 L1012.2 130 L1012.8 136 L1013.7 142 L1015.1 148 L1017.1 154 L1019.4 160 L1021.8 166 L1024.5 172 L1027.5 178 L1030.4 184 L1033.4 190 L1036.4 196 L1039.5 202 L1042.5 208 L1045.5 214 L1048.2 220 L1050.9 226 L1053.4 232 L1055.8 238 L1058 244 L1059.9 250 L1061.7 256 L1063.2 262 L1064.5 268 L1065.6 274 L1066.6 280 L1067.4 286 L1067.9 292 L1068 298 L1067.8 304 L1067.5 310 L1066.9 316 L1066.2 322 L1065.5 328 L1064.8 334 L1064.1 340 L1063.5 346 L1062.9 352 L1062.4 358 L1061.9 364 L1061.4 370 L1061.1 376 L1060.8 382 L1060.6 388 L1060.5 394 L1060.4 400 L1060.3 406 L1060.3 412 L1060.4 418 L1060.4 424 L1060.4 430 L1060.3 436 L1060.3 442 L1060.3 448 L1060.2 454 L1060.2 460 L1060.1 466 L1060 472 L1059.7 478 L1059.5 484 L1059.1 490 L1058.7 496 L1058.2 502 L1057.7 508 L1057.2 514 L1056.6 520 L1055.9 526 L1055.6 532 L1055.5 538 L1055.9 544 L1056.5 550 L1057.4 556 L1058.3 562 L1059 568 L1059.6 574 L1060.1 580 L1060.6 586 L1061.1 592 L1061.7 598 L1062.1 604 L1062.6 610 L1063 616 L1063.4 622 L1063.8 628 L1064.1 634 L1064.4 640 L1064.7 646 L1064.9 652 L1065 658 L1065.1 664 L1065.2 670 L1065.2 676 L1065.3 682 L1065.3 688 L1065.4 694 L1065.5 700 L1065.6 706 L1065.7 712 L1065.7 718 L1065.8 724 L1065.8 730 L1065.7 736 L1065.7 742 L1065.7 748 L1065.7 752M1014.8 70 L1014.7 76 L1014.6 82 L1014.5 88 L1014.3 94 L1014.1 100 L1013.8 106 L1013.4 112 L1013 118 L1012.6 124 L1012.7 130 L1013.2 136 L1014.2 142 L1015.6 148 L1017.6 154 L1019.9 160 L1022.4 166 L1025.1 172 L1028.1 178 L1031.1 184 L1034.2 190 L1037.2 196 L1040.4 202 L1043.5 208 L1046.5 214 L1049.4 220 L1052.1 226 L1054.7 232 L1057.1 238 L1059.4 244 L1061.4 250 L1063.2 256 L1064.8 262 L1066.2 268 L1067.4 274 L1068.4 280 L1069.3 286 L1069.9 292 L1070.1 298 L1070 304 L1069.7 310 L1069.2 316 L1068.6 322 L1068 328 L1067.4 334 L1066.8 340 L1066.3 346 L1065.7 352 L1065.3 358 L1064.8 364 L1064.4 370 L1064.1 376 L1063.9 382 L1063.7 388 L1063.6 394 L1063.5 400 L1063.5 406 L1063.5 412 L1063.5 418 L1063.5 424 L1063.4 430 L1063.4 436 L1063.3 442 L1063.2 448 L1063 454 L1062.9 460 L1062.7 466 L1062.5 472 L1062.2 478 L1061.8 484 L1061.4 490 L1060.8 496 L1060.3 502 L1059.6 508 L1059 514 L1058.3 520 L1057.5 526 L1057.1 532 L1057 538 L1057.2 544 L1057.8 550 L1058.7 556 L1059.5 562 L1060.2 568 L1060.8 574 L1061.3 580 L1061.8 586 L1062.3 592 L1062.8 598 L1063.3 604 L1063.8 610 L1064.2 616 L1064.7 622 L1065.1 628 L1065.5 634 L1065.9 640 L1066.2 646 L1066.5 652 L1066.7 658 L1066.9 664 L1067 670 L1067.1 676 L1067.3 682 L1067.4 688 L1067.6 694 L1067.7 700 L1067.9 706 L1068.1 712 L1068.2 718 L1068.3 724 L1068.4 730 L1068.5 736 L1068.5 742 L1068.5 748 L1068.5 752M1015.6 70 L1015.6 76 L1015.5 82 L1015.5 88 L1015.3 94 L1015.2 100 L1014.9 106 L1014.6 112 L1014.2 118 L1013.9 124 L1014.1 130 L1014.7 136 L1015.8 142 L1017.3 148 L1019.4 154 L1021.8 160 L1024.4 166 L1027.2 172 L1030.3 178 L1033.5 184 L1036.6 190 L1039.8 196 L1043 202 L1046.2 208 L1049.3 214 L1052.3 220 L1055.1 226 L1057.7 232 L1060.2 238 L1062.5 244 L1064.5 250 L1066.4 256 L1068 262 L1069.3 268 L1070.5 274 L1071.6 280 L1072.4 286 L1073 292 L1073.1 298 L1073 304 L1072.7 310 L1072.1 316 L1071.4 322 L1070.8 328 L1070.1 334 L1069.5 340 L1068.8 346 L1068.3 352 L1067.7 358 L1067.2 364 L1066.7 370 L1066.3 376 L1066 382 L1065.8 388 L1065.6 394 L1065.5 400 L1065.4 406 L1065.3 412 L1065.3 418 L1065.2 424 L1065.2 430 L1065.1 436 L1064.9 442 L1064.8 448 L1064.7 454 L1064.6 460 L1064.4 466 L1064.2 472 L1064 478 L1063.6 484 L1063.2 490 L1062.8 496 L1062.2 502 L1061.7 508 L1061.1 514 L1060.5 520 L1059.8 526 L1059.5 532 L1059.5 538 L1059.9 544 L1060.6 550 L1061.6 556 L1062.5 562 L1063.3 568 L1064 574 L1064.5 580 L1065.1 586 L1065.7 592 L1066.3 598 L1066.9 604 L1067.4 610 L1067.9 616 L1068.4 622 L1068.8 628 L1069.2 634 L1069.6 640 L1069.9 646 L1070.2 652 L1070.4 658 L1070.5 664 L1070.6 670 L1070.7 676 L1070.7 682 L1070.8 688 L1070.9 694 L1071 700 L1071 706 L1071.1 712 L1071.1 718 L1071.1 724 L1071.1 730 L1071 736 L1070.9 742 L1070.9 748 L1070.8 752M1019 70 L1019 76 L1019 82 L1019 88 L1019 94 L1018.9 100 L1018.7 106 L1018.5 112 L1018.2 118 L1018.1 124 L1018.3 130 L1019.1 136 L1020.4 142 L1022.1 148 L1024.5 154 L1027.2 160 L1030.1 166 L1033.2 172 L1036.6 178 L1040 184 L1043.4 190 L1046.8 196 L1050.3 202 L1053.7 208 L1057 214 L1060.1 220 L1063 226 L1065.8 232 L1068.4 238 L1070.8 244 L1072.9 250 L1074.8 256 L1076.4 262 L1077.8 268 L1079 274 L1080.1 280 L1080.9 286 L1081.4 292 L1081.5 298 L1081.4 304 L1081 310 L1080.4 316 L1079.7 322 L1079 328 L1078.3 334 L1077.6 340 L1077 346 L1076.3 352 L1075.8 358 L1075.2 364 L1074.7 370 L1074.3 376 L1074 382 L1073.8 388 L1073.6 394 L1073.5 400 L1073.4 406 L1073.3 412 L1073.3 418 L1073.3 424 L1073.2 430 L1073.1 436 L1073 442 L1073 448 L1072.9 454 L1072.8 460 L1072.7 466 L1072.6 472 L1072.3 478 L1072.1 484 L1071.7 490 L1071.3 496 L1070.8 502 L1070.2 508 L1069.6 514 L1069 520 L1068.3 526 L1068 532 L1068.1 538 L1068.5 544 L1069.4 550 L1070.4 556 L1071.4 562 L1072.2 568 L1072.8 574 L1073.4 580 L1073.9 586 L1074.4 592 L1074.9 598 L1075.4 604 L1075.9 610 L1076.3 616 L1076.8 622 L1077.1 628 L1077.5 634 L1077.9 640 L1078.1 646 L1078.4 652 L1078.5 658 L1078.6 664 L1078.7 670 L1078.7 676 L1078.8 682 L1078.9 688 L1078.9 694 L1079 700 L1079.1 706 L1079.2 712 L1079.3 718 L1079.3 724 L1079.4 730 L1079.3 736 L1079.3 742 L1079.3 748 L1079.3 752M1018.6 70 L1018.5 76 L1018.4 82 L1018.2 88 L1018 94 L1017.8 100 L1017.5 106 L1017.2 112 L1016.8 118 L1016.6 124 L1016.8 130 L1017.5 136 L1018.7 142 L1020.5 148 L1022.9 154 L1025.5 160 L1028.5 166 L1031.7 172 L1035.2 178 L1038.6 184 L1042.2 190 L1045.7 196 L1049.3 202 L1052.9 208 L1056.3 214 L1059.6 220 L1062.7 226 L1065.6 232 L1068.4 238 L1070.9 244 L1073.2 250 L1075.2 256 L1077 262 L1078.5 268 L1079.8 274 L1080.9 280 L1081.8 286 L1082.4 292 L1082.6 298 L1082.4 304 L1082 310 L1081.4 316 L1080.7 322 L1079.9 328 L1079.1 334 L1078.3 340 L1077.6 346 L1076.9 352 L1076.1 358 L1075.4 364 L1074.8 370 L1074.3 376 L1073.8 382 L1073.4 388 L1073 394 L1072.8 400 L1072.5 406 L1072.4 412 L1072.2 418 L1072 424 L1071.9 430 L1071.7 436 L1071.5 442 L1071.4 448 L1071.3 454 L1071.2 460 L1071.1 466 L1071 472 L1070.8 478 L1070.5 484 L1070.2 490 L1069.9 496 L1069.5 502 L1069 508 L1068.6 514 L1068 520 L1067.5 526 L1067.3 532 L1067.5 538 L1068.1 544 L1069 550 L1070.2 556 L1071.3 562 L1072.2 568 L1072.9 574 L1073.5 580 L1074.2 586 L1074.7 592 L1075.3 598 L1075.9 604 L1076.4 610 L1076.8 616 L1077.2 622 L1077.6 628 L1077.9 634 L1078.2 640 L1078.4 646 L1078.6 652 L1078.7 658 L1078.7 664 L1078.6 670 L1078.6 676 L1078.6 682 L1078.5 688 L1078.5 694 L1078.5 700 L1078.5 706 L1078.5 712 L1078.5 718 L1078.5 724 L1078.5 730 L1078.4 736 L1078.3 742 L1078.3 748 L1078.3 752M1020.1 70 L1020 76 L1019.9 82 L1019.9 88 L1019.7 94 L1019.6 100 L1019.4 106 L1019.1 112 L1018.8 118 L1018.6 124 L1018.9 130 L1019.7 136 L1021.1 142 L1022.9 148 L1025.5 154 L1028.3 160 L1031.4 166 L1034.7 172 L1038.3 178 L1041.9 184 L1045.6 190 L1049.2 196 L1052.9 202 L1056.6 208 L1060.1 214 L1063.4 220 L1066.6 226 L1069.6 232 L1072.4 238 L1075 244 L1077.3 250 L1079.3 256 L1081.1 262 L1082.7 268 L1084 274 L1085.2 280 L1086.2 286 L1086.8 292 L1087 298 L1086.9 304 L1086.6 310 L1086 316 L1085.4 322 L1084.7 328 L1084 334 L1083.3 340 L1082.7 346 L1082 352 L1081.4 358 L1080.8 364 L1080.2 370 L1079.7 376 L1079.3 382 L1078.9 388 L1078.6 394 L1078.4 400 L1078.2 406 L1078 412 L1077.8 418 L1077.6 424 L1077.4 430 L1077.2 436 L1076.9 442 L1076.7 448 L1076.5 454 L1076.2 460 L1076 466 L1075.8 472 L1075.4 478 L1075 484 L1074.6 490 L1074.1 496 L1073.5 502 L1072.9 508 L1072.3 514 L1071.6 520 L1070.9 526 L1070.6 532 L1070.7 538 L1071.2 544 L1072.1 550 L1073.2 556 L1074.2 562 L1075.1 568 L1075.8 574 L1076.5 580 L1077.1 586 L1077.7 592 L1078.3 598 L1079 604 L1079.5 610 L1080.1 616 L1080.7 622 L1081.2 628 L1081.7 634 L1082.2 640 L1082.6 646 L1082.9 652 L1083.2 658 L1083.5 664 L1083.6 670 L1083.8 676 L1084 682 L1084.2 688 L1084.4 694 L1084.5 700 L1084.7 706 L1084.9 712 L1085 718 L1085.1 724 L1085.1 730 L1085.1 736 L1085.1 742 L1085 748 L1085 752M1021.8 70 L1021.8 76 L1021.7 82 L1021.7 88 L1021.7 94 L1021.6 100 L1021.5 106 L1021.3 112 L1021.1 118 L1020.9 124 L1021.3 130 L1022.2 136 L1023.7 142 L1025.6 148 L1028.3 154 L1031.2 160 L1034.4 166 L1037.8 172 L1041.5 178 L1045.3 184 L1049 190 L1052.7 196 L1056.4 202 L1060.2 208 L1063.7 214 L1067.1 220 L1070.3 226 L1073.3 232 L1076.1 238 L1078.7 244 L1081 250 L1083 256 L1084.8 262 L1086.3 268 L1087.6 274 L1088.7 280 L1089.7 286 L1090.3 292 L1090.4 298 L1090.3 304 L1089.9 310 L1089.3 316 L1088.6 322 L1087.9 328 L1087.2 334 L1086.5 340 L1085.8 346 L1085.1 352 L1084.5 358 L1083.8 364 L1083.3 370 L1082.8 376 L1082.4 382 L1082.1 388 L1081.8 394 L1081.6 400 L1081.4 406 L1081.2 412 L1081.1 418 L1081 424 L1080.8 430 L1080.6 436 L1080.4 442 L1080.2 448 L1080.1 454 L1079.9 460 L1079.8 466 L1079.6 472 L1079.3 478 L1079 484 L1078.6 490 L1078.1 496 L1077.6 502 L1077 508 L1076.4 514 L1075.7 520 L1075.1 526 L1074.8 532 L1074.9 538 L1075.5 544 L1076.4 550 L1077.6 556 L1078.6 562 L1079.5 568 L1080.2 574 L1080.8 580 L1081.4 586 L1082 592 L1082.5 598 L1083.1 604 L1083.6 610 L1084.1 616 L1084.6 622 L1085.1 628 L1085.5 634 L1085.9 640 L1086.3 646 L1086.5 652 L1086.8 658 L1086.9 664 L1087.1 670 L1087.2 676 L1087.3 682 L1087.4 688 L1087.6 694 L1087.7 700 L1087.9 706 L1088 712 L1088.1 718 L1088.2 724 L1088.2 730 L1088.2 736 L1088.2 742 L1088.2 748 L1088.2 752M1022.1 70 L1022.1 76 L1022.1 82 L1022.1 88 L1022 94 L1021.9 100 L1021.8 106 L1021.6 112 L1021.4 118 L1021.3 124 L1021.7 130 L1022.7 136 L1024.1 142 L1026.2 148 L1028.9 154 L1031.9 160 L1035.1 166 L1038.6 172 L1042.4 178 L1046.2 184 L1050 190 L1053.8 196 L1057.6 202 L1061.4 208 L1065 214 L1068.5 220 L1071.7 226 L1074.8 232 L1077.7 238 L1080.3 244 L1082.6 250 L1084.7 256 L1086.5 262 L1088.1 268 L1089.4 274 L1090.6 280 L1091.6 286 L1092.2 292 L1092.3 298 L1092.2 304 L1091.9 310 L1091.2 316 L1090.5 322 L1089.8 328 L1089.1 334 L1088.4 340 L1087.7 346 L1087.1 352 L1086.4 358 L1085.8 364 L1085.2 370 L1084.7 376 L1084.2 382 L1083.9 388 L1083.6 394 L1083.3 400 L1083.1 406 L1082.9 412 L1082.8 418 L1082.6 424 L1082.4 430 L1082.2 436 L1081.9 442 L1081.7 448 L1081.5 454 L1081.3 460 L1081.2 466 L1080.9 472 L1080.6 478 L1080.3 484 L1079.9 490 L1079.4 496 L1078.8 502 L1078.2 508 L1077.6 514 L1076.9 520 L1076.2 526 L1076 532 L1076.1 538 L1076.6 544 L1077.6 550 L1078.8 556 L1079.9 562 L1080.7 568 L1081.5 574 L1082.1 580 L1082.6 586 L1083.2 592 L1083.8 598 L1084.4 604 L1085 610 L1085.5 616 L1086 622 L1086.5 628 L1086.9 634 L1087.4 640 L1087.8 646 L1088.1 652 L1088.3 658 L1088.5 664 L1088.7 670 L1088.8 676 L1089 682 L1089.2 688 L1089.3 694 L1089.5 700 L1089.6 706 L1089.8 712 L1089.9 718 L1090 724 L1090.1 730 L1090.1 736 L1090.1 742 L1090.1 748 L1090.1 752M1022.9 70 L1022.9 76 L1022.9 82 L1022.8 88 L1022.8 94 L1022.7 100 L1022.6 106 L1022.4 112 L1022.2 118 L1022.1 124 L1022.5 130 L1023.5 136 L1025 142 L1027 148 L1029.8 154 L1032.8 160 L1036 166 L1039.6 172 L1043.4 178 L1047.2 184 L1051 190 L1054.8 196 L1058.6 202 L1062.5 208 L1066.1 214 L1069.6 220 L1072.8 226 L1075.9 232 L1078.8 238 L1081.4 244 L1083.7 250 L1085.8 256 L1087.6 262 L1089.2 268 L1090.5 274 L1091.7 280 L1092.6 286 L1093.2 292 L1093.4 298 L1093.2 304 L1092.9 310 L1092.3 316 L1091.5 322 L1090.8 328 L1090.1 334 L1089.4 340 L1088.7 346 L1088 352 L1087.4 358 L1086.7 364 L1086.2 370 L1085.7 376 L1085.2 382 L1084.9 388 L1084.6 394 L1084.4 400 L1084.2 406 L1084 412 L1083.8 418 L1083.7 424 L1083.5 430 L1083.3 436 L1083.1 442 L1082.9 448 L1082.7 454 L1082.5 460 L1082.4 466 L1082.2 472 L1081.9 478 L1081.6 484 L1081.2 490 L1080.7 496 L1080.2 502 L1079.6 508 L1079 514 L1078.3 520 L1077.6 526 L1077.3 532 L1077.5 538 L1078.1 544 L1079.1 550 L1080.3 556 L1081.3 562 L1082.2 568 L1082.9 574 L1083.5 580 L1084.1 586 L1084.7 592 L1085.3 598 L1085.9 604 L1086.4 610 L1086.9 616 L1087.4 622 L1087.9 628 L1088.3 634 L1088.7 640 L1089.1 646 L1089.4 652 L1089.6 658 L1089.8 664 L1089.9 670 L1090.1 676 L1090.2 682 L1090.3 688 L1090.5 694 L1090.6 700 L1090.8 706 L1090.9 712 L1091 718 L1091.1 724 L1091.2 730 L1091.2 736 L1091.2 742 L1091.2 748 L1091.2 752M1023.9 70 L1023.9 76 L1023.9 82 L1023.9 88 L1023.9 94 L1023.8 100 L1023.7 106 L1023.5 112 L1023.4 118 L1023.3 124 L1023.7 130 L1024.7 136 L1026.2 142 L1028.3 148 L1031.2 154 L1034.2 160 L1037.6 166 L1041.2 172 L1045.1 178 L1049 184 L1052.9 190 L1056.8 196 L1060.7 202 L1064.6 208 L1068.3 214 L1071.8 220 L1075.1 226 L1078.2 232 L1081.1 238 L1083.8 244 L1086.2 250 L1088.3 256 L1090.1 262 L1091.7 268 L1093 274 L1094.2 280 L1095.2 286 L1095.8 292 L1095.9 298 L1095.8 304 L1095.4 310 L1094.8 316 L1094.1 322 L1093.3 328 L1092.6 334 L1091.9 340 L1091.2 346 L1090.5 352 L1089.8 358 L1089.2 364 L1088.6 370 L1088 376 L1087.6 382 L1087.2 388 L1086.9 394 L1086.6 400 L1086.4 406 L1086.2 412 L1086.1 418 L1085.9 424 L1085.7 430 L1085.4 436 L1085.2 442 L1085 448 L1084.8 454 L1084.6 460 L1084.5 466 L1084.3 472 L1084 478 L1083.7 484 L1083.3 490 L1082.8 496 L1082.3 502 L1081.7 508 L1081.1 514 L1080.4 520 L1079.7 526 L1079.5 532 L1079.7 538 L1080.3 544 L1081.3 550 L1082.6 556 L1083.7 562 L1084.6 568 L1085.3 574 L1085.9 580 L1086.5 586 L1087.1 592 L1087.7 598 L1088.3 604 L1088.9 610 L1089.4 616 L1089.9 622 L1090.4 628 L1090.8 634 L1091.3 640 L1091.6 646 L1092 652 L1092.2 658 L1092.4 664 L1092.5 670 L1092.7 676 L1092.8 682 L1093 688 L1093.1 694 L1093.3 700 L1093.4 706 L1093.6 712 L1093.7 718 L1093.8 724 L1093.9 730 L1093.9 736 L1093.9 742 L1093.9 748 L1093.9 752M1024.3 70 L1024.3 76 L1024.3 82 L1024.3 88 L1024.3 94 L1024.2 100 L1024.1 106 L1024 112 L1023.8 118 L1023.7 124 L1024.2 130 L1025.2 136 L1026.8 142 L1028.9 148 L1031.8 154 L1035 160 L1038.4 166 L1042.1 172 L1046 178 L1050 184 L1053.9 190 L1057.9 196 L1061.8 202 L1065.8 208 L1069.5 214 L1073.1 220 L1076.5 226 L1079.6 232 L1082.6 238 L1085.3 244 L1087.7 250 L1089.9 256 L1091.7 262 L1093.3 268 L1094.7 274 L1095.9 280 L1096.9 286 L1097.5 292 L1097.6 298 L1097.5 304 L1097.2 310 L1096.5 316 L1095.8 322 L1095.1 328 L1094.4 334 L1093.6 340 L1092.9 346 L1092.2 352 L1091.6 358 L1090.9 364 L1090.3 370 L1089.8 376 L1089.3 382 L1088.9 388 L1088.6 394 L1088.3 400 L1088.1 406 L1087.9 412 L1087.7 418 L1087.5 424 L1087.3 430 L1087 436 L1086.8 442 L1086.5 448 L1086.3 454 L1086.2 460 L1086 466 L1085.8 472 L1085.5 478 L1085.1 484 L1084.7 490 L1084.3 496 L1083.7 502 L1083.1 508 L1082.5 514 L1081.8 520 L1081.2 526 L1080.9 532 L1081.1 538 L1081.7 544 L1082.8 550 L1084 556 L1085.1 562 L1086 568 L1086.8 574 L1087.4 580 L1088 586 L1088.6 592 L1089.2 598 L1089.8 604 L1090.3 610 L1090.9 616 L1091.4 622 L1091.8 628 L1092.3 634 L1092.8 640 L1093.1 646 L1093.5 652 L1093.7 658 L1093.9 664 L1094 670 L1094.2 676 L1094.4 682 L1094.5 688 L1094.7 694 L1094.8 700 L1095 706 L1095.1 712 L1095.3 718 L1095.4 724 L1095.4 730 L1095.5 736 L1095.4 742 L1095.4 748 L1095.4 752M1025 70 L1025 76 L1025 82 L1025 88 L1025 94 L1024.9 100 L1024.8 106 L1024.7 112 L1024.5 118 L1024.4 124 L1024.9 130 L1025.9 136 L1027.6 142 L1029.7 148 L1032.6 154 L1035.8 160 L1039.3 166 L1043 172 L1047 178 L1051 184 L1055 190 L1059 196 L1063 202 L1067 208 L1070.8 214 L1074.4 220 L1077.8 226 L1081 232 L1084 238 L1086.7 244 L1089.2 250 L1091.3 256 L1093.2 262 L1094.8 268 L1096.2 274 L1097.4 280 L1098.4 286 L1099 292 L1099.2 298 L1099.1 304 L1098.7 310 L1098.1 316 L1097.4 322 L1096.7 328 L1095.9 334 L1095.2 340 L1094.5 346 L1093.8 352 L1093.1 358 L1092.5 364 L1091.8 370 L1091.3 376 L1090.8 382 L1090.4 388 L1090.1 394 L1089.8 400 L1089.6 406 L1089.4 412 L1089.2 418 L1089 424 L1088.7 430 L1088.5 436 L1088.2 442 L1088 448 L1087.8 454 L1087.6 460 L1087.4 466 L1087.2 472 L1086.9 478 L1086.6 484 L1086.2 490 L1085.7 496 L1085.2 502 L1084.6 508 L1084 514 L1083.3 520 L1082.6 526 L1082.3 532 L1082.5 538 L1083.2 544 L1084.2 550 L1085.5 556 L1086.6 562 L1087.6 568 L1088.3 574 L1088.9 580 L1089.5 586 L1090.1 592 L1090.7 598 L1091.3 604 L1091.8 610 L1092.4 616 L1092.9 622 L1093.4 628 L1093.8 634 L1094.3 640 L1094.6 646 L1095 652 L1095.2 658 L1095.4 664 L1095.6 670 L1095.7 676 L1095.9 682 L1096 688 L1096.2 694 L1096.4 700 L1096.5 706 L1096.7 712 L1096.8 718 L1096.9 724 L1097 730 L1097 736 L1097 742 L1097 748 L1097 752"/>
<path d="M956.7 225 L964 230 L971.6 235 L979.5 240 L987.5 245 L995.6 250 L1003.7 255 L1011.8 260 L1019.8 265 L1027.6 270 L1035.2 275 L1042.6 280 L1049.6 285 L1056.2 290 L1062.3 295 L1067.8 300 L1072.8 305 L1077.2 310 L1081 315 L1084.2 320 L1087 325 L1089.3 330 L1091.1 335 L1092.5 340 L1093.3 345 L1093.6 350 L1093.4 355 L1092.8 360 L1091.6 365 L1090 370 L1088 375 L1085.5 380 L1082.7 385 L1079.5 390 L1075.9 395 L1071.9 400 L1067.7 405 L1063.1 410 L1058.2 415 L1053 420 L1047.6 425 L1041.9 430M1065.2 225 L1071.1 230 L1076.5 235 L1081.2 240 L1085.2 245 L1088.5 250 L1090.9 255 L1092.5 260 L1093.2 265 L1093 270 L1092.1 275 L1090.3 280 L1087.6 285 L1084.1 290 L1079.6 295 L1074.3 300 L1068.3 305 L1061.5 310 L1054.1 315 L1046.2 320 L1037.8 325 L1029.1 330 L1020 335 L1010.7 340 L1001.2 345 L991.7 350 L982.1 355 L972.6 360 L963.2 365 L954 370 L945 375 L936.3 380 L927.8 385 L919.7 390 L912 395 L904.7 400 L897.9 405 L891.5 410 L885.6 415 L880.2 420 L875.4 425 L871.1 430M1066.6 225 L1065.2 230 L1062.8 235 L1059.6 240 L1055.6 245 L1050.6 250 L1044.9 255 L1038.4 260 L1031.2 265 L1023.5 270 L1015.1 275 L1006.3 280 L997.1 285 L987.5 290 L977.5 295 L967.4 300 L957.1 305 L946.8 310 L936.5 315 L926.4 320 L916.5 325 L906.8 330 L897.5 335 L888.7 340 L880.4 345 L872.8 350 L865.8 355 L859.7 360 L854.3 365 L849.7 370 L845.9 375 L842.8 380 L840.5 385 L839 390 L838.3 395 L838.4 400 L839.1 405 L840.6 410 L842.8 415 L845.7 420 L849.3 425 L853.5 430M1028.1 225 L1023.3 230 L1017.8 235 L1011.9 240 L1005.3 245 L998.3 250 L990.9 255 L983.1 260 L975 265 L966.6 270 L958.1 275 L949.5 280 L940.8 285 L932.1 290 L923.4 295 L914.8 300 L906.4 305 L898.2 310 L890.3 315 L882.6 320 L875.4 325 L868.5 330 L862.1 335 L856.2 340 L850.9 345 L846.4 350 L842.5 355 L839.3 360 L836.9 365 L835.2 370 L834.2 375 L833.9 380 L834.1 385 L835.1 390 L836.6 395 L838.7 400 L841.3 405 L844.5 410 L848.2 415 L852.4 420 L857.1 425 L862.3 430M892.2 225 L885.6 230 L879.2 235 L873 240 L867 245 L861.4 250 L856.2 255 L851.4 260 L847 265 L843.2 270 L839.7 275 L836.7 280 L834.3 285 L832.4 290 L831 295 L830.2 300 L829.9 305 L830 310 L830.7 315 L831.8 320 L833.4 325 L835.5 330 L838 335 L841 340 L844.5 345 L848.7 350 L853.4 355 L858.6 360 L864.3 365 L870.4 370 L876.8 375 L883.6 380 L890.6 385 L897.9 390 L905.3 395 L913 400 L920.7 405 L928.5 410 L936.4 415 L944.3 420 L952.2 425 L960.1 430M853.2 225 L849.4 230 L846.1 235 L843.2 240 L840.8 245 L838.8 250 L837.3 255 L836.3 260 L835.8 265 L835.8 270 L836.2 275 L837 280 L838.3 285 L839.9 290 L842.1 295 L844.6 300 L847.4 305 L850.6 310 L854 315 L857.8 320 L861.8 325 L866 330 L870.5 335 L875.3 340 L880.4 345 L885.9 350 L891.7 355 L897.8 360 L904.1 365 L910.6 370 L917.3 375 L924 380 L930.9 385 L937.9 390 L944.8 395 L951.8 400 L958.8 405 L965.7 410 L972.6 415 L979.3 420 L986 425 L992.5 430M864.1 225 L865.9 230 L868.3 235 L871.4 240 L875.1 245 L879.4 250 L884.3 255 L889.7 260 L895.6 265 L901.9 270 L908.6 275 L915.6 280 L922.8 285 L930.3 290 L938 295 L945.7 300 L953.4 305 L961.2 310 L968.8 315 L976.4 320 L983.9 325 L991.3 330 L998.7 335 L1005.8 340 L1012.9 345 L1019.8 350 L1026.5 355 L1033 360 L1039.2 365 L1045.2 370 L1050.8 375 L1056.1 380 L1061 385 L1065.6 390 L1069.8 395 L1073.6 400 L1077 405 L1079.9 410 L1082.5 415 L1084.5 420 L1086.2 425 L1087.3 430M964.8 225 L958.8 230 L952.6 235 L946.3 240 L939.8 245 L933.2 250 L926.5 255 L919.9 260 L913.2 265 L906.6 270 L900.2 275 L893.8 280 L887.6 285 L881.6 290 L875.8 295 L870.2 300 L864.9 305 L859.9 310 L855.2 315 L850.8 320 L846.7 325 L843 330 L839.6 335 L836.7 340 L834.3 345 L832.4 350 L831.2 355 L830.4 360 L830.3 365 L830.7 370 L831.5 375 L832.8 380 L834.6 385 L836.7 390 L839.3 395 L842.2 400 L845.5 405 L849.1 410 L853 415 L857.2 420 L861.7 425 L866.5 430M1061.1 225 L1060 230 L1058.3 235 L1056.1 240 L1053.3 245 L1049.9 250 L1046 255 L1041.5 260 L1036.6 265 L1031.3 270 L1025.6 275 L1019.5 280 L1013.1 285 L1006.3 290 L999.2 295 L991.8 300 L984.2 305 L976.5 310 L968.6 315 L960.7 320 L952.8 325 L945 330 L937.3 335 L929.7 340 L922.3 345 L915.2 350 L908.5 355 L902.1 360 L896 365 L890.4 370 L885.2 375 L880.3 380 L875.8 385 L871.7 390 L868 395 L864.7 400 L861.7 405 L859.2 410 L857 415 L855.3 420 L853.9 425 L853 430M1076.1 225 L1079.6 230 L1082.5 235 L1084.8 240 L1086.3 245 L1087.2 250 L1087.3 255 L1086.7 260 L1085.3 265 L1083.3 270 L1080.6 275 L1077.2 280 L1073.2 285 L1068.5 290 L1063 295 L1057 300 L1050.4 305 L1043.3 310 L1035.7 315 L1027.8 320 L1019.6 325 L1011.3 330 L1002.7 335 L994.1 340 L985.4 345 L976.7 350 L968.1 355 L959.7 360 L951.4 365 L943.4 370 L935.6 375 L928.1 380 L920.9 385 L914 390 L907.4 395 L901.2 400 L895.4 405 L889.9 410 L884.9 415 L880.3 420 L876.1 425 L872.4 430M1030.6 225 L1037 230 L1043.4 235 L1049.6 240 L1055.6 245 L1061.3 250 L1066.7 255 L1071.8 260 L1076.5 265 L1080.8 270 L1084.7 275 L1088.3 280 L1091.4 285 L1094 290 L1095.9 295 L1097.3 300 L1098.1 305 L1098.4 310 L1098.2 315 L1097.5 320 L1096.5 325 L1095.1 330 L1093.4 335 L1091.3 340 L1088.9 345 L1086.2 350 L1083.2 355 L1079.9 360 L1076.4 365 L1072.6 370 L1068.7 375 L1064.5 380 L1060.2 385 L1055.7 390 L1051.1 395 L1046.3 400 L1041.5 405 L1036.4 410 L1031.3 415 L1026.1 420 L1020.9 425 L1015.5 430M904.4 225 L908.7 230 L913.6 235 L918.9 240 L924.6 245 L930.6 250 L936.9 255 L943.5 260 L950.3 265 L957.3 270 L964.3 275 L971.5 280 L978.7 285 L985.8 290 L992.8 295 L999.6 300 L1006.3 305 L1012.7 310 L1018.9 315 L1024.8 320 L1030.6 325 L1036.1 330 L1041.4 335 L1046.5 340 L1051.4 345 L1056 350 L1060.4 355 L1064.5 360 L1068.3 365 L1071.8 370 L1074.9 375 L1077.8 380 L1080.4 385 L1082.6 390 L1084.6 395 L1086.1 400 L1087.4 405 L1088.3 410 L1088.8 415 L1089 420 L1088.9 425 L1088.4 430M857.6 225 L858.4 230 L860 235 L862.2 240 L865.1 245 L868.6 250 L872.7 255 L877.4 260 L882.7 265 L888.4 270 L894.6 275 L901.1 280 L908 285 L915.2 290 L922.5 295 L930.1 300 L937.7 305 L945.4 310 L953.1 315 L960.8 320 L968.5 325 L976.2 330 L983.7 335 L991.2 340 L998.7 345 L1006.1 350 L1013.3 355 L1020.3 360 L1027.1 365 L1033.7 370 L1039.9 375 L1045.9 380 L1051.6 385 L1056.9 390 L1061.8 395 L1066.4 400 L1070.6 405 L1074.3 410 L1077.6 415 L1080.5 420 L1082.9 425 L1084.8 430M884.8 225 L878.6 230 L872.5 235 L866.8 240 L861.4 245 L856.3 250 L851.6 255 L847.3 260 L843.5 265 L840.2 270 L837.3 275 L834.8 280 L832.9 285 L831.5 290 L830.6 295 L830.2 300 L830.3 305 L830.9 310 L831.9 315 L833.4 320 L835.3 325 L837.6 330 L840.3 335 L843.4 340 L847.1 345 L851.4 350 L856.2 355 L861.4 360 L867 365 L873.1 370 L879.5 375 L886.2 380 L893.1 385 L900.2 390 L907.5 395 L915 400 L922.5 405 L930.1 410 L937.8 415 L945.5 420 L953.1 425 L960.8 430M933.5 540 L940 545 L946.8 550 L954.1 555 L961.8 560 L969.7 565 L977.8 570 L985.9 575 L994.1 580 L1002.2 585 L1010.2 590 L1018 595 L1025.5 600 L1032.9 605 L1040 610 L1046.7 615 L1053.2 620 L1059.3 625 L1065 630 L1070.3 635 L1075.2 640 L1079.6 645 L1083.5 650 L1086.9 655 L1089.7 660 L1092 665 L1093.8 670 L1095 675 L1095.7 680 L1095.9 685 L1095.5 690 L1094.5 695 L1093 700 L1091 705 L1088.3 710 L1085.2 715 L1081.5 720 L1077.2 725 L1072.5 730 L1067.2 735 L1061.4 740 L1055.3 745 L1048.7 750M1082.7 540 L1083.2 545 L1083.4 550 L1083.1 555 L1082 560 L1080.2 565 L1077.6 570 L1074.3 575 L1070.4 580 L1065.9 585 L1060.8 590 L1055.2 595 L1049.1 600 L1042.6 605 L1035.6 610 L1028.1 615 L1020.3 620 L1012.1 625 L1003.6 630 L994.9 635 L985.9 640 L976.7 645 L967.4 650 L958 655 L948.5 660 L939 665 L929.6 670 L920.3 675 L911.2 680 L902.3 685 L893.8 690 L885.6 695 L877.8 700 L870.5 705 L863.6 710 L857.2 715 L851.3 720 L845.9 725 L841.2 730 L837 735 L833.5 740 L830.8 745 L828.9 750M1054.5 540 L1049.3 545 L1043.6 550 L1037.7 555 L1031.3 560 L1024.4 565 L1017.2 570 L1009.6 575 L1001.7 580 L993.7 585 L985.4 590 L977.1 595 L968.6 600 L960.1 605 L951.5 610 L942.9 615 L934.3 620 L925.8 625 L917.4 630 L909.2 635 L901.3 640 L893.5 645 L886 650 L878.8 655 L871.9 660 L865.4 665 L859.4 670 L853.8 675 L848.8 680 L844.4 685 L840.5 690 L837.3 695 L834.7 700 L832.8 705 L831.5 710 L830.9 715 L830.9 720 L831.5 725 L832.8 730 L834.7 735 L837.2 740 L840.6 745 L844.5 750M883.8 540 L877.8 545 L871.9 550 L866.5 555 L861.8 560 L857.5 565 L853.9 570 L850.8 575 L848.3 580 L846.2 585 L844.4 590 L843 595 L841.9 600 L841.2 605 L840.8 610 L840.7 615 L841 620 L841.6 625 L842.5 630 L843.9 635 L845.5 640 L847.6 645 L849.9 650 L852.6 655 L855.6 660 L858.9 665 L862.5 670 L866.5 675 L870.8 680 L875.5 685 L880.5 690 L885.8 695 L891.4 700 L897.3 705 L903.5 710 L909.8 715 L916.3 720 L923 725 L929.8 730 L936.8 735 L943.8 740 L951 745 L958.3 750M849.5 540 L848.5 545 L847.9 550 L848.6 555 L850.3 560 L853 565 L856.6 570 L861.2 575 L866.7 580 L872.7 585 L879.3 590 L886.4 595 L893.9 600 L901.8 605 L910.1 610 L918.7 615 L927.6 620 L936.7 625 L946 630 L955.5 635 L965 640 L974.6 645 L984.1 650 L993.5 655 L1002.8 660 L1011.9 665 L1020.8 670 L1029.4 675 L1037.7 680 L1045.7 685 L1053.2 690 L1060.3 695 L1066.9 700 L1072.9 705 L1078.4 710 L1083.2 715 L1087.3 720 L1090.8 725 L1093.5 730 L1095.4 735 L1096.6 740 L1097 745 L1096.7 750M943.9 540 L935.2 545 L926.3 550 L917.8 555 L909.7 560 L901.8 565 L894.4 570 L887.5 575 L881.1 580 L875 585 L869.4 590 L864.2 595 L859.5 600 L855.2 605 L851.3 610 L848 615 L845.1 620 L842.7 625 L840.9 630 L839.7 635 L839.1 640 L838.9 645 L839.4 650 L840.4 655 L842 660 L844.1 665 L846.8 670 L850.2 675 L854.1 680 L858.6 685 L863.6 690 L869.2 695 L875.3 700 L881.9 705 L888.9 710 L896.3 715 L904.1 720 L912.1 725 L920.4 730 L929 735 L937.7 740 L946.7 745 L955.8 750M1077.6 540 L1075.3 545 L1072.5 550 L1069.2 555 L1065.1 560 L1060.4 565 L1054.9 570 L1048.9 575 L1042.2 580 L1035.1 585 L1027.6 590 L1019.7 595 L1011.5 600 L1002.9 605 L994.1 610 L985 615 L975.7 620 L966.3 625 L956.9 630 L947.4 635 L937.9 640 L928.5 645 L919.2 650 L910.1 655 L901.2 660 L892.5 665 L884.2 670 L876.4 675 L869 680 L862.1 685 L855.8 690 L850.1 695 L845 700 L840.7 705 L837 710 L834 715 L831.7 720 L830.2 725 L829.3 730 L829.3 735 L830 740 L831.6 745 L833.9 750M1046.3 540 L1052.6 545 L1058.8 550 L1064.8 555 L1070.3 560 L1075.2 565 L1079.5 570 L1083 575 L1085.9 580 L1088.1 585 L1089.6 590 L1090.4 595 L1090.5 600 L1090 605 L1088.7 610 L1086.8 615 L1084.1 620 L1080.8 625 L1076.9 630 L1072.2 635 L1067 640 L1061.1 645 L1054.6 650 L1047.6 655 L1040 660 L1032 665 L1023.5 670 L1014.6 675 L1005.4 680 L996 685 L986.3 690 L976.5 695 L966.6 700 L956.7 705 L946.7 710 L936.8 715 L927 720 L917.3 725 L907.8 730 L898.6 735 L889.7 740 L881.3 745 L873.3 750M868.7 540 L871 545 L873.6 550 L877 555 L881.1 560 L885.8 565 L891.1 570 L896.9 575 L903.1 580 L909.6 585 L916.3 590 L923.1 595 L930.2 600 L937.3 605 L944.6 610 L951.9 615 L959.2 620 L966.6 625 L974 630 L981.4 635 L988.7 640 L996 645 L1003.2 650 L1010.3 655 L1017.1 660 L1023.9 665 L1030.4 670 L1036.8 675 L1043 680 L1048.9 685 L1054.7 690 L1060.1 695 L1065.3 700 L1070.1 705 L1074.6 710 L1078.7 715 L1082.5 720 L1085.8 725 L1088.7 730 L1091.2 735 L1093.3 740 L1094.9 745 L1096 750M849.3 540 L847.6 545 L846 550 L845.2 555 L845.1 560 L845.7 565 L846.9 570 L848.8 575 L851.3 580 L854.1 585 L857.3 590 L860.7 595 L864.5 600 L868.5 605 L872.7 610 L877.2 615 L881.9 620 L886.8 625 L891.9 630 L897.3 635 L902.9 640 L908.6 645 L914.5 650 L920.5 655 L926.7 660 L932.9 665 L939.2 670 L945.7 675 L952.3 680 L959 685 L965.7 690 L972.5 695 L979.3 700 L986.1 705 L992.9 710 L999.6 715 L1006.3 720 L1012.8 725 L1019.2 730 L1025.5 735 L1031.5 740 L1037.5 745 L1043.2 750"/>
<path d="M853.6 352 L854 358 L854.6 364 L855.4 370 L856.4 376 L857.5 382 L858.7 388 L860 394 L861.4 400 L862.8 406 L864.3 412 L865.8 418 L867.4 424 L869.1 430 L870.7 436 L872.2 442 L873.5 448 L874.6 454 L875.4 460 L876 466 L876.5 472 L876.7 478 L876.8 484 L876.9 490 L876.8 496 L876.7 502 L876.6 508 L876.5 514 L876.2 520 L875.5 526 L874.4 532 L872.8 538 L870.9 544 L868.7 550 L867 556 L865.9 562 L865.1 568 L864.7 574 L864.7 580 L864.6 586 L864.6 592 L864.6 598 L864.5 604 L864.4 610 L864.2 616 L863.9 622 L863.6 628 L863.3 634 L863 640 L862.6 646 L862.2 652 L861.7 658 L861.1 664 L860.5 670 L859.9 676 L859.4 682 L858.9 688 L858.4 694 L857.9 700 L857.5 706 L857.1 712 L856.6 718 L856.1 724 L855.6 730 L855 736 L854.5 742 L854.1 748 L853.8 752M844.8 352 L845.2 358 L845.9 364 L846.9 370 L848 376 L849.1 382 L850.4 388 L851.8 394 L853.3 400 L854.7 406 L856.2 412 L857.8 418 L859.4 424 L861 430 L862.6 436 L864 442 L865.3 448 L866.3 454 L867 460 L867.5 466 L867.9 472 L868 478 L868.1 484 L868 490 L867.9 496 L867.7 502 L867.6 508 L867.5 514 L867.2 520 L866.6 526 L865.4 532 L863.9 538 L861.9 544 L859.8 550 L858.1 556 L857 562 L856.3 568 L856 574 L856.1 580 L856.2 586 L856.3 592 L856.3 598 L856.4 604 L856.3 610 L856.2 616 L856 622 L855.7 628 L855.4 634 L855.1 640 L854.7 646 L854.2 652 L853.7 658 L853 664 L852.3 670 L851.6 676 L851 682 L850.4 688 L849.8 694 L849.3 700 L848.8 706 L848.2 712 L847.7 718 L847.2 724 L846.6 730 L846 736 L845.4 742 L845.1 748 L844.8 752M841.6 352 L842.1 358 L842.9 364 L843.9 370 L845.1 376 L846.4 382 L847.8 388 L849.3 394 L850.8 400 L852.4 406 L853.9 412 L855.6 418 L857.2 424 L859 430 L860.6 436 L862.1 442 L863.4 448 L864.5 454 L865.2 460 L865.7 466 L866.1 472 L866.2 478 L866.3 484 L866.2 490 L866.1 496 L865.9 502 L865.7 508 L865.5 514 L865.3 520 L864.6 526 L863.3 532 L861.7 538 L859.7 544 L857.4 550 L855.7 556 L854.4 562 L853.7 568 L853.3 574 L853.3 580 L853.3 586 L853.4 592 L853.4 598 L853.3 604 L853.2 610 L853.1 616 L852.8 622 L852.5 628 L852.1 634 L851.8 640 L851.3 646 L850.8 652 L850.2 658 L849.5 664 L848.8 670 L848.1 676 L847.4 682 L846.8 688 L846.3 694 L845.7 700 L845.2 706 L844.7 712 L844.2 718 L843.7 724 L843.1 730 L842.6 736 L842 742 L841.7 748 L841.5 752M833.1 352 L833.7 358 L834.7 364 L835.9 370 L837.2 376 L838.7 382 L840.2 388 L841.9 394 L843.7 400 L845.4 406 L847.2 412 L849 418 L850.9 424 L852.8 430 L854.6 436 L856.2 442 L857.7 448 L858.8 454 L859.6 460 L860.2 466 L860.5 472 L860.6 478 L860.6 484 L860.5 490 L860.3 496 L860 502 L859.8 508 L859.5 514 L859.1 520 L858.3 526 L856.9 532 L855.1 538 L852.8 544 L850.3 550 L848.4 556 L847 562 L846.1 568 L845.6 574 L845.6 580 L845.6 586 L845.6 592 L845.6 598 L845.6 604 L845.5 610 L845.4 616 L845.2 622 L844.9 628 L844.7 634 L844.4 640 L844.1 646 L843.7 652 L843.2 658 L842.7 664 L842.1 670 L841.5 676 L840.9 682 L840.4 688 L839.8 694 L839.4 700 L838.9 706 L838.4 712 L837.9 718 L837.3 724 L836.7 730 L836 736 L835.4 742 L835 748 L834.6 752M1071.5 352 L1070.9 358 L1070.3 364 L1069.8 370 L1069.4 376 L1069 382 L1068.7 388 L1068.5 394 L1068.4 400 L1068.2 406 L1068.1 412 L1068.1 418 L1068 424 L1067.9 430 L1067.7 436 L1067.6 442 L1067.4 448 L1067.3 454 L1067.2 460 L1067 466 L1066.8 472 L1066.5 478 L1066.1 484 L1065.7 490 L1065.2 496 L1064.7 502 L1064.1 508 L1063.5 514 L1062.8 520 L1062.1 526 L1061.8 532 L1061.8 538 L1062.2 544 L1062.9 550 L1063.9 556 L1064.8 562 L1065.6 568 L1066.3 574 L1066.8 580 L1067.4 586 L1067.9 592 L1068.5 598 L1069.1 604 L1069.6 610 L1070.1 616 L1070.6 622 L1071 628 L1071.4 634 L1071.8 640 L1072.2 646 L1072.5 652 L1072.7 658 L1072.9 664 L1073 670 L1073.1 676 L1073.3 682 L1073.4 688 L1073.5 694 L1073.7 700 L1073.8 706 L1074 712 L1074.1 718 L1074.2 724 L1074.2 730 L1074.3 736 L1074.3 742 L1074.3 748 L1074.3 752M1075.8 352 L1075.4 358 L1075 364 L1074.7 370 L1074.4 376 L1074.2 382 L1074 388 L1073.9 394 L1073.8 400 L1073.7 406 L1073.6 412 L1073.5 418 L1073.3 424 L1073.1 430 L1072.9 436 L1072.6 442 L1072.3 448 L1072 454 L1071.7 460 L1071.4 466 L1071.1 472 L1070.6 478 L1070.1 484 L1069.6 490 L1069.1 496 L1068.4 502 L1067.8 508 L1067.2 514 L1066.5 520 L1065.9 526 L1065.6 532 L1065.8 538 L1066.4 544 L1067.3 550 L1068.5 556 L1069.7 562 L1070.6 568 L1071.5 574 L1072.3 580 L1073 586 L1073.7 592 L1074.4 598 L1075.1 604 L1075.7 610 L1076.3 616 L1076.8 622 L1077.2 628 L1077.6 634 L1078 640 L1078.2 646 L1078.4 652 L1078.4 658 L1078.4 664 L1078.4 670 L1078.3 676 L1078.2 682 L1078.1 688 L1078 694 L1077.9 700 L1077.9 706 L1077.9 712 L1077.8 718 L1077.8 724 L1077.7 730 L1077.7 736 L1077.6 742 L1077.6 748 L1077.6 752M1083.6 352 L1083 358 L1082.4 364 L1081.8 370 L1081.3 376 L1080.8 382 L1080.4 388 L1080.1 394 L1079.8 400 L1079.5 406 L1079.3 412 L1079 418 L1078.8 424 L1078.5 430 L1078.2 436 L1077.9 442 L1077.6 448 L1077.4 454 L1077.1 460 L1076.9 466 L1076.6 472 L1076.2 478 L1075.8 484 L1075.4 490 L1074.9 496 L1074.3 502 L1073.7 508 L1073.1 514 L1072.4 520 L1071.7 526 L1071.5 532 L1071.6 538 L1072.2 544 L1073.1 550 L1074.4 556 L1075.5 562 L1076.4 568 L1077.2 574 L1077.9 580 L1078.6 586 L1079.3 592 L1080 598 L1080.7 604 L1081.3 610 L1081.9 616 L1082.5 622 L1083.1 628 L1083.6 634 L1084.1 640 L1084.6 646 L1084.9 652 L1085.2 658 L1085.4 664 L1085.6 670 L1085.7 676 L1085.9 682 L1086 688 L1086.1 694 L1086.3 700 L1086.4 706 L1086.4 712 L1086.5 718 L1086.5 724 L1086.4 730 L1086.4 736 L1086.2 742 L1086.1 748 L1086 752M1090.2 352 L1089.6 358 L1089.1 364 L1088.6 370 L1088.1 376 L1087.7 382 L1087.3 388 L1087 394 L1086.7 400 L1086.3 406 L1086 412 L1085.7 418 L1085.4 424 L1085 430 L1084.6 436 L1084.2 442 L1083.8 448 L1083.4 454 L1083 460 L1082.7 466 L1082.3 472 L1081.9 478 L1081.5 484 L1081 490 L1080.4 496 L1079.9 502 L1079.3 508 L1078.7 514 L1078.1 520 L1077.5 526 L1077.3 532 L1077.6 538 L1078.4 544 L1079.5 550 L1081 556 L1082.2 562 L1083.3 568 L1084.3 574 L1085 580 L1085.8 586 L1086.6 592 L1087.3 598 L1088 604 L1088.7 610 L1089.3 616 L1089.8 622 L1090.3 628 L1090.7 634 L1091.1 640 L1091.4 646 L1091.6 652 L1091.7 658 L1091.8 664 L1091.7 670 L1091.7 676 L1091.6 682 L1091.6 688 L1091.5 694 L1091.5 700 L1091.4 706 L1091.4 712 L1091.4 718 L1091.3 724 L1091.2 730 L1091.2 736 L1091.1 742 L1091 748 L1091 752"/>
<path d="M989 95.4 L988.1 101.5 L986.8 110.3 L985.4 120.3 L984 130.5 L983 139.4 L982.3 146.9 L981.7 153.8 L981.2 160.5 L981 167.2 L981 174.4 L981.3 182.2 L981.8 190.3 L982.5 198.5 L983.3 206.6 L984 214.4 L984.7 221.6 L985.4 228.3 L986.1 234.9 L987 241.8 L988 249.4 L989.1 258 L990.3 267.4 L991.6 277 L993.2 286.2 L995 294.4 L997.1 301.4 L999.4 307.6M991 95.7 L990.1 101.8 L988.8 110.6 L987.4 120.6 L986 130.8 L985 139.7 L984.3 147.2 L983.7 154.1 L983.2 160.8 L983 167.5 L983 174.7 L983.3 182.5 L983.8 190.6 L984.5 198.8 L985.3 206.9 L986 214.7 L986.7 221.9 L987.4 228.6 L988.1 235.2 L989 242.1 L990 249.7 L991.1 258.3 L992.3 267.7 L993.6 277.3 L995.2 286.5 L997 294.7 L999.1 301.7 L1001.4 307.9 L1004 313.6 L1006.9 319.1 L1010 324.7 L1013.9 330.7M993 96 L992.1 102.1 L990.8 110.9 L989.4 120.9 L988 131.1 L987 140 L986.3 147.5 L985.7 154.4 L985.2 161.1 L985 167.8 L985 175 L985.3 182.8 L985.8 190.9 L986.5 199.1 L987.3 207.2 L988 215 L988.7 222.2 L989.4 228.9 L990.1 235.5 L991 242.4 L992 250 L993.1 258.6 L994.3 268 L995.6 277.6 L997.2 286.8 L999 295 L1001.1 302 L1003.4 308.2 L1006 313.9 L1008.9 319.4 L1012 325 L1015.9 331 L1020.5 337.3M995 96.3 L994.1 102.4 L992.8 111.2 L991.4 121.2 L990 131.4 L989 140.3 L988.3 147.8 L987.7 154.7 L987.2 161.4 L987 168.1 L987 175.3 L987.3 183.1 L987.8 191.2 L988.5 199.4 L989.3 207.5 L990 215.3 L990.7 222.5 L991.4 229.2 L992.1 235.8 L993 242.7 L994 250.3 L995.1 258.9 L996.3 268.3 L997.6 277.9 L999.2 287.1 L1001 295.3 L1003.1 302.3 L1005.4 308.5 L1008 314.2 L1010.9 319.7M997 96.6 L996.1 102.7 L994.8 111.5 L993.4 121.5 L992 131.7 L991 140.6 L990.3 148.1 L989.7 155 L989.2 161.7 L989 168.4 L989 175.6 L989.3 183.4 L989.8 191.5 L990.5 199.7 L991.3 207.8 L992 215.6 L992.7 222.8 L993.4 229.5 L994.1 236.1 L995 243 L996 250.6 L997.1 259.2 L998.3 268.6 L999.6 278.2 L1001.2 287.4 L1003 295.6M991 686 L1016 669.6M990.5 687.6 L1011.4 687.5M989.7 688.5 L1002.9 697.3M987.8 689 L984.1 702.9M986.6 688.6 L971.8 699M985.4 687.4 L959.6 685.6M985 685.9 L956 669.1M985.4 684.5 L959.8 654M986.4 683.4 L970.4 641.8M988.2 683 L987.8 637.1M989.7 683.6 L1003.4 643.1M990.7 684.7 L1012.8 655.2M850 560 L857.6 566.8 L868.5 576.4 L881.1 587.6 L893.8 599.2 L905 610 L915.1 620.2 L925.1 630.5 L934.6 640.7 L943 650.6 L950 660 L955.3 669.3 L959.3 678.6 L962.1 687.4 L964.3 694.7 L966 700M1084 560 L1078.6 566.9 L1071 576.6 L1062.2 588 L1053.2 599.5 L1045 610 L1037.6 619.2 L1030.2 628.1 L1023.1 636.9 L1016.3 645.8 L1010 655 L1004 665.5 L998.1 677 L992.7 688.4 L988.2 698.1 L985 705M856 570 L863.4 576.7 L874 586.2 L886.1 597.2 L898.3 608.5 L909 619 L918.4 628.7 L927.5 638.4 L936 648 L943.6 657.3 L950 666 L955.1 674.6 L959 683.3 L962 691.3 L964.2 698.1 L966 703M1078 570 L1072.9 576.8 L1065.6 586.4 L1057.1 597.6 L1048.6 608.9 L1041 619 L1034.3 627.8 L1027.9 636.1 L1021.7 644.2 L1015.7 652.4 L1010 661 L1004.2 670.8 L998.4 681.7 L992.9 692.3 L988.3 701.5 L985 708M862 580 L869.2 586.6 L879.4 595.9 L891.2 606.8 L902.9 617.9 L913 628 L921.6 637.2 L929.8 646.4 L937.4 655.3 L944.2 663.9 L950 672 L954.8 680 L958.7 688 L961.8 695.3 L964.2 701.5 L966 706M1072 580 L1067.1 586.7 L1060.1 596.2 L1052.1 607.1 L1044 618.2 L1037 628 L1031.1 636.3 L1025.5 644 L1020.3 651.5 L1015.1 659 L1010 667 L1004.5 676.2 L998.7 686.4 L993.1 696.3 L988.4 704.9 L985 711M868 590 L874.9 596.5 L884.8 605.7 L896.2 616.4 L907.4 627.2 L917 637 L924.9 645.7 L932.2 654.3 L938.8 662.6 L944.7 670.5 L950 678 L954.5 685.3 L958.4 692.6 L961.6 699.3 L964.1 704.9 L966 709M1066 590 L1061.4 596.6 L1054.7 605.9 L1047.1 616.7 L1039.5 627.6 L1033 637 L1027.8 644.8 L1023.2 652 L1018.9 658.8 L1014.6 665.7 L1010 673 L1004.7 681.5 L998.9 691 L993.3 700.3 L988.4 708.3 L985 714"/>
<ellipse cx="991.5" cy="676.2" rx="4.0" ry="5.0" transform="rotate(-8.0 991.5 676.2)"/>
<ellipse cx="989.3" cy="674.9" rx="8.0" ry="9.0" transform="rotate(-8.0 989.3 674.9)"/>
<ellipse cx="989.7" cy="673.5" rx="12.0" ry="13.0" transform="rotate(-8.0 989.7 673.5)"/>
<ellipse cx="988.0" cy="671.7" rx="16.0" ry="18.0" transform="rotate(-8.0 988.0 671.7)"/>
<ellipse cx="986.1" cy="670.0" rx="20.0" ry="23.0" transform="rotate(-8.0 986.1 670.0)"/>
<ellipse cx="985.5" cy="668.2" rx="25.0" ry="28.0" transform="rotate(-8.0 985.5 668.2)"/>
<ellipse cx="984.6" cy="666.5" rx="30.0" ry="33.0" transform="rotate(-8.0 984.6 666.5)"/>
<ellipse cx="966.8" cy="150.0" rx="64.4" ry="9.0"/>
<ellipse cx="965.0" cy="162.5" rx="72.7" ry="7.5"/>
<ellipse cx="964.0" cy="172.1" rx="79.6" ry="10.3"/>
<ellipse cx="963.3" cy="180.7" rx="86.0" ry="9.1"/>
<ellipse cx="962.7" cy="192.0" rx="94.1" ry="5.8"/>
<ellipse cx="962.5" cy="204.2" rx="102.5" ry="9.9"/>
<ellipse cx="962.6" cy="215.4" rx="109.6" ry="9.1"/>
<ellipse cx="962.9" cy="227.6" rx="116.2" ry="6.3"/>
<ellipse cx="963.4" cy="238.2" rx="121.2" ry="8.0"/>
<ellipse cx="964.0" cy="250.4" rx="125.9" ry="9.5"/>
<ellipse cx="964.4" cy="262.7" rx="129.5" ry="8.4"/>
<ellipse cx="964.8" cy="275.2" rx="132.2" ry="8.9"/>
<ellipse cx="965.0" cy="286.7" rx="134.0" ry="6.7"/>
<ellipse cx="964.8" cy="294.8" rx="134.8" ry="6.2"/>
<ellipse cx="964.4" cy="304.5" rx="135.1" ry="6.1"/>
<ellipse cx="963.5" cy="316.8" rx="135.0" ry="8.3"/>
<ellipse cx="962.5" cy="328.0" rx="134.7" ry="8.6"/>
<ellipse cx="961.5" cy="339.4" rx="134.3" ry="7.9"/>
<ellipse cx="961.1" cy="347.3" rx="133.8" ry="9.4"/>
<ellipse cx="960.8" cy="359.1" rx="132.6" ry="8.0"/>
<ellipse cx="961.2" cy="369.8" rx="131.2" ry="8.8"/>
<ellipse cx="961.7" cy="378.0" rx="130.0" ry="9.1"/>
<ellipse cx="962.4" cy="387.2" rx="128.6" ry="6.0"/>
<ellipse cx="963.4" cy="396.5" rx="127.1" ry="9.1"/>
<ellipse cx="964.4" cy="405.4" rx="125.7" ry="9.2"/>
<ellipse cx="966.0" cy="418.4" rx="123.6" ry="8.0"/>
<ellipse cx="967.3" cy="428.3" rx="122.0" ry="7.9"/>
<ellipse cx="968.7" cy="439.8" rx="120.1" ry="9.3"/>
<ellipse cx="969.8" cy="450.9" rx="118.6" ry="8.7"/>
<ellipse cx="970.3" cy="459.2" rx="117.9" ry="6.3"/>
<ellipse cx="970.6" cy="468.4" rx="117.3" ry="9.2"/>
<ellipse cx="970.6" cy="477.9" rx="116.9" ry="8.3"/>
<ellipse cx="970.4" cy="485.8" rx="116.6" ry="5.9"/>
<ellipse cx="970.0" cy="495.1" rx="116.3" ry="8.8"/>
<ellipse cx="969.3" cy="506.6" rx="115.9" ry="8.8"/>
<ellipse cx="968.7" cy="516.0" rx="115.5" ry="8.1"/>
<ellipse cx="967.7" cy="526.3" rx="115.3" ry="7.8"/>
<ellipse cx="966.7" cy="534.8" rx="116.3" ry="9.9"/>
<ellipse cx="965.6" cy="543.7" rx="118.1" ry="10.3"/>
<ellipse cx="964.5" cy="556.5" rx="121.6" ry="5.7"/>
<ellipse cx="964.5" cy="566.8" rx="123.4" ry="9.5"/>
<ellipse cx="964.9" cy="579.8" rx="124.4" ry="7.8"/>
<ellipse cx="965.4" cy="589.1" rx="124.9" ry="6.6"/>
<ellipse cx="966.0" cy="601.9" rx="125.6" ry="6.6"/>
<ellipse cx="966.4" cy="612.8" rx="126.2" ry="6.3"/>
<ellipse cx="966.6" cy="623.4" rx="126.9" ry="10.2"/>
<ellipse cx="966.6" cy="632.0" rx="127.5" ry="9.5"/>
<ellipse cx="966.6" cy="642.6" rx="128.3" ry="9.9"/>
<ellipse cx="966.4" cy="654.1" rx="129.2" ry="6.7"/>
<ellipse cx="965.8" cy="666.7" rx="130.1" ry="7.9"/>
<ellipse cx="965.4" cy="674.7" rx="130.8" ry="5.6"/>
<ellipse cx="964.9" cy="685.2" rx="131.6" ry="7.8"/>
<ellipse cx="964.5" cy="694.6" rx="132.2" ry="6.3"/>
<ellipse cx="964.2" cy="704.3" rx="132.8" ry="7.1"/>
<ellipse cx="963.7" cy="716.6" rx="133.5" ry="5.6"/>
<ellipse cx="963.2" cy="728.4" rx="134.2" ry="9.6"/>
<ellipse cx="962.8" cy="736.9" rx="134.7" ry="10.0"/>
<ellipse cx="962.4" cy="748.5" rx="135.1" ry="9.9"/>
</g>
<g id="w-larm" clip-path="url(#cla)">
<path d="M788.1 220 L782.6 228 L778.2 236 L774.8 244 L772.2 252 L770.1 260 L768.4 268 L766.6 276 L764.8 284 L762.9 292 L760.9 300 L758.7 308 L756.6 316 L754.4 324 L752.1 332 L749.9 340 L747.7 348 L745.4 356 L743.3 364 L741.1 372 L739 380 L736.9 388 L734.7 396 L732.4 404 L729.7 412 L726.7 420 L723.4 428 L719.9 436 L716.5 444 L713.4 452 L710.7 460 L708.4 468 L706.6 476 L704.9 484 L703.3 492 L701.7 500 L700 508 L698.2 516 L696.4 524 L694.6 532 L693 540 L691.6 548 L690.4 556 L689.3 564 L688.2 572 L687.3 580 L686.5 588 L685.7 596 L684.9 604 L684.1 612 L683.3 620 L682.5 628 L681.7 636 L681 644 L680.2 652 L679.4 660 L678.6 668 L677.8 676 L676.9 684 L675.9 692 L675.5 700 L675 708M783 228 L778.6 236 L775.3 244 L772.6 252 L770.5 260 L768.8 268 L767.1 276 L765.2 284 L763.3 292 L761.3 300 L759.1 308 L757 316 L754.7 324 L752.5 332 L750.2 340 L748 348 L745.7 356 L743.5 364 L741.3 372 L739.2 380 L737.1 388 L734.9 396 L732.5 404 L729.8 412 L726.8 420 L723.5 428 L720 436 L716.6 444 L713.4 452 L710.8 460 L708.5 468 L706.6 476 L704.9 484 L703.4 492 L701.8 500 L700.1 508 L698.2 516 L696.5 524 L694.7 532 L693.1 540 L691.7 548 L690.5 556 L689.4 564 L688.4 572 L687.5 580 L686.7 588 L685.9 596 L685.1 604 L684.4 612 L683.6 620 L682.8 628 L682.1 636 L681.3 644 L680.5 652 L679.7 660 L678.9 668 L678.1 676 L677.2 684 L676.3 692 L675.8 700 L675.3 708M771.4 260 L769.7 268 L767.9 276 L766.1 284 L764.2 292 L762.1 300 L760 308 L757.9 316 L755.7 324 L753.5 332 L751.3 340 L749.1 348 L746.9 356 L744.7 364 L742.5 372 L740.4 380 L738.3 388 L736.1 396 L733.8 404 L731.1 412 L728.1 420 L724.8 428 L721.2 436 L717.8 444 L714.7 452 L712.1 460 L709.8 468 L708 476 L706.3 484 L704.8 492 L703.2 500 L701.4 508 L699.6 516 L697.8 524 L696.1 532 L694.4 540 L693 548 L691.7 556 L690.6 564 L689.5 572 L688.5 580 L687.7 588 L686.8 596 L685.9 604 L685.1 612 L684.3 620 L683.4 628 L682.6 636 L681.8 644 L681 652 L680.1 660 L679.3 668 L678.4 676 L677.6 684 L676.6 692 L676.2 700 L675.7 708M770.1 268 L768.3 276 L766.5 284 L764.5 292 L762.4 300 L760.3 308 L758.1 316 L755.9 324 L753.7 332 L751.4 340 L749.2 348 L746.9 356 L744.7 364 L742.5 372 L740.4 380 L738.3 388 L736.1 396 L733.8 404 L731.1 412 L728.1 420 L724.8 428 L721.3 436 L717.9 444 L714.8 452 L712.2 460 L710 468 L708.2 476 L706.6 484 L705.1 492 L703.5 500 L701.9 508 L700.1 516 L698.3 524 L696.6 532 L695 540 L693.6 548 L692.4 556 L691.3 564 L690.2 572 L689.2 580 L688.3 588 L687.5 596 L686.6 604 L685.7 612 L684.9 620 L684 628 L683.2 636 L682.3 644 L681.5 652 L680.6 660 L679.8 668 L678.9 676 L677.9 684 L677 692 L676.5 700 L676 708M796.3 212 L790.3 220 L784.9 228 L780.4 236 L777.1 244 L774.4 252 L772.3 260 L770.5 268 L768.8 276 L766.9 284 L765 292 L763 300 L760.9 308 L758.8 316 L756.6 324 L754.4 332 L752.3 340 L750.1 348 L747.9 356 L745.7 364 L743.5 372 L741.4 380 L739.3 388 L737.1 396 L734.8 404 L732.2 412 L729.1 420 L725.9 428 L722.4 436 L719 444 L715.9 452 L713.3 460 L711 468 L709.2 476 L707.6 484 L706.1 492 L704.5 500 L702.8 508 L701 516 L699.2 524 L697.5 532 L695.8 540 L694.4 548 L693.1 556 L691.9 564 L690.8 572 L689.8 580 L688.8 588 L687.9 596 L687 604 L686.1 612 L685.2 620 L684.3 628 L683.4 636 L682.5 644 L681.6 652 L680.8 660 L679.9 668 L679 676 L678.1 684 L677.1 692 L676.7 700 L676.2 708M791.7 220 L786.3 228 L781.9 236 L778.6 244 L775.9 252 L773.8 260 L772 268 L770.2 276 L768.4 284 L766.4 292 L764.4 300 L762.3 308 L760.2 316 L758.1 324 L755.9 332 L753.8 340 L751.6 348 L749.4 356 L747.2 364 L745 372 L742.8 380 L740.7 388 L738.5 396 L736.1 404 L733.4 412 L730.4 420 L727.1 428 L723.6 436 L720.2 444 L717.1 452 L714.5 460 L712.2 468 L710.4 476 L708.8 484 L707.4 492 L705.8 500 L704.2 508 L702.4 516 L700.6 524 L698.8 532 L697.2 540 L695.8 548 L694.5 556 L693.2 564 L692.1 572 L691.1 580 L690.1 588 L689.1 596 L688.2 604 L687.2 612 L686.3 620 L685.4 628 L684.5 636 L683.5 644 L682.6 652 L681.7 660 L680.8 668 L679.9 676 L679 684 L678.1 692 L677.6 700 L677.1 708M787.2 228 L782.9 236 L779.6 244 L777 252 L774.9 260 L773.3 268 L771.7 276 L770 284 L768.2 292 L766.3 300 L764.4 308 L762.4 316 L760.3 324 L758.2 332 L756 340 L753.8 348 L751.5 356 L749.2 364 L746.8 372 L744.5 380 L742.1 388 L739.7 396 L737.1 404 L734.2 412 L731 420 L727.5 428 L723.9 436 L720.4 444 L717.2 452 L714.6 460 L712.4 468 L710.7 476 L709.2 484 L707.8 492 L706.4 500 L704.9 508 L703.3 516 L701.7 524 L700.1 532 L698.6 540 L697.2 548 L695.9 556 L694.7 564 L693.6 572 L692.4 580 L691.4 588 L690.3 596 L689.2 604 L688.1 612 L687 620 L685.9 628 L684.8 636 L683.8 644 L682.8 652 L681.8 660 L680.8 668 L679.9 676 L679 684 L678.2 692 L677.8 700 L677.5 708M789.5 228 L785.2 236 L782 244 L779.3 252 L777.2 260 L775.4 268 L773.6 276 L771.7 284 L769.7 292 L767.6 300 L765.5 308 L763.3 316 L761.1 324 L758.9 332 L756.6 340 L754.3 348 L752 356 L749.6 364 L747.2 372 L744.9 380 L742.6 388 L740.3 396 L737.8 404 L735 412 L731.9 420 L728.6 428 L725 436 L721.6 444 L718.5 452 L715.9 460 L713.7 468 L712 476 L710.5 484 L709.2 492 L707.8 500 L706.2 508 L704.5 516 L702.9 524 L701.2 532 L699.6 540 L698.2 548 L696.9 556 L695.6 564 L694.5 572 L693.4 580 L692.3 588 L691.3 596 L690.2 604 L689.2 612 L688.1 620 L687.1 628 L686 636 L685 644 L684 652 L683 660 L681.9 668 L681 676 L680 684 L679.1 692 L678.6 700 L678.1 708M802.3 212 L796.5 220 L791.2 228 L786.9 236 L783.6 244 L780.9 252 L778.6 260 L776.8 268 L775 276 L773.1 284 L771.1 292 L769.1 300 L767 308 L764.9 316 L762.9 324 L760.8 332 L758.6 340 L756.4 348 L754.2 356 L751.9 364 L749.6 372 L747.3 380 L745 388 L742.7 396 L740.3 404 L737.5 412 L734.4 420 L731 428 L727.4 436 L723.9 444 L720.8 452 L718.2 460 L716 468 L714.2 476 L712.7 484 L711.3 492 L709.8 500 L708.2 508 L706.4 516 L704.7 524 L702.9 532 L701.3 540 L699.7 548 L698.3 556 L697 564 L695.8 572 L694.6 580 L693.5 588 L692.4 596 L691.3 604 L690.3 612 L689.2 620 L688.2 628 L687.2 636 L686.2 644 L685.2 652 L684.2 660 L683.2 668 L682.3 676 L681.4 684 L680.6 692 L680.1 700 L679.7 708M800.3 220 L795 228 L790.7 236 L787.4 244 L784.7 252 L782.4 260 L780.6 268 L778.8 276 L777 284 L775.2 292 L773.3 300 L771.5 308 L769.6 316 L767.8 324 L765.9 332 L764 340 L761.9 348 L759.8 356 L757.5 364 L755.1 372 L752.8 380 L750.4 388 L748 396 L745.5 404 L742.5 412 L739.2 420 L735.6 428 L731.8 436 L728.1 444 L724.8 452 L722 460 L719.7 468 L717.8 476 L716.2 484 L714.7 492 L713.2 500 L711.5 508 L709.8 516 L708.1 524 L706.3 532 L704.7 540 L703.2 548 L701.8 556 L700.5 564 L699.3 572 L698.2 580 L697.1 588 L696 596 L695 604 L694 612 L692.9 620 L691.9 628 L690.9 636 L689.9 644 L688.9 652 L687.8 660 L686.8 668 L685.8 676 L684.8 684 L684 692 L683.4 700 L683 708M796.3 228 L792.1 236 L788.9 244 L786.2 252 L784 260 L782.2 268 L780.3 276 L778.5 284 L776.6 292 L774.6 300 L772.6 308 L770.6 316 L768.6 324 L766.7 332 L764.6 340 L762.4 348 L760.1 356 L757.7 364 L755.3 372 L752.9 380 L750.5 388 L748.1 396 L745.5 404 L742.6 412 L739.4 420 L735.8 428 L732.1 436 L728.5 444 L725.3 452 L722.6 460 L720.4 468 L718.6 476 L717.1 484 L715.7 492 L714.2 500 L712.6 508 L710.9 516 L709.1 524 L707.3 532 L705.6 540 L704 548 L702.6 556 L701.1 564 L699.8 572 L698.4 580 L697.2 588 L696 596 L694.8 604 L693.6 612 L692.5 620 L691.3 628 L690.2 636 L689.2 644 L688.1 652 L687.1 660 L686.1 668 L685.2 676 L684.4 684 L683.7 692 L683.3 700 L683.1 708M812.9 204 L810.1 212 L804.8 220 L800 228 L796.1 236 L793.2 244 L790.8 252 L788.9 260 L787.4 268 L785.9 276 L784.4 284 L782.7 292 L781 300 L779.2 308 L777.3 316 L775.4 324 L773.4 332 L771.2 340 L768.7 348 L766.1 356 L763.2 364 L760.3 372 L757.3 380 L754.4 388 L751.5 396 L748.6 404 L745.3 412 L741.8 420 L738.1 428 L734.3 436 L730.7 444 L727.7 452 L725.3 460 L723.5 468 L722.2 476 L721.2 484 L720.5 492 L719.5 500 L718.5 508 L717.3 516 L715.9 524 L714.4 532 L712.9 540 L711.4 548 L709.9 556 L708.3 564 L706.6 572 L704.9 580 L703.1 588 L701.3 596 L699.5 604 L697.7 612 L695.9 620 L694.2 628 L692.5 636 L690.9 644 L689.5 652 L688.1 660 L686.8 668 L685.9 676 L685.1 684 L684.6 692 L684.5 700 L684.6 708M797.5 236 L794.2 244 L791.5 252 L789.1 260 L787.2 268 L785.3 276 L783.3 284 L781.4 292 L779.4 300 L777.4 308 L775.4 316 L773.5 324 L771.6 332 L769.5 340 L767.4 348 L765.1 356 L762.6 364 L760.1 372 L757.5 380 L755 388 L752.6 396 L750 404 L747 412 L743.7 420 L740.2 428 L736.4 436 L732.8 444 L729.6 452 L727 460 L724.9 468 L723.3 476 L721.9 484 L720.7 492 L719.3 500 L717.9 508 L716.3 516 L714.6 524 L712.8 532 L711.1 540 L709.5 548 L707.9 556 L706.4 564 L704.9 572 L703.5 580 L702 588 L700.6 596 L699.2 604 L697.9 612 L696.5 620 L695.2 628 L693.9 636 L692.6 644 L691.4 652 L690.2 660 L689 668 L688 676 L687.1 684 L686.3 692 L685.9 700 L685.7 708M790.9 260 L789 268 L787 276 L785.1 284 L783.2 292 L781.2 300 L779.3 308 L777.5 316 L775.7 324 L773.9 332 L772 340 L769.9 348 L767.7 356 L765.3 364 L762.8 372 L760.3 380 L757.9 388 L755.5 396 L753 404 L750.1 412 L746.9 420 L743.4 428 L739.7 436 L736.2 444 L733.1 452 L730.6 460 L728.6 468 L727.1 476 L725.8 484 L724.7 492 L723.4 500 L722 508 L720.4 516 L718.8 524 L717 532 L715.3 540 L713.6 548 L712 556 L710.3 564 L708.7 572 L707.1 580 L705.6 588 L704 596 L702.5 604 L700.9 612 L699.4 620 L697.9 628 L696.5 636 L695 644 L693.7 652 L692.3 660 L691 668 L689.8 676 L688.9 684 L688 692 L687.6 700 L687.3 708M812.8 220 L808.4 228 L804.7 236 L801.8 244 L799.4 252 L797.4 260 L795.6 268 L793.9 276 L792.1 284 L790.1 292 L788.2 300 L786.1 308 L784 316 L781.9 324 L779.8 332 L777.5 340 L774.9 348 L772.1 356 L769.2 364 L766.1 372 L763.1 380 L760.2 388 L757.3 396 L754.6 404 L751.5 412 L748.1 420 L744.6 428 L741 436 L737.6 444 L734.8 452 L732.6 460 L731 468 L729.9 476 L729 484 L728.3 492 L727.4 500 L726.2 508 L724.9 516 L723.3 524 L721.5 532 L719.7 540 L717.8 548 L715.8 556 L713.8 564 L711.8 572 L709.7 580 L707.6 588 L705.5 596 L703.5 604 L701.6 612 L699.7 620 L698 628 L696.4 636 L694.9 644 L693.6 652 L692.4 660 L691.3 668 L690.5 676 L690 684 L689.7 692 L689.8 700 L690 708M803.3 244 L800.5 252 L798.1 260 L796.1 268 L794.1 276 L792.1 284 L790.1 292 L788.1 300 L786.1 308 L784.3 316 L782.5 324 L780.7 332 L778.8 340 L776.6 348 L774.3 356 L771.7 364 L768.9 372 L766.2 380 L763.6 388 L761 396 L758.3 404 L755.2 412 L751.8 420 L748.1 428 L744.1 436 L740.5 444 L737.3 452 L734.7 460 L732.6 468 L731.1 476 L729.8 484 L728.7 492 L727.4 500 L726.1 508 L724.5 516 L722.8 524 L721 532 L719.2 540 L717.5 548 L715.8 556 L714 564 L712.3 572 L710.6 580 L708.9 588 L707.2 596 L705.5 604 L703.9 612 L702.3 620 L700.7 628 L699.2 636 L697.7 644 L696.3 652 L694.9 660 L693.6 668 L692.6 676 L691.7 684 L691.1 692 L690.8 700 L690.7 708M802.8 252 L800.1 260 L797.7 268 L795.5 276 L793.4 284 L791.5 292 L789.6 300 L787.9 308 L786.4 316 L784.9 324 L783.6 332 L782.2 340 L780.5 348 L778.6 356 L776.4 364 L774 372 L771.5 380 L769.1 388 L766.6 396 L764 404 L761 412 L757.5 420 L753.6 428 L749.5 436 L745.5 444 L741.9 452 L739 460 L736.5 468 L734.7 476 L733 484 L731.6 492 L730 500 L728.3 508 L726.6 516 L724.7 524 L722.8 532 L720.9 540 L719.2 548 L717.5 556 L715.9 564 L714.4 572 L712.9 580 L711.4 588 L710 596 L708.7 604 L707.4 612 L706.1 620 L704.8 628 L703.5 636 L702.3 644 L701 652 L699.6 660 L698.3 668 L697.1 676 L696.1 684 L695.3 692 L694.7 700 L694.3 708M809.7 252 L807.3 260 L805.3 268 L803.3 276 L801.4 284 L799.6 292 L797.8 300 L796.1 308 L794.5 316 L792.9 324 L791.4 332 L789.7 340 L787.7 348 L785.3 356 L782.6 364 L779.6 372 L776.7 380 L773.7 388 L770.9 396 L767.9 404 L764.6 412 L760.8 420 L756.8 428 L752.6 436 L748.7 444 L745.3 452 L742.6 460 L740.5 468 L739 476 L737.8 484 L736.8 492 L735.6 500 L734.4 508 L733 516 L731.4 524 L729.6 532 L727.9 540 L726.2 548 L724.4 556 L722.7 564 L720.9 572 L719.1 580 L717.2 588 L715.4 596 L713.6 604 L711.8 612 L710.1 620 L708.4 628 L706.7 636 L705 644 L703.4 652 L701.8 660 L700.3 668 L699 676 L698.1 684 L697.4 692 L697 700 L696.9 708M827.5 220 L823 228 L819.1 236 L815.7 244 L812.9 252 L810.3 260 L808.2 268 L806.1 276 L804.1 284 L802.2 292 L800.3 300 L798.6 308 L796.9 316 L795.4 324 L793.9 332 L792.2 340 L790.2 348 L787.8 356 L785 364 L781.9 372 L778.9 380 L775.9 388 L773 396 L770 404 L766.6 412 L762.9 420 L758.9 428 L754.8 436 L750.9 444 L747.6 452 L745 460 L743.1 468 L741.9 476 L740.9 484 L740.1 492 L739.1 500 L738 508 L736.8 516 L735.3 524 L733.6 532 L731.9 540 L730.2 548 L728.3 556 L726.3 564 L724.3 572 L722.2 580 L720.1 588 L717.9 596 L715.8 604 L713.6 612 L711.5 620 L709.5 628 L707.5 636 L705.5 644 L703.7 652 L701.9 660 L700.2 668 L699 676 L698.1 684 L697.6 692 L697.3 700 L697.4 708M819.6 244 L816.7 252 L814.1 260 L811.8 268 L809.6 276 L807.5 284 L805.4 292 L803.4 300 L801.5 308 L799.7 316 L798.1 324 L796.5 332 L794.8 340 L792.7 348 L790.2 356 L787.3 364 L784.2 372 L781.2 380 L778.2 388 L775.3 396 L772.4 404 L769.1 412 L765.4 420 L761.5 428 L757.4 436 L753.6 444 L750.3 452 L747.8 460 L745.9 468 L744.7 476 L743.7 484 L742.8 492 L741.9 500 L740.7 508 L739.4 516 L737.8 524 L736.1 532 L734.2 540 L732.4 548 L730.4 556 L728.4 564 L726.3 572 L724.2 580 L722 588 L719.8 596 L717.7 604 L715.6 612 L713.6 620 L711.6 628 L709.6 636 L707.8 644 L706 652 L704.3 660 L702.6 668 L701.4 676 L700.5 684 L700 692 L699.7 700 L699.8 708M821.7 244 L818.8 252 L816.1 260 L813.9 268 L811.7 276 L809.6 284 L807.5 292 L805.5 300 L803.7 308 L802.1 316 L800.5 324 L799 332 L797.3 340 L795.3 348 L792.8 356 L790 364 L786.9 372 L783.8 380 L780.8 388 L777.9 396 L775 404 L771.7 412 L768 420 L764.1 428 L760 436 L756.1 444 L752.9 452 L750.4 460 L748.5 468 L747.3 476 L746.3 484 L745.4 492 L744.5 500 L743.3 508 L742 516 L740.4 524 L738.5 532 L736.6 540 L734.7 548 L732.6 556 L730.5 564 L728.3 572 L726 580 L723.7 588 L721.4 596 L719.2 604 L716.9 612 L714.8 620 L712.7 628 L710.6 636 L708.7 644 L706.8 652 L705.1 660 L703.4 668 L702.1 676 L701.2 684 L700.7 692 L700.5 700 L700.6 708M844.5 204 L842.3 212 L838 220 L833.9 228 L830.2 236 L826.9 244 L824 252 L821.4 260 L819 268 L816.8 276 L814.6 284 L812.5 292 L810.5 300 L808.7 308 L807 316 L805.4 324 L803.9 332 L802.2 340 L800.1 348 L797.5 356 L794.5 364 L791.2 372 L787.9 380 L784.7 388 L781.7 396 L778.6 404 L775.1 412 L771.3 420 L767.2 428 L762.9 436 L759 444 L755.7 452 L753.1 460 L751.2 468 L750.1 476 L749.1 484 L748.4 492 L747.5 500 L746.4 508 L745.2 516 L743.6 524 L741.9 532 L740 540 L738.1 548 L736.1 556 L733.9 564 L731.7 572 L729.5 580 L727.1 588 L724.8 596 L722.6 604 L720.3 612 L718.2 620 L716.1 628 L714 636 L712 644 L710.2 652 L708.4 660 L706.7 668 L705.4 676 L704.6 684 L704.2 692 L704 700 L704.2 708M828.7 244 L825.7 252 L822.9 260 L820.5 268 L818.3 276 L816.1 284 L814.1 292 L812.2 300 L810.5 308 L808.9 316 L807.5 324 L806.3 332 L804.8 340 L802.8 348 L800.4 356 L797.6 364 L794.4 372 L791.2 380 L788.2 388 L785.2 396 L782.2 404 L778.9 412 L775.1 420 L771.1 428 L766.8 436 L762.9 444 L759.6 452 L757 460 L755.2 468 L754 476 L753 484 L752.3 492 L751.3 500 L750.2 508 L748.8 516 L747.2 524 L745.3 532 L743.3 540 L741.2 548 L739 556 L736.6 564 L734.2 572 L731.8 580 L729.2 588 L726.7 596 L724.3 604 L721.9 612 L719.6 620 L717.4 628 L715.2 636 L713.2 644 L711.3 652 L709.4 660 L707.7 668 L706.5 676 L705.7 684 L705.4 692 L705.2 700 L705.5 708M840.8 220 L837 228 L833.6 236 L830.6 244 L827.9 252 L825.5 260 L823.3 268 L821.3 276 L819.3 284 L817.4 292 L815.6 300 L814 308 L812.5 316 L811 324 L809.7 332 L808 340 L805.9 348 L803.2 356 L800.1 364 L796.6 372 L793.1 380 L789.6 388 L786.3 396 L783 404 L779.2 412 L775.1 420 L770.8 428 L766.3 436 L762.1 444 L758.7 452 L756 460 L754.1 468 L752.9 476 L752 484 L751.4 492 L750.6 500 L749.7 508 L748.6 516 L747.2 524 L745.6 532 L743.9 540 L742.2 548 L740.3 556 L738.3 564 L736.2 572 L734 580 L731.7 588 L729.4 596 L727.2 604 L724.9 612 L722.7 620 L720.5 628 L718.3 636 L716.2 644 L714.2 652 L712.2 660 L710.2 668 L708.7 676 L707.7 684 L707.1 692 L706.6 700 L706.6 708M852.5 204 L850.7 212 L846.8 220 L843 228 L839.4 236 L836.2 244 L833.1 252 L830.3 260 L827.7 268 L825.1 276 L822.6 284 L820.1 292 L817.8 300 L815.7 308 L813.7 316 L811.9 324 L810.3 332 L808.4 340 L806.1 348 L803.4 356 L800.2 364 L796.8 372 L793.4 380 L790.3 388 L787.3 396 L784.4 404 L781.2 412 L777.7 420 L774 428 L770 436 L766.5 444 L763.6 452 L761.5 460 L760.1 468 L759.3 476 L758.8 484 L758.3 492 L757.7 500 L756.7 508 L755.5 516 L753.8 524 L751.8 532 L749.6 540 L747.3 548 L744.7 556 L741.9 564 L739.1 572 L736.1 580 L733 588 L730.1 596 L727.1 604 L724.3 612 L721.6 620 L719.1 628 L716.7 636 L714.4 644 L712.4 652 L710.5 660 L708.8 668 L707.7 676 L707.2 684 L707.2 692 L707.4 700 L708 708M846.4 220 L842.4 228 L838.6 236 L835.3 244 L832.1 252 L829.2 260 L826.6 268 L824.1 276 L821.7 284 L819.3 292 L817.2 300 L815.3 308 L813.5 316 L811.9 324 L810.5 332 L808.9 340 L806.8 348 L804.3 356 L801.3 364 L798 372 L794.7 380 L791.6 388 L788.6 396 L785.7 404 L782.4 412 L778.8 420 L774.9 428 L770.8 436 L767 444 L763.9 452 L761.6 460 L759.9 468 L759 476 L758.2 484 L757.6 492 L756.8 500 L755.8 508 L754.5 516 L752.9 524 L750.9 532 L748.8 540 L746.6 548 L744.1 556 L741.5 564 L738.8 572 L736.1 580 L733.2 588 L730.5 596 L727.7 604 L725.1 612 L722.5 620 L720.1 628 L717.8 636 L715.6 644 L713.5 652 L711.6 660 L709.9 668 L708.7 676 L708 684 L707.8 692 L707.8 700 L708.3 708M857.1 204 L855.2 212 L851.4 220 L847.5 228 L843.8 236 L840.4 244 L837.2 252 L834.2 260 L831.4 268 L828.8 276 L826.2 284 L823.8 292 L821.6 300 L819.7 308 L818 316 L816.5 324 L815.2 332 L813.8 340 L811.8 348 L809.4 356 L806.4 364 L803.2 372 L800 380 L796.9 388 L794 396 L791.1 404 L787.8 412 L784.1 420 L780.1 428 L775.9 436 L771.9 444 L768.6 452 L766.1 460 L764.3 468 L763.1 476 L762.2 484 L761.4 492 L760.5 500 L759.3 508 L757.9 516 L756.2 524 L754.1 532 L752 540 L749.8 548 L747.4 556 L745 564 L742.4 572 L739.8 580 L737.2 588 L734.6 596 L732.1 604 L729.6 612 L727.3 620 L724.9 628 L722.7 636 L720.4 644 L718.3 652 L716.3 660 L714.2 668 L712.8 676 L711.8 684 L711.3 692 L711 700 L711.1 708M852 220 L848.1 228 L844.5 236 L841.1 244 L838 252 L835.1 260 L832.5 268 L830 276 L827.6 284 L825.4 292 L823.4 300 L821.6 308 L820 316 L818.6 324 L817.4 332 L815.8 340 L813.8 348 L811.2 356 L808.1 364 L804.6 372 L801.1 380 L797.8 388 L794.7 396 L791.5 404 L788 412 L784.2 420 L780.1 428 L775.8 436 L771.9 444 L768.6 452 L766.3 460 L764.7 468 L763.8 476 L763.2 484 L762.8 492 L762.2 500 L761.3 508 L760.2 516 L758.8 524 L757 532 L755 540 L752.8 548 L750.4 556 L747.9 564 L745.2 572 L742.3 580 L739.4 588 L736.5 596 L733.6 604 L730.7 612 L727.9 620 L725.2 628 L722.6 636 L720.1 644 L717.7 652 L715.5 660 L713.4 668 L711.9 676 L711 684 L710.6 692 L710.5 700 L710.8 708M855.2 220 L851.3 228 L847.5 236 L844 244 L840.7 252 L837.6 260 L834.8 268 L832.2 276 L829.7 284 L827.4 292 L825.3 300 L823.6 308 L822.1 316 L820.8 324 L819.7 332 L818.4 340 L816.6 348 L814.2 356 L811.2 364 L807.9 372 L804.5 380 L801.4 388 L798.4 396 L795.3 404 L791.9 412 L788.1 420 L784 428 L779.6 436 L775.6 444 L772.2 452 L769.7 460 L768 468 L766.9 476 L766.1 484 L765.4 492 L764.6 500 L763.5 508 L762.2 516 L760.5 524 L758.5 532 L756.3 540 L754 548 L751.5 556 L748.8 564 L746.1 572 L743.3 580 L740.4 588 L737.6 596 L734.8 604 L732.1 612 L729.6 620 L727.1 628 L724.7 636 L722.4 644 L720.3 652 L718.3 660 L716.3 668 L715 676 L714.2 684 L713.9 692 L713.8 700 L714.2 708M856.7 220 L852.9 228 L849.2 236 L845.7 244 L842.5 252 L839.4 260 L836.7 268 L834.1 276 L831.6 284 L829.3 292 L827.2 300 L825.4 308 L823.8 316 L822.4 324 L821.2 332 L819.8 340 L817.7 348 L815.1 356 L811.9 364 L808.3 372 L804.8 380 L801.4 388 L798.3 396 L795.1 404 L791.6 412 L787.8 420 L783.7 428 L779.3 436 L775.5 444 L772.3 452 L770.1 460 L768.6 468 L767.9 476 L767.4 484 L767.1 492 L766.6 500 L766 508 L765 516 L763.6 524 L761.8 532 L759.9 540 L757.7 548 L755.3 556 L752.6 564 L749.8 572 L746.9 580 L743.8 588 L740.7 596 L737.6 604 L734.5 612 L731.6 620 L728.7 628 L725.9 636 L723.2 644 L720.6 652 L718.2 660 L715.9 668 L714.2 676 L713.2 684 L712.8 692 L712.6 700 L712.9 708M840.4 260 L837.8 268 L835.3 276 L832.9 284 L830.7 292 L828.7 300 L827 308 L825.4 316 L824.1 324 L823 332 L821.6 340 L819.5 348 L816.9 356 L813.7 364 L810.1 372 L806.6 380 L803.1 388 L799.9 396 L796.7 404 L793.1 412 L789.2 420 L785 428 L780.5 436 L776.6 444 L773.3 452 L770.9 460 L769.3 468 L768.5 476 L767.9 484 L767.5 492 L766.8 500 L766 508 L764.9 516 L763.4 524 L761.5 532 L759.5 540 L757.2 548 L754.7 556 L752 564 L749.2 572 L746.2 580 L743.1 588 L740.1 596 L737.1 604 L734.1 612 L731.3 620 L728.5 628 L725.9 636 L723.3 644 L721 652 L718.8 660 L716.6 668 L715.2 676 L714.4 684 L714.2 692 L714.1 700 L714.6 708M853.5 228 L850 236 L846.7 244 L843.6 252 L840.7 260 L838.1 268 L835.6 276 L833.3 284 L831.2 292 L829.3 300 L827.7 308 L826.3 316 L825 324 L824 332 L822.7 340 L820.8 348 L818.2 356 L815.1 364 L811.5 372 L807.9 380 L804.5 388 L801.3 396 L798.1 404 L794.5 412 L790.5 420 L786.3 428 L781.8 436 L777.8 444 L774.5 452 L772.1 460 L770.5 468 L769.6 476 L769 484 L768.6 492 L768 500 L767.2 508 L766.1 516 L764.6 524 L762.7 532 L760.7 540 L758.4 548 L755.9 556 L753.2 564 L750.3 572 L747.3 580 L744.1 588 L741 596 L737.9 604 L734.9 612 L732 620 L729.1 628 L726.4 636 L723.7 644 L721.3 652 L718.9 660 L716.7 668 L715.2 676 L714.3 684 L714.1 692 L713.9 700 L714.4 708M856.9 228 L853.4 236 L850.1 244 L847 252 L844 260 L841.3 268 L838.7 276 L836.3 284 L834 292 L832 300 L830.3 308 L828.7 316 L827.4 324 L826.4 332 L825 340 L823 348 L820.4 356 L817.2 364 L813.5 372 L809.9 380 L806.5 388 L803.3 396 L800.1 404 L796.5 412 L792.5 420 L788.3 428 L783.8 436 L779.8 444 L776.5 452 L774.1 460 L772.5 468 L771.6 476 L771 484 L770.6 492 L769.9 500 L769.1 508 L768 516 L766.4 524 L764.5 532 L762.4 540 L760.1 548 L757.6 556 L754.8 564 L752 572 L749 580 L745.9 588 L742.8 596 L739.8 604 L736.8 612 L734 620 L731.2 628 L728.5 636 L725.9 644 L723.5 652 L721.2 660 L719 668 L717.5 676 L716.6 684 L716.3 692 L716.1 700 L716.6 708M865.5 204 L863.8 212 L860.2 220 L856.5 228 L853.1 236 L849.8 244 L846.6 252 L843.7 260 L841 268 L838.5 276 L836.1 284 L833.9 292 L831.9 300 L830.3 308 L828.8 316 L827.5 324 L826.5 332 L825.1 340 L823.2 348 L820.6 356 L817.3 364 L813.7 372 L810 380 L806.5 388 L803.2 396 L800 404 L796.3 412 L792.3 420 L788 428 L783.5 436 L779.5 444 L776.2 452 L773.7 460 L772.1 468 L771.3 476 L770.7 484 L770.3 492 L769.7 500 L769 508 L767.9 516 L766.4 524 L764.6 532 L762.5 540 L760.3 548 L757.7 556 L755 564 L752.2 572 L749.2 580 L746 588 L742.9 596 L739.9 604 L736.8 612 L733.9 620 L731.1 628 L728.4 636 L725.7 644 L723.3 652 L720.9 660 L718.7 668 L717.1 676 L716.3 684 L716 692 L715.9 700 L716.3 708M844.5 260 L841.8 268 L839.3 276 L837 284 L834.8 292 L832.9 300 L831.2 308 L829.8 316 L828.6 324 L827.6 332 L826.2 340 L824.3 348 L821.6 356 L818.4 364 L814.7 372 L811 380 L807.5 388 L804.1 396 L800.8 404 L797.1 412 L793.1 420 L788.8 428 L784.2 436 L780.2 444 L776.8 452 L774.4 460 L772.8 468 L772.1 476 L771.5 484 L771.2 492 L770.6 500 L769.9 508 L768.9 516 L767.4 524 L765.6 532 L763.6 540 L761.3 548 L758.7 556 L756 564 L753.1 572 L750.1 580 L746.9 588 L743.7 596 L740.6 604 L737.5 612 L734.5 620 L731.6 628 L728.8 636 L726.2 644 L723.7 652 L721.3 660 L719 668 L717.5 676 L716.6 684 L716.4 692 L716.3 700 L716.8 708M857.6 228 L854.2 236 L850.9 244 L847.8 252 L844.9 260 L842.2 268 L839.7 276 L837.4 284 L835.2 292 L833.2 300 L831.6 308 L830.1 316 L828.9 324 L827.9 332 L826.5 340 L824.5 348 L821.8 356 L818.6 364 L814.8 372 L811.1 380 L807.6 388 L804.3 396 L801 404 L797.3 412 L793.3 420 L789 428 L784.5 436 L780.4 444 L777.1 452 L774.7 460 L773.1 468 L772.4 476 L771.8 484 L771.5 492 L771 500 L770.2 508 L769.2 516 L767.7 524 L765.9 532 L763.8 540 L761.5 548 L758.9 556 L756.2 564 L753.3 572 L750.2 580 L747 588 L743.8 596 L740.7 604 L737.6 612 L734.7 620 L731.8 628 L729 636 L726.3 644 L723.9 652 L721.5 660 L719.3 668 L717.7 676 L716.9 684 L716.7 692 L716.6 700 L717.1 708M713 588 L711.2 596 L709.4 604 L707.6 612 L705.8 620 L704.1 628 L702.5 636 L700.9 644 L699.3 652 L697.8 660 L696.4 668 L695.3 676 L694.4 684 L693.8 692 L693.5 700 L693.4 708M709.7 588 L708 596 L706.3 604 L704.6 612 L703 620 L701.4 628 L699.8 636 L698.3 644 L696.9 652 L695.4 660 L694.1 668 L692.9 676 L692 684 L691.3 692 L691 700 L690.8 708M705.7 588 L704.1 596 L702.5 604 L701 612 L699.5 620 L698.1 628 L696.8 636 L695.5 644 L694.2 652 L693.1 660 L691.9 668 L691 676 L690.3 684 L689.8 692 L689.6 700 L689.5 708M702.1 588 L700.8 596 L699.5 604 L698.2 612 L696.9 620 L695.7 628 L694.4 636 L693.2 644 L692 652 L690.8 660 L689.6 668 L688.5 676 L687.6 684 L686.7 692 L686.3 700 L685.9 708M698.9 588 L697.9 596 L696.8 604 L695.6 612 L694.5 620 L693.4 628 L692.2 636 L691 644 L689.8 652 L688.6 660 L687.4 668 L686.2 676 L685.2 684 L684.2 692 L683.6 700 L683.1 708M694.1 588 L693.2 596 L692.2 604 L691.3 612 L690.3 620 L689.4 628 L688.5 636 L687.6 644 L686.7 652 L685.8 660 L684.9 668 L684 676 L683.2 684 L682.4 692 L682 700 L681.6 708M690.4 588 L689.3 596 L688.2 604 L687.2 612 L686.2 620 L685.3 628 L684.4 636 L683.5 644 L682.6 652 L681.8 660 L681 668 L680.3 676 L679.5 684 L678.8 692 L678.5 700 L678.3 708M720.3 588 L718.1 596 L716 604 L713.9 612 L711.8 620 L709.8 628 L707.9 636 L706 644 L704.2 652 L702.5 660 L700.9 668 L699.7 676 L698.8 684 L698.3 692 L698 700 L698.1 708M723.8 588 L721.6 596 L719.3 604 L717.1 612 L715 620 L713 628 L710.9 636 L709 644 L707.2 652 L705.4 660 L703.7 668 L702.4 676 L701.6 684 L701.1 692 L700.8 700 L700.9 708M726.8 588 L724.5 596 L722.2 604 L719.9 612 L717.7 620 L715.6 628 L713.6 636 L711.6 644 L709.8 652 L708.1 660 L706.4 668 L705.2 676 L704.4 684 L704.1 692 L703.9 700 L704.1 708M730.7 588 L728 596 L725.4 604 L722.8 612 L720.2 620 L717.8 628 L715.3 636 L713 644 L710.8 652 L708.7 660 L706.7 668 L705.3 676 L704.3 684 L703.8 692 L703.5 700 L703.7 708M735.8 588 L733.3 596 L730.7 604 L728.2 612 L725.8 620 L723.4 628 L721.1 636 L718.8 644 L716.7 652 L714.6 660 L712.6 668 L711.1 676 L710.2 684 L709.8 692 L709.5 700 L709.7 708M739.8 588 L737 596 L734.1 604 L731.3 612 L728.6 620 L726 628 L723.4 636 L721 644 L718.7 652 L716.5 660 L714.4 668 L713 676 L712.2 684 L711.9 692 L711.7 700 L712.1 708M741.6 588 L738.8 596 L735.9 604 L733.1 612 L730.4 620 L727.7 628 L725 636 L722.4 644 L720 652 L717.6 660 L715.3 668 L713.7 676 L712.7 684 L712.2 692 L711.9 700 L712.1 708M721.8 476 L720.6 484 L719.6 492 L718.4 500 L717.1 508 L715.6 516 L714 524 L712.3 532 L710.7 540 L709.1 548 L707.6 556 L706 564 L704.5 572 L702.9 580 L701.4 588 L699.9 596 L698.3 604 L696.8 612 L695.3 620 L693.8 628 L692.3 636 L690.9 644 L689.5 652 L688.1 660 L686.8 668 L685.7 676 L684.7 684 L683.9 692 L683.4 700 L683.2 708M716.3 476 L714.8 484 L713.4 492 L711.9 500 L710.3 508 L708.6 516 L706.8 524 L705.1 532 L703.4 540 L701.9 548 L700.4 556 L699.1 564 L697.8 572 L696.6 580 L695.4 588 L694.2 596 L693.1 604 L692 612 L690.9 620 L689.8 628 L688.8 636 L687.7 644 L686.7 652 L685.7 660 L684.6 668 L683.7 676 L682.8 684 L682 692 L681.6 700 L681.2 708M713 476 L711.5 484 L710.2 492 L708.7 500 L707.2 508 L705.6 516 L704 524 L702.4 532 L701 540 L699.6 548 L698.4 556 L697.3 564 L696.2 572 L695.2 580 L694.3 588 L693.3 596 L692.4 604 L691.4 612 L690.5 620 L689.5 628 L688.5 636 L687.5 644 L686.6 652 L685.5 660 L684.5 668 L683.5 676 L682.5 684 L681.6 692 L681 700 L680.5 708M709.9 476 L708.1 484 L706.5 492 L704.8 500 L703 508 L701.1 516 L699.3 524 L697.4 532 L695.7 540 L694.2 548 L692.8 556 L691.6 564 L690.4 572 L689.4 580 L688.5 588 L687.5 596 L686.7 604 L685.8 612 L685 620 L684.2 628 L683.4 636 L682.6 644 L681.8 652 L681.1 660 L680.3 668 L679.6 676 L678.8 684 L678.1 692 L677.8 700 L677.4 708M758.3 476 L757.4 484 L756.7 492 L755.8 500 L754.7 508 L753.3 516 L751.6 524 L749.6 532 L747.5 540 L745.3 548 L742.9 556 L740.5 564 L737.9 572 L735.3 580 L732.7 588 L730.1 596 L727.5 604 L725.1 612 L722.7 620 L720.5 628 L718.3 636 L716.2 644 L714.3 652 L712.4 660 L710.6 668 L709.4 676 L708.6 684 L708.3 692 L708.1 700 L708.3 708M761.8 476 L761.1 484 L760.7 492 L760 500 L759.2 508 L758.2 516 L756.8 524 L755 532 L753.2 540 L751.1 548 L748.9 556 L746.5 564 L743.9 572 L741.3 580 L738.5 588 L735.7 596 L733 604 L730.3 612 L727.6 620 L725 628 L722.5 636 L720.1 644 L717.8 652 L715.6 660 L713.4 668 L711.9 676 L711 684 L710.5 692 L710.3 700 L710.5 708M764.8 476 L763.9 484 L763.2 492 L762.3 500 L761.3 508 L760.1 516 L758.5 524 L756.7 532 L754.7 540 L752.6 548 L750.3 556 L747.9 564 L745.4 572 L742.8 580 L740.1 588 L737.5 596 L734.8 604 L732.3 612 L729.8 620 L727.4 628 L725 636 L722.6 644 L720.5 652 L718.3 660 L716.3 668 L714.8 676 L713.9 684 L713.4 692 L713.1 700 L713.3 708M767.9 476 L767.3 484 L766.9 492 L766.4 500 L765.6 508 L764.6 516 L763.2 524 L761.4 532 L759.4 540 L757.3 548 L754.9 556 L752.3 564 L749.6 572 L746.7 580 L743.7 588 L740.7 596 L737.8 604 L734.9 612 L732.1 620 L729.3 628 L726.7 636 L724.1 644 L721.7 652 L719.4 660 L717.2 668 L715.7 676 L714.8 684 L714.5 692 L714.4 700 L714.8 708"/>
<ellipse cx="816.2" cy="236.0" rx="35.1" ry="4.9" transform="rotate(24.4 816.2 236.0)"/>
<ellipse cx="812.3" cy="245.7" rx="36.0" ry="6.9" transform="rotate(20.7 812.3 245.7)"/>
<ellipse cx="810.1" cy="251.9" rx="36.3" ry="6.6" transform="rotate(18.7 810.1 251.9)"/>
<ellipse cx="807.7" cy="259.4" rx="36.4" ry="5.5" transform="rotate(16.6 807.7 259.4)"/>
<ellipse cx="805.6" cy="266.7" rx="36.2" ry="4.8" transform="rotate(15.1 805.6 266.7)"/>
<ellipse cx="804.0" cy="272.7" rx="36.0" ry="5.2" transform="rotate(14.8 804.0 272.7)"/>
<ellipse cx="802.1" cy="280.1" rx="35.7" ry="7.6" transform="rotate(14.6 802.1 280.1)"/>
<ellipse cx="800.4" cy="286.6" rx="35.6" ry="7.7" transform="rotate(14.4 800.4 286.6)"/>
<ellipse cx="798.7" cy="293.5" rx="35.6" ry="5.5" transform="rotate(14.1 798.7 293.5)"/>
<ellipse cx="796.4" cy="302.7" rx="35.8" ry="7.2" transform="rotate(13.4 796.4 302.7)"/>
<ellipse cx="794.6" cy="310.5" rx="36.1" ry="4.4" transform="rotate(12.8 794.6 310.5)"/>
<ellipse cx="792.9" cy="318.4" rx="36.6" ry="5.5" transform="rotate(12.2 792.9 318.4)"/>
<ellipse cx="790.8" cy="328.0" rx="37.3" ry="4.9" transform="rotate(11.8 790.8 328.0)"/>
<ellipse cx="789.2" cy="335.5" rx="37.7" ry="7.4" transform="rotate(12.7 789.2 335.5)"/>
<ellipse cx="787.8" cy="341.6" rx="37.8" ry="5.7" transform="rotate(14.0 787.8 341.6)"/>
<ellipse cx="785.3" cy="350.9" rx="37.4" ry="7.0" transform="rotate(16.4 785.3 350.9)"/>
<ellipse cx="783.4" cy="357.0" rx="36.9" ry="4.3" transform="rotate(18.0 783.4 357.0)"/>
<ellipse cx="781.2" cy="363.3" rx="36.2" ry="7.5" transform="rotate(19.4 781.2 363.3)"/>
<ellipse cx="778.7" cy="370.3" rx="35.4" ry="6.9" transform="rotate(20.0 778.7 370.3)"/>
<ellipse cx="775.2" cy="379.9" rx="34.6" ry="5.4" transform="rotate(19.7 775.2 379.9)"/>
<ellipse cx="772.7" cy="387.0" rx="34.1" ry="7.6" transform="rotate(19.3 772.7 387.0)"/>
<ellipse cx="769.8" cy="395.5" rx="33.5" ry="5.1" transform="rotate(19.2 769.8 395.5)"/>
<ellipse cx="766.6" cy="404.3" rx="32.7" ry="5.3" transform="rotate(20.6 766.6 404.3)"/>
<ellipse cx="763.8" cy="411.4" rx="31.8" ry="4.2" transform="rotate(22.7 763.8 411.4)"/>
<ellipse cx="759.8" cy="420.5" rx="30.8" ry="7.5" transform="rotate(24.7 759.8 420.5)"/>
<ellipse cx="755.7" cy="429.0" rx="29.9" ry="7.6" transform="rotate(26.2 755.7 429.0)"/>
<ellipse cx="752.7" cy="435.1" rx="29.6" ry="5.0" transform="rotate(26.0 752.7 435.1)"/>
<ellipse cx="749.0" cy="443.0" rx="29.8" ry="7.6" transform="rotate(23.8 749.0 443.0)"/>
<ellipse cx="745.0" cy="452.8" rx="30.5" ry="5.6" transform="rotate(19.5 745.0 452.8)"/>
<ellipse cx="742.8" cy="459.8" rx="31.3" ry="5.7" transform="rotate(15.7 742.8 459.8)"/>
<ellipse cx="740.8" cy="467.8" rx="32.2" ry="7.5" transform="rotate(11.6 740.8 467.8)"/>
<ellipse cx="739.7" cy="474.5" rx="32.9" ry="7.1" transform="rotate(8.9 739.7 474.5)"/>
<ellipse cx="738.4" cy="483.5" rx="33.6" ry="7.2" transform="rotate(7.4 738.4 483.5)"/>
<ellipse cx="737.3" cy="492.6" rx="34.3" ry="6.4" transform="rotate(7.2 737.3 492.6)"/>
<ellipse cx="736.3" cy="499.9" rx="34.7" ry="5.4" transform="rotate(8.3 736.3 499.9)"/>
<ellipse cx="735.2" cy="507.3" rx="35.1" ry="7.0" transform="rotate(9.4 735.2 507.3)"/>
<ellipse cx="734.1" cy="513.6" rx="35.3" ry="4.9" transform="rotate(10.4 734.1 513.6)"/>
<ellipse cx="732.3" cy="522.6" rx="35.4" ry="5.1" transform="rotate(11.9 732.3 522.6)"/>
<ellipse cx="730.9" cy="528.9" rx="35.3" ry="4.3" transform="rotate(12.6 730.9 528.9)"/>
<ellipse cx="729.1" cy="537.1" rx="35.1" ry="5.4" transform="rotate(12.8 729.1 537.1)"/>
<ellipse cx="726.8" cy="547.0" rx="34.7" ry="7.4" transform="rotate(13.1 726.8 547.0)"/>
<ellipse cx="724.5" cy="557.0" rx="33.8" ry="5.2" transform="rotate(13.4 724.5 557.0)"/>
<ellipse cx="722.9" cy="563.3" rx="33.2" ry="4.5" transform="rotate(13.6 722.9 563.3)"/>
<ellipse cx="721.0" cy="571.3" rx="32.2" ry="6.8" transform="rotate(13.9 721.0 571.3)"/>
<ellipse cx="719.0" cy="579.1" rx="31.2" ry="5.0" transform="rotate(14.1 719.0 579.1)"/>
<ellipse cx="717.1" cy="586.8" rx="30.1" ry="6.4" transform="rotate(14.0 717.1 586.8)"/>
<ellipse cx="714.9" cy="595.5" rx="28.9" ry="6.9" transform="rotate(13.9 714.9 595.5)"/>
<ellipse cx="712.6" cy="604.9" rx="27.6" ry="6.6" transform="rotate(13.7 712.6 604.9)"/>
<ellipse cx="711.1" cy="611.3" rx="26.7" ry="7.2" transform="rotate(13.4 711.1 611.3)"/>
<ellipse cx="709.4" cy="618.5" rx="25.8" ry="6.2" transform="rotate(13.1 709.4 618.5)"/>
<ellipse cx="707.7" cy="626.0" rx="24.8" ry="6.9" transform="rotate(12.8 707.7 626.0)"/>
<ellipse cx="706.1" cy="632.8" rx="24.0" ry="5.1" transform="rotate(12.6 706.1 632.8)"/>
<ellipse cx="704.6" cy="639.8" rx="23.2" ry="4.8" transform="rotate(12.2 704.6 639.8)"/>
<ellipse cx="702.6" cy="649.3" rx="22.2" ry="6.3" transform="rotate(11.5 702.6 649.3)"/>
<ellipse cx="701.1" cy="656.6" rx="21.5" ry="5.6" transform="rotate(11.2 701.1 656.6)"/>
<ellipse cx="699.2" cy="666.6" rx="20.6" ry="6.0" transform="rotate(9.9 699.2 666.6)"/>
<ellipse cx="698.1" cy="673.5" rx="20.4" ry="7.1" transform="rotate(7.9 698.1 673.5)"/>
<ellipse cx="697.1" cy="682.1" rx="20.4" ry="7.8" transform="rotate(5.4 697.1 682.1)"/>
<ellipse cx="696.5" cy="688.5" rx="20.6" ry="5.9" transform="rotate(3.9 696.5 688.5)"/>
<ellipse cx="696.1" cy="697.8" rx="20.9" ry="7.2" transform="rotate(1.4 696.1 697.8)"/>
<ellipse cx="696.0" cy="707.5" rx="21.5" ry="4.3"/>
</g>
<g id="w-rarm" clip-path="url(#cra)">
<path d="M1053.1 220 L1055.4 228 L1057.6 236 L1059.5 244 L1061.2 252 L1062.9 260 L1064.5 268 L1066.2 276 L1067.9 284 L1069.7 292 L1071.5 300 L1073.5 308 L1075.5 316 L1077.6 324 L1079.8 332 L1081.8 340 L1083.6 348 L1085.1 356 L1086.5 364 L1087.7 372 L1089.4 380 L1091.7 388 L1094.6 396 L1098.1 404 L1102.1 412 L1105.8 420 L1109.2 428 L1112.2 436 L1115 444 L1117.5 452 L1120 460 L1122.7 468 L1125.5 476 L1128.8 484 L1132.3 492 L1136.1 500 L1140.3 508 L1145.2 516 L1150.5 524 L1156.2 532 L1162.1 540 L1168.1 548 L1173.9 556 L1179.7 564 L1185.3 572 L1190.8 580 L1196.2 588 L1201.5 596 L1206.7 604 L1211.8 612 L1216.8 620 L1221.7 628 L1226.3 636 L1228.7 644 L1231 650M1057.8 236 L1059.7 244 L1061.4 252 L1063.1 260 L1064.7 268 L1066.3 276 L1068 284 L1069.8 292 L1071.6 300 L1073.6 308 L1075.6 316 L1077.7 324 L1079.8 332 L1081.9 340 L1083.7 348 L1085.3 356 L1086.6 364 L1087.8 372 L1089.6 380 L1091.9 388 L1094.8 396 L1098.3 404 L1102.3 412 L1106 420 L1109.4 428 L1112.5 436 L1115.2 444 L1117.7 452 L1120.2 460 L1122.9 468 L1125.7 476 L1128.9 484 L1132.4 492 L1136.2 500 L1140.4 508 L1145.3 516 L1150.6 524 L1156.2 532 L1162.2 540 L1168.1 548 L1174 556 L1179.8 564 L1185.4 572 L1190.9 580 L1196.3 588 L1201.6 596 L1206.8 604 L1211.9 612 L1216.9 620 L1221.8 628 L1226.5 636 L1228.8 644 L1231.1 650M1065.8 268 L1067.5 276 L1069.1 284 L1070.9 292 L1072.7 300 L1074.6 308 L1076.6 316 L1078.7 324 L1080.8 332 L1082.8 340 L1084.6 348 L1086.3 356 L1087.6 364 L1088.9 372 L1090.6 380 L1093 388 L1095.9 396 L1099.4 404 L1103.4 412 L1107.2 420 L1110.6 428 L1113.8 436 L1116.6 444 L1119.1 452 L1121.7 460 L1124.5 468 L1127.3 476 L1130.5 484 L1134 492 L1137.8 500 L1142 508 L1146.8 516 L1152 524 L1157.6 532 L1163.4 540 L1169.3 548 L1175.1 556 L1180.7 564 L1186.2 572 L1191.6 580 L1197 588 L1202.2 596 L1207.3 604 L1212.3 612 L1217.3 620 L1222.1 628 L1226.7 636 L1229.1 644 L1231.4 650M1055.2 220 L1057.7 228 L1059.8 236 L1061.8 244 L1063.5 252 L1065.1 260 L1066.7 268 L1068.4 276 L1070 284 L1071.8 292 L1073.5 300 L1075.4 308 L1077.3 316 L1079.4 324 L1081.5 332 L1083.4 340 L1085.2 348 L1086.7 356 L1088.1 364 L1089.2 372 L1091 380 L1093.2 388 L1096.1 396 L1099.5 404 L1103.5 412 L1107.2 420 L1110.6 428 L1113.7 436 L1116.5 444 L1119.1 452 L1121.7 460 L1124.4 468 L1127.3 476 L1130.5 484 L1134 492 L1137.8 500 L1142 508 L1146.9 516 L1152.1 524 L1157.7 532 L1163.6 540 L1169.5 548 L1175.3 556 L1181 564 L1186.6 572 L1192 580 L1197.4 588 L1202.7 596 L1207.8 604 L1212.9 612 L1217.9 620 L1222.8 628 L1227.4 636 L1229.8 644 L1232.1 650M1065.2 252 L1066.8 260 L1068.4 268 L1070 276 L1071.7 284 L1073.4 292 L1075.1 300 L1077 308 L1078.9 316 L1080.9 324 L1083 332 L1085 340 L1086.8 348 L1088.4 356 L1089.8 364 L1091 372 L1092.7 380 L1095 388 L1097.9 396 L1101.3 404 L1105.3 412 L1109.1 420 L1112.5 428 L1115.7 436 L1118.5 444 L1121.2 452 L1123.8 460 L1126.6 468 L1129.5 476 L1132.7 484 L1136.2 492 L1139.9 500 L1144.1 508 L1148.9 516 L1154 524 L1159.5 532 L1165.2 540 L1171 548 L1176.8 556 L1182.3 564 L1187.8 572 L1193.2 580 L1198.5 588 L1203.7 596 L1208.7 604 L1213.7 612 L1218.6 620 L1223.5 628 L1228 636 L1230.3 644 L1232.6 650M1054.7 212 L1057.3 220 L1059.7 228 L1061.8 236 L1063.6 244 L1065.3 252 L1066.9 260 L1068.4 268 L1069.9 276 L1071.6 284 L1073.2 292 L1075 300 L1076.8 308 L1078.8 316 L1080.9 324 L1083.1 332 L1085.2 340 L1087.1 348 L1088.7 356 L1090.2 364 L1091.5 372 L1093.3 380 L1095.7 388 L1098.6 396 L1102.1 404 L1106 412 L1109.8 420 L1113.2 428 L1116.3 436 L1119.1 444 L1121.6 452 L1124.2 460 L1126.9 468 L1129.6 476 L1132.8 484 L1136.2 492 L1139.8 500 L1144 508 L1148.7 516 L1153.9 524 L1159.4 532 L1165.1 540 L1171 548 L1176.7 556 L1182.4 564 L1188 572 L1193.4 580 L1198.8 588 L1204.1 596 L1209.2 604 L1214.3 612 L1219.2 620 L1224.1 628 L1228.6 636 L1230.9 644 L1233.1 650M1070.2 260 L1071.8 268 L1073.3 276 L1074.9 284 L1076.5 292 L1078.2 300 L1079.9 308 L1081.8 316 L1083.8 324 L1085.9 332 L1087.8 340 L1089.6 348 L1091.2 356 L1092.6 364 L1093.8 372 L1095.5 380 L1097.8 388 L1100.7 396 L1104.1 404 L1108.1 412 L1111.9 420 L1115.4 428 L1118.6 436 L1121.6 444 L1124.3 452 L1127.1 460 L1129.9 468 L1132.8 476 L1136.1 484 L1139.5 492 L1143.2 500 L1147.4 508 L1152 516 L1157 524 L1162.4 532 L1168 540 L1173.6 548 L1179.2 556 L1184.6 564 L1190 572 L1195.2 580 L1200.4 588 L1205.5 596 L1210.5 604 L1215.4 612 L1220.2 620 L1225 628 L1229.4 636 L1231.7 644 L1233.9 650M1065.8 236 L1067.8 244 L1069.5 252 L1071.2 260 L1072.7 268 L1074.3 276 L1075.8 284 L1077.4 292 L1079 300 L1080.7 308 L1082.6 316 L1084.5 324 L1086.5 332 L1088.5 340 L1090.2 348 L1091.8 356 L1093.2 364 L1094.4 372 L1096.1 380 L1098.4 388 L1101.3 396 L1104.7 404 L1108.7 412 L1112.5 420 L1116 428 L1119.3 436 L1122.3 444 L1125.1 452 L1127.9 460 L1130.8 468 L1133.7 476 L1137 484 L1140.5 492 L1144.2 500 L1148.3 508 L1152.9 516 L1157.9 524 L1163.2 532 L1168.8 540 L1174.4 548 L1179.9 556 L1185.3 564 L1190.6 572 L1195.8 580 L1200.9 588 L1206 596 L1210.9 604 L1215.8 612 L1220.6 620 L1225.3 628 L1229.7 636 L1232 644 L1234.2 650M1072.9 260 L1074.4 268 L1076 276 L1077.5 284 L1079.1 292 L1080.7 300 L1082.4 308 L1084.2 316 L1086.1 324 L1088.1 332 L1090.1 340 L1091.8 348 L1093.4 356 L1094.7 364 L1095.9 372 L1097.7 380 L1100 388 L1102.8 396 L1106.2 404 L1110.1 412 L1113.8 420 L1117.4 428 L1120.6 436 L1123.7 444 L1126.5 452 L1129.3 460 L1132.1 468 L1135.1 476 L1138.3 484 L1141.7 492 L1145.4 500 L1149.5 508 L1154.1 516 L1159 524 L1164.3 532 L1169.8 540 L1175.4 548 L1180.8 556 L1186.2 564 L1191.5 572 L1196.7 580 L1201.8 588 L1206.9 596 L1211.8 604 L1216.7 612 L1221.5 620 L1226.2 628 L1230.7 636 L1232.9 644 L1235.2 650M1076.8 260 L1078.3 268 L1079.8 276 L1081.2 284 L1082.7 292 L1084.2 300 L1085.8 308 L1087.5 316 L1089.4 324 L1091.4 332 L1093.3 340 L1095.1 348 L1096.7 356 L1098.2 364 L1099.4 372 L1101.2 380 L1103.6 388 L1106.4 396 L1109.9 404 L1113.8 412 L1117.7 420 L1121.3 428 L1124.7 436 L1127.9 444 L1130.9 452 L1133.8 460 L1136.8 468 L1139.8 476 L1143 484 L1146.4 492 L1150 500 L1153.9 508 L1158.4 516 L1163.1 524 L1168.2 532 L1173.4 540 L1178.7 548 L1184 556 L1189.1 564 L1194.2 572 L1199.2 580 L1204.2 588 L1209 596 L1213.9 604 L1218.6 612 L1223.3 620 L1227.9 628 L1232.2 636 L1234.4 644 L1236.5 650M1082 268 L1083.3 276 L1084.7 284 L1086.1 292 L1087.4 300 L1088.9 308 L1090.5 316 L1092.3 324 L1094.2 332 L1096.1 340 L1097.8 348 L1099.3 356 L1100.7 364 L1102 372 L1103.7 380 L1106 388 L1108.8 396 L1112.2 404 L1116.2 412 L1120 420 L1123.7 428 L1127.1 436 L1130.4 444 L1133.5 452 L1136.6 460 L1139.7 468 L1142.7 476 L1146 484 L1149.4 492 L1153 500 L1157 508 L1161.4 516 L1166.1 524 L1171.1 532 L1176.3 540 L1181.5 548 L1186.6 556 L1191.7 564 L1196.7 572 L1201.7 580 L1206.6 588 L1211.4 596 L1216.2 604 L1220.9 612 L1225.5 620 L1230 628 L1234.2 636 L1236.4 644 L1238.5 650M1072.8 228 L1075.2 236 L1077.2 244 L1079 252 L1080.6 260 L1082 268 L1083.4 276 L1084.7 284 L1086 292 L1087.3 300 L1088.8 308 L1090.4 316 L1092.1 324 L1093.9 332 L1095.8 340 L1097.4 348 L1098.9 356 L1100.3 364 L1101.5 372 L1103.2 380 L1105.4 388 L1108.1 396 L1111.5 404 L1115.3 412 L1119.1 420 L1122.7 428 L1126.2 436 L1129.4 444 L1132.4 452 L1135.4 460 L1138.5 468 L1141.5 476 L1144.7 484 L1148.2 492 L1151.8 500 L1155.7 508 L1160.2 516 L1164.9 524 L1169.9 532 L1175.1 540 L1180.4 548 L1185.6 556 L1190.7 564 L1195.8 572 L1200.8 580 L1205.8 588 L1210.7 596 L1215.5 604 L1220.3 612 L1225 620 L1229.6 628 L1233.9 636 L1236.2 644 L1238.3 650M1069.4 212 L1072.5 220 L1075.3 228 L1077.6 236 L1079.6 244 L1081.3 252 L1083 260 L1084.4 268 L1085.9 276 L1087.4 284 L1088.9 292 L1090.4 300 L1092.1 308 L1094 316 L1096.1 324 L1098.4 332 L1100.6 340 L1102.7 348 L1104.6 356 L1106.3 364 L1107.8 372 L1109.8 380 L1112.2 388 L1115.1 396 L1118.4 404 L1122.3 412 L1126 420 L1129.5 428 L1132.9 436 L1136 444 L1138.9 452 L1141.8 460 L1144.5 468 L1147.3 476 L1150.1 484 L1153.2 492 L1156.4 500 L1160 508 L1164 516 L1168.3 524 L1173 532 L1177.9 540 L1182.9 548 L1187.9 556 L1192.9 564 L1197.9 572 L1202.9 580 L1208 588 L1213 596 L1218 604 L1222.9 612 L1227.7 620 L1232.5 628 L1236.9 636 L1239.3 644 L1241.5 650M1088.3 260 L1089.9 268 L1091.5 276 L1092.9 284 L1094.3 292 L1095.7 300 L1097.2 308 L1098.8 316 L1100.7 324 L1102.6 332 L1104.6 340 L1106.4 348 L1108 356 L1109.5 364 L1110.8 372 L1112.6 380 L1114.8 388 L1117.5 396 L1120.8 404 L1124.5 412 L1128.3 420 L1131.9 428 L1135.4 436 L1138.7 444 L1141.9 452 L1144.9 460 L1147.9 468 L1150.8 476 L1153.9 484 L1157 492 L1160.3 500 L1163.9 508 L1167.8 516 L1172 524 L1176.5 532 L1181.1 540 L1185.8 548 L1190.5 556 L1195.1 564 L1199.7 572 L1204.4 580 L1209 588 L1213.7 596 L1218.2 604 L1222.8 612 L1227.3 620 L1231.7 628 L1235.9 636 L1238.1 644 L1240.2 650M1079.5 228 L1082 236 L1084.2 244 L1086.1 252 L1087.8 260 L1089.3 268 L1090.7 276 L1092 284 L1093.3 292 L1094.5 300 L1096 308 L1097.6 316 L1099.5 324 L1101.5 332 L1103.6 340 L1105.5 348 L1107.3 356 L1108.9 364 L1110.5 372 L1112.5 380 L1115 388 L1118 396 L1121.5 404 L1125.5 412 L1129.6 420 L1133.5 428 L1137.3 436 L1141 444 L1144.5 452 L1147.8 460 L1151 468 L1154.2 476 L1157.4 484 L1160.7 492 L1164.1 500 L1167.8 508 L1171.8 516 L1176 524 L1180.4 532 L1185 540 L1189.5 548 L1194.1 556 L1198.5 564 L1202.9 572 L1207.3 580 L1211.7 588 L1216.1 596 L1220.4 604 L1224.6 612 L1228.8 620 L1232.8 628 L1236.7 636 L1238.6 644 L1240.5 650M1080.8 220 L1084.1 228 L1086.8 236 L1089.1 244 L1091 252 L1092.8 260 L1094.3 268 L1095.7 276 L1097 284 L1098.2 292 L1099.4 300 L1100.8 308 L1102.4 316 L1104.1 324 L1106.1 332 L1108.1 340 L1109.9 348 L1111.7 356 L1113.2 364 L1114.7 372 L1116.6 380 L1118.9 388 L1121.7 396 L1125 404 L1128.9 412 L1132.7 420 L1136.5 428 L1140.2 436 L1143.8 444 L1147.2 452 L1150.4 460 L1153.6 468 L1156.6 476 L1159.7 484 L1162.8 492 L1166 500 L1169.5 508 L1173.3 516 L1177.4 524 L1181.6 532 L1186 540 L1190.5 548 L1195 556 L1199.4 564 L1203.8 572 L1208.3 580 L1212.8 588 L1217.3 596 L1221.8 604 L1226.2 612 L1230.6 620 L1234.9 628 L1238.9 636 L1241.1 644 L1243.2 650M1091.3 236 L1093.8 244 L1096 252 L1097.8 260 L1099.3 268 L1100.5 276 L1101.5 284 L1102.4 292 L1103.1 300 L1103.9 308 L1104.9 316 L1106.1 324 L1107.4 332 L1108.8 340 L1110.2 348 L1111.5 356 L1112.7 364 L1113.9 372 L1115.6 380 L1117.8 388 L1120.7 396 L1124.2 404 L1128.3 412 L1132.5 420 L1136.8 428 L1141 436 L1145.2 444 L1149.2 452 L1153 460 L1156.7 468 L1160.1 476 L1163.5 484 L1166.9 492 L1170.3 500 L1173.9 508 L1177.6 516 L1181.5 524 L1185.5 532 L1189.5 540 L1193.6 548 L1197.7 556 L1201.6 564 L1205.7 572 L1209.7 580 L1213.9 588 L1218.1 596 L1222.4 604 L1226.6 612 L1230.9 620 L1235.2 628 L1239.3 636 L1241.6 644 L1243.8 650M1085.5 212 L1089.6 220 L1093.1 228 L1095.9 236 L1098.2 244 L1100.1 252 L1101.8 260 L1103.1 268 L1104.2 276 L1105.2 284 L1106 292 L1106.8 300 L1107.7 308 L1108.9 316 L1110.3 324 L1111.8 332 L1113.5 340 L1115 348 L1116.5 356 L1117.8 364 L1119 372 L1120.7 380 L1122.8 388 L1125.4 396 L1128.5 404 L1132.2 412 L1136 420 L1139.8 428 L1143.6 436 L1147.3 444 L1150.9 452 L1154.4 460 L1157.7 468 L1160.9 476 L1164 484 L1167.2 492 L1170.5 500 L1174 508 L1177.7 516 L1181.7 524 L1185.8 532 L1190.1 540 L1194.4 548 L1198.7 556 L1203 564 L1207.3 572 L1211.6 580 L1216 588 L1220.4 596 L1224.8 604 L1229.1 612 L1233.3 620 L1237.5 628 L1241.4 636 L1243.5 644 L1245.5 650M1092.4 220 L1095.8 228 L1098.5 236 L1100.6 244 L1102.3 252 L1103.7 260 L1104.8 268 L1105.7 276 L1106.4 284 L1107.1 292 L1107.6 300 L1108.4 308 L1109.5 316 L1110.8 324 L1112.4 332 L1114.2 340 L1115.9 348 L1117.6 356 L1119.2 364 L1120.8 372 L1122.8 380 L1125.3 388 L1128.3 396 L1131.8 404 L1135.9 412 L1140 420 L1144.3 428 L1148.6 436 L1152.8 444 L1156.8 452 L1160.6 460 L1164.2 468 L1167.6 476 L1170.9 484 L1174.1 492 L1177.4 500 L1180.8 508 L1184.3 516 L1188 524 L1191.7 532 L1195.6 540 L1199.5 548 L1203.4 556 L1207.2 564 L1211 572 L1214.9 580 L1218.9 588 L1222.9 596 L1226.9 604 L1230.9 612 L1234.8 620 L1238.7 628 L1242.3 636 L1244.3 644 L1246.1 650M1106.3 244 L1108.2 252 L1109.8 260 L1111 268 L1111.9 276 L1112.7 284 L1113.2 292 L1113.7 300 L1114.3 308 L1115.2 316 L1116.4 324 L1117.8 332 L1119.4 340 L1120.9 348 L1122.4 356 L1123.8 364 L1125.2 372 L1127 380 L1129.3 388 L1132 396 L1135.4 404 L1139.3 412 L1143.3 420 L1147.6 428 L1151.9 436 L1156.2 444 L1160.4 452 L1164.4 460 L1168.2 468 L1171.7 476 L1175.1 484 L1178.5 492 L1181.9 500 L1185.3 508 L1188.9 516 L1192.6 524 L1196.4 532 L1200.2 540 L1204 548 L1207.8 556 L1211.6 564 L1215.3 572 L1219.2 580 L1223 588 L1226.9 596 L1230.8 604 L1234.6 612 L1238.3 620 L1241.9 628 L1245.4 636 L1247.1 644 L1248.8 650M1107.8 244 L1109.8 252 L1111.5 260 L1112.8 268 L1113.9 276 L1114.9 284 L1115.6 292 L1116.2 300 L1117.1 308 L1118.3 316 L1119.8 324 L1121.5 332 L1123.4 340 L1125.2 348 L1126.9 356 L1128.6 364 L1130.1 372 L1132.1 380 L1134.4 388 L1137.2 396 L1140.5 404 L1144.3 412 L1148.2 420 L1152.4 428 L1156.5 436 L1160.7 444 L1164.8 452 L1168.5 460 L1172.1 468 L1175.4 476 L1178.4 484 L1181.5 492 L1184.5 500 L1187.6 508 L1190.9 516 L1194.3 524 L1197.8 532 L1201.4 540 L1205 548 L1208.6 556 L1212.3 564 L1216 572 L1219.9 580 L1223.8 588 L1227.8 596 L1231.8 604 L1235.8 612 L1239.7 620 L1243.5 628 L1247.1 636 L1249.1 644 L1250.9 650M1113.1 252 L1114.7 260 L1115.8 268 L1116.7 276 L1117.4 284 L1117.9 292 L1118.2 300 L1118.8 308 L1119.6 316 L1120.8 324 L1122.1 332 L1123.7 340 L1125.2 348 L1126.7 356 L1128.1 364 L1129.5 372 L1131.3 380 L1133.4 388 L1136.1 396 L1139.3 404 L1143.1 412 L1147 420 L1151.2 428 L1155.5 436 L1159.9 444 L1164.1 452 L1168.1 460 L1171.9 468 L1175.4 476 L1178.8 484 L1182.1 492 L1185.4 500 L1188.8 508 L1192.3 516 L1195.9 524 L1199.6 532 L1203.4 540 L1207.2 548 L1211 556 L1214.8 564 L1218.6 572 L1222.5 580 L1226.5 588 L1230.5 596 L1234.5 604 L1238.4 612 L1242.2 620 L1245.9 628 L1249.4 636 L1251.1 644 L1252.8 650M1097.9 212 L1102.7 220 L1106.8 228 L1110 236 L1112.6 244 L1114.7 252 L1116.5 260 L1117.8 268 L1118.9 276 L1119.8 284 L1120.4 292 L1120.9 300 L1121.7 308 L1122.7 316 L1124 324 L1125.5 332 L1127.2 340 L1128.9 348 L1130.5 356 L1132 364 L1133.5 372 L1135.4 380 L1137.5 388 L1140.2 396 L1143.4 404 L1147.1 412 L1151 420 L1155.1 428 L1159.3 436 L1163.6 444 L1167.8 452 L1171.7 460 L1175.3 468 L1178.7 476 L1181.8 484 L1184.9 492 L1187.9 500 L1191 508 L1194.2 516 L1197.5 524 L1200.9 532 L1204.3 540 L1207.8 548 L1211.3 556 L1214.8 564 L1218.4 572 L1222.1 580 L1225.9 588 L1229.8 596 L1233.7 604 L1237.5 612 L1241.2 620 L1244.9 628 L1248.4 636 L1250.2 644 L1251.9 650M1111.3 228 L1114.5 236 L1117 244 L1119 252 L1120.7 260 L1121.9 268 L1122.9 276 L1123.6 284 L1124.1 292 L1124.4 300 L1125 308 L1125.9 316 L1127.1 324 L1128.5 332 L1130.2 340 L1131.9 348 L1133.5 356 L1135.1 364 L1136.6 372 L1138.5 380 L1140.7 388 L1143.4 396 L1146.7 404 L1150.4 412 L1154.4 420 L1158.7 428 L1163.1 436 L1167.6 444 L1171.9 452 L1176 460 L1179.8 468 L1183.4 476 L1186.5 484 L1189.6 492 L1192.7 500 L1195.8 508 L1198.9 516 L1202.1 524 L1205.4 532 L1208.7 540 L1212 548 L1215.3 556 L1218.7 564 L1222.2 572 L1225.8 580 L1229.5 588 L1233.2 596 L1237 604 L1240.7 612 L1244.3 620 L1247.9 628 L1251.2 636 L1252.9 644 L1254.6 650M1106.6 212 L1111.8 220 L1116.1 228 L1119.5 236 L1122.1 244 L1124.2 252 L1126 260 L1127.2 268 L1128.1 276 L1128.8 284 L1129.2 292 L1129.4 300 L1129.9 308 L1130.7 316 L1131.8 324 L1133.2 332 L1134.9 340 L1136.5 348 L1138.1 356 L1139.7 364 L1141.2 372 L1143.1 380 L1145.2 388 L1147.9 396 L1151.1 404 L1154.8 412 L1158.7 420 L1163 428 L1167.5 436 L1172.1 444 L1176.6 452 L1180.8 460 L1184.6 468 L1188.2 476 L1191.3 484 L1194.3 492 L1197.3 500 L1200.2 508 L1203.2 516 L1206.1 524 L1209.1 532 L1212.2 540 L1215.2 548 L1218.3 556 L1221.4 564 L1224.6 572 L1228 580 L1231.5 588 L1235 596 L1238.6 604 L1242.1 612 L1245.6 620 L1249 628 L1252.2 636 L1253.8 644 L1255.3 650M1102.5 204 L1108.5 212 L1113.4 220 L1117.4 228 L1120.3 236 L1122.6 244 L1124.3 252 L1125.8 260 L1126.6 268 L1127.2 276 L1127.6 284 L1127.8 292 L1127.9 300 L1128.3 308 L1129.1 316 L1130.3 324 L1131.8 332 L1133.7 340 L1135.5 348 L1137.4 356 L1139.3 364 L1141.2 372 L1143.3 380 L1145.8 388 L1148.7 396 L1152.1 404 L1156 412 L1160.1 420 L1164.5 428 L1169.1 436 L1173.7 444 L1178.1 452 L1182.2 460 L1185.9 468 L1189.2 476 L1192.2 484 L1195 492 L1197.7 500 L1200.5 508 L1203.2 516 L1206 524 L1208.9 532 L1211.9 540 L1214.9 548 L1218 556 L1221.3 564 L1224.7 572 L1228.2 580 L1232 588 L1235.8 596 L1239.7 604 L1243.6 612 L1247.4 620 L1251 628 L1254.5 636 L1256.3 644 L1258 650M1110 212 L1115.2 220 L1119.5 228 L1122.7 236 L1125.2 244 L1127.1 252 L1128.8 260 L1129.8 268 L1130.6 276 L1131.1 284 L1131.3 292 L1131.4 300 L1131.8 308 L1132.5 316 L1133.6 324 L1135 332 L1136.7 340 L1138.5 348 L1140.2 356 L1141.9 364 L1143.6 372 L1145.6 380 L1147.9 388 L1150.7 396 L1154.1 404 L1157.9 412 L1162 420 L1166.6 428 L1171.3 436 L1176.1 444 L1180.9 452 L1185.3 460 L1189.3 468 L1192.9 476 L1196.1 484 L1199.2 492 L1202.1 500 L1205 508 L1207.8 516 L1210.6 524 L1213.4 532 L1216.2 540 L1219 548 L1221.8 556 L1224.7 564 L1227.7 572 L1230.9 580 L1234.2 588 L1237.6 596 L1241 604 L1244.4 612 L1247.7 620 L1251 628 L1254 636 L1255.6 644 L1257.1 650M1129.5 252 L1131.5 260 L1133 268 L1134.1 276 L1134.9 284 L1135.4 292 L1135.5 300 L1136 308 L1136.7 316 L1137.7 324 L1138.9 332 L1140.3 340 L1141.7 348 L1143 356 L1144.2 364 L1145.4 372 L1147 380 L1148.8 388 L1151.2 396 L1154.2 404 L1157.7 412 L1161.7 420 L1166.1 428 L1170.9 436 L1176 444 L1181 452 L1185.7 460 L1190.1 468 L1194.1 476 L1197.7 484 L1201.1 492 L1204.4 500 L1207.6 508 L1210.6 516 L1213.5 524 L1216.3 532 L1219.1 540 L1221.8 548 L1224.4 556 L1227.1 564 L1229.8 572 L1232.7 580 L1235.7 588 L1238.8 596 L1241.9 604 L1245.1 612 L1248.3 620 L1251.4 628 L1254.4 636 L1256 644 L1257.6 650M1135.6 260 L1136.7 268 L1137.4 276 L1137.8 284 L1138 292 L1137.9 300 L1138.1 308 L1138.7 316 L1139.7 324 L1141 332 L1142.7 340 L1144.3 348 L1146 356 L1147.6 364 L1149.2 372 L1151.1 380 L1153.3 388 L1155.9 396 L1159 404 L1162.6 412 L1166.6 420 L1171.1 428 L1175.8 436 L1180.8 444 L1185.6 452 L1190.1 460 L1194.3 468 L1198 476 L1201.2 484 L1204.3 492 L1207.2 500 L1210.1 508 L1212.9 516 L1215.6 524 L1218.4 532 L1221.1 540 L1223.8 548 L1226.6 556 L1229.4 564 L1232.3 572 L1235.4 580 L1238.6 588 L1241.9 596 L1245.3 604 L1248.6 612 L1251.7 620 L1254.8 628 L1257.7 636 L1259.1 644 L1260.5 650M1138.2 260 L1139.2 268 L1139.8 276 L1140.1 284 L1140.1 292 L1139.8 300 L1139.8 308 L1140.2 316 L1141 324 L1142.1 332 L1143.5 340 L1145 348 L1146.5 356 L1147.9 364 L1149.4 372 L1151.2 380 L1153.3 388 L1155.9 396 L1158.9 404 L1162.5 412 L1166.6 420 L1171.1 428 L1175.9 436 L1180.9 444 L1185.8 452 L1190.4 460 L1194.6 468 L1198.4 476 L1201.6 484 L1204.7 492 L1207.7 500 L1210.6 508 L1213.3 516 L1216.1 524 L1218.8 532 L1221.5 540 L1224.3 548 L1227 556 L1229.8 564 L1232.8 572 L1236 580 L1239.3 588 L1242.7 596 L1246.2 604 L1249.6 612 L1252.9 620 L1256.1 628 L1259.1 636 L1260.7 644 L1262.2 650M1117.6 212 L1123.3 220 L1127.9 228 L1131.3 236 L1134 244 L1136.1 252 L1137.8 260 L1138.8 268 L1139.5 276 L1139.9 284 L1139.9 292 L1139.7 300 L1139.8 308 L1140.3 316 L1141.2 324 L1142.4 332 L1144 340 L1145.6 348 L1147.2 356 L1148.8 364 L1150.4 372 L1152.3 380 L1154.5 388 L1157.1 396 L1160.3 404 L1164 412 L1168.1 420 L1172.7 428 L1177.5 436 L1182.6 444 L1187.6 452 L1192.2 460 L1196.4 468 L1200.1 476 L1203.4 484 L1206.4 492 L1209.3 500 L1212.1 508 L1214.8 516 L1217.4 524 L1220 532 L1222.6 540 L1225.2 548 L1227.8 556 L1230.5 564 L1233.3 572 L1236.3 580 L1239.5 588 L1242.7 596 L1246.1 604 L1249.3 612 L1252.5 620 L1255.6 628 L1258.5 636 L1260 644 L1261.4 650M1119.9 212 L1125.6 220 L1130.2 228 L1133.6 236 L1136.2 244 L1138.2 252 L1139.8 260 L1140.7 268 L1141.2 276 L1141.4 284 L1141.3 292 L1141 300 L1141 308 L1141.4 316 L1142.1 324 L1143.2 332 L1144.7 340 L1146.2 348 L1147.8 356 L1149.4 364 L1151 372 L1152.9 380 L1155.1 388 L1157.7 396 L1160.9 404 L1164.7 412 L1168.8 420 L1173.5 428 L1178.5 436 L1183.7 444 L1188.8 452 L1193.5 460 L1197.9 468 L1201.8 476 L1205.1 484 L1208.3 492 L1211.3 500 L1214.1 508 L1216.8 516 L1219.5 524 L1222.1 532 L1224.7 540 L1227.3 548 L1229.8 556 L1232.5 564 L1235.3 572 L1238.2 580 L1241.4 588 L1244.6 596 L1247.8 604 L1251 612 L1254.1 620 L1257.1 628 L1259.9 636 L1261.2 644 L1262.6 650M1126.9 220 L1131.7 228 L1135.2 236 L1137.9 244 L1140 252 L1141.6 260 L1142.6 268 L1143.1 276 L1143.3 284 L1143.2 292 L1142.8 300 L1142.8 308 L1143.2 316 L1144 324 L1145.1 332 L1146.7 340 L1148.2 348 L1149.9 356 L1151.5 364 L1153.2 372 L1155.2 380 L1157.5 388 L1160.2 396 L1163.4 404 L1167.2 412 L1171.4 420 L1176 428 L1181 436 L1186.2 444 L1191.3 452 L1196 460 L1200.2 468 L1204 476 L1207.1 484 L1210.1 492 L1212.9 500 L1215.5 508 L1217.9 516 L1220.3 524 L1222.7 532 L1225.1 540 L1227.5 548 L1229.9 556 L1232.4 564 L1235.1 572 L1238.1 580 L1241.2 588 L1244.4 596 L1247.7 604 L1251 612 L1254.2 620 L1257.3 628 L1260.2 636 L1261.7 644 L1263.2 650M1121.6 212 L1127.4 220 L1132.2 228 L1135.7 236 L1138.4 244 L1140.5 252 L1142.2 260 L1143.2 268 L1143.8 276 L1144.1 284 L1144.1 292 L1143.8 300 L1143.8 308 L1144.3 316 L1145.1 324 L1146.3 332 L1147.9 340 L1149.5 348 L1151.1 356 L1152.8 364 L1154.4 372 L1156.4 380 L1158.6 388 L1161.3 396 L1164.4 404 L1168.1 412 L1172.2 420 L1176.9 428 L1181.9 436 L1187.1 444 L1192.2 452 L1197 460 L1201.2 468 L1205 476 L1208.2 484 L1211.3 492 L1214.1 500 L1216.8 508 L1219.3 516 L1221.7 524 L1224.1 532 L1226.4 540 L1228.7 548 L1231.1 556 L1233.5 564 L1236.2 572 L1239 580 L1242 588 L1245.1 596 L1248.3 604 L1251.5 612 L1254.5 620 L1257.5 628 L1260.3 636 L1261.7 644 L1263 650M1143.1 260 L1144.1 268 L1144.7 276 L1145 284 L1144.9 292 L1144.6 300 L1144.6 308 L1145 316 L1145.8 324 L1147 332 L1148.6 340 L1150.1 348 L1151.7 356 L1153.3 364 L1155 372 L1156.9 380 L1159 388 L1161.7 396 L1164.8 404 L1168.5 412 L1172.6 420 L1177.2 428 L1182.2 436 L1187.4 444 L1192.5 452 L1197.3 460 L1201.6 468 L1205.4 476 L1208.6 484 L1211.6 492 L1214.5 500 L1217.2 508 L1219.7 516 L1222.1 524 L1224.5 532 L1226.9 540 L1229.2 548 L1231.6 556 L1234 564 L1236.7 572 L1239.5 580 L1242.5 588 L1245.6 596 L1248.8 604 L1252 612 L1255 620 L1258 628 L1260.8 636 L1262.2 644 L1263.5 650M1136.6 236 L1139.4 244 L1141.5 252 L1143.2 260 L1144.2 268 L1144.8 276 L1145.1 284 L1145.1 292 L1144.7 300 L1144.7 308 L1145.1 316 L1145.9 324 L1147.1 332 L1148.6 340 L1150.1 348 L1151.7 356 L1153.4 364 L1155 372 L1156.9 380 L1159.1 388 L1161.7 396 L1164.9 404 L1168.5 412 L1172.6 420 L1177.3 428 L1182.2 436 L1187.5 444 L1192.6 452 L1197.4 460 L1201.7 468 L1205.5 476 L1208.7 484 L1211.8 492 L1214.6 500 L1217.3 508 L1219.8 516 L1222.2 524 L1224.6 532 L1226.9 540 L1229.3 548 L1231.6 556 L1234.1 564 L1236.7 572 L1239.5 580 L1242.5 588 L1245.7 596 L1248.8 604 L1252 612 L1255 620 L1258 628 L1260.8 636 L1262.2 644 L1263.6 650M1198.2 556 L1202.5 564 L1206.7 572 L1211 580 L1215.4 588 L1219.7 596 L1224 604 L1228.3 612 L1232.4 620 L1236.5 628 L1240.4 636 L1242.4 644 L1244.3 650M1195.8 556 L1200.4 564 L1204.9 572 L1209.4 580 L1213.9 588 L1218.3 596 L1222.7 604 L1227.1 612 L1231.3 620 L1235.5 628 L1239.4 636 L1241.3 644 L1243.2 650M1194.2 556 L1198.8 564 L1203.4 572 L1208 580 L1212.6 588 L1217.1 596 L1221.6 604 L1226 612 L1230.2 620 L1234.4 628 L1238.3 636 L1240.3 644 L1242.3 650M1189.4 556 L1194.5 564 L1199.5 572 L1204.4 580 L1209.2 588 L1213.9 596 L1218.5 604 L1223 612 L1227.3 620 L1231.5 628 L1235.4 636 L1237.2 644 L1239.1 650M1184.4 556 L1189.4 564 L1194.5 572 L1199.5 580 L1204.5 588 L1209.5 596 L1214.4 604 L1219.3 612 L1224 620 L1228.8 628 L1233.2 636 L1235.6 644 L1237.8 650M1181.5 556 L1186.8 564 L1191.9 572 L1197 580 L1202.1 588 L1207.1 596 L1212 604 L1216.8 612 L1221.5 620 L1226.2 628 L1230.6 636 L1232.9 644 L1235.1 650M1178 556 L1183.5 564 L1188.9 572 L1194.2 580 L1199.5 588 L1204.6 596 L1209.6 604 L1214.6 612 L1219.5 620 L1224.2 628 L1228.7 636 L1231 644 L1233.3 650M1207.5 556 L1211.1 564 L1214.8 572 L1218.5 580 L1222.3 588 L1226.2 596 L1230 604 L1233.8 612 L1237.5 620 L1241.2 628 L1244.7 636 L1246.4 644 L1248.2 650M1211.3 556 L1215.1 564 L1218.9 572 L1222.8 580 L1226.7 588 L1230.6 596 L1234.5 604 L1238.3 612 L1242 620 L1245.5 628 L1248.8 636 L1250.4 644 L1252 650M1212.1 556 L1215.7 564 L1219.4 572 L1223.1 580 L1227 588 L1231 596 L1234.9 604 L1238.8 612 L1242.6 620 L1246.2 628 L1249.7 636 L1251.5 644 L1253.2 650M1216.5 556 L1219.7 564 L1223 572 L1226.4 580 L1229.9 588 L1233.5 596 L1237.1 604 L1240.7 612 L1244.2 620 L1247.6 628 L1250.7 636 L1252.4 644 L1254 650M1218.7 556 L1221.9 564 L1225.2 572 L1228.7 580 L1232.3 588 L1235.9 596 L1239.6 604 L1243.2 612 L1246.7 620 L1250.1 628 L1253.3 636 L1255 644 L1256.5 650M1225.4 556 L1228.2 564 L1231.2 572 L1234.3 580 L1237.6 588 L1240.9 596 L1244.3 604 L1247.7 612 L1250.9 620 L1254.1 628 L1257 636 L1258.5 644 L1259.9 650M1228.1 556 L1231.1 564 L1234.1 572 L1237.3 580 L1240.5 588 L1243.8 596 L1247 604 L1250.1 612 L1253.1 620 L1255.9 628 L1258.5 636 L1259.7 644 L1260.8 650M1131.3 444 L1134.4 452 L1137.4 460 L1140.5 468 L1143.6 476 L1146.8 484 L1150.3 492 L1153.9 500 L1157.8 508 L1162.2 516 L1166.8 524 L1171.8 532 L1176.9 540 L1182 548 L1187.1 556 L1192.1 564 L1197.1 572 L1202 580 L1206.8 588 L1211.6 596 L1216.3 604 L1220.9 612 L1225.5 620 L1229.9 628 L1234.1 636 L1236.2 644 L1238.3 650M1128.2 444 L1131.2 452 L1134.1 460 L1137.1 468 L1140.1 476 L1143.3 484 L1146.7 492 L1150.3 500 L1154.3 508 L1158.8 516 L1163.5 524 L1168.6 532 L1173.9 540 L1179.2 548 L1184.4 556 L1189.6 564 L1194.6 572 L1199.6 580 L1204.6 588 L1209.5 596 L1214.3 604 L1219.1 612 L1223.7 620 L1228.3 628 L1232.6 636 L1234.8 644 L1236.9 650M1122.8 444 L1125.6 452 L1128.4 460 L1131.3 468 L1134.2 476 L1137.5 484 L1140.9 492 L1144.6 500 L1148.8 508 L1153.4 516 L1158.4 524 L1163.7 532 L1169.3 540 L1174.9 548 L1180.5 556 L1185.9 564 L1191.3 572 L1196.6 580 L1201.8 588 L1207 596 L1212 604 L1217 612 L1221.9 620 L1226.7 628 L1231.2 636 L1233.6 644 L1235.9 650M1120.1 444 L1122.8 452 L1125.5 460 L1128.3 468 L1131.2 476 L1134.4 484 L1137.9 492 L1141.6 500 L1145.8 508 L1150.5 516 L1155.6 524 L1161 532 L1166.6 540 L1172.4 548 L1178 556 L1183.5 564 L1188.9 572 L1194.2 580 L1199.5 588 L1204.6 596 L1209.6 604 L1214.6 612 L1219.4 620 L1224.2 628 L1228.7 636 L1231 644 L1233.3 650M1172.2 444 L1176.8 452 L1181 460 L1185 468 L1188.6 476 L1191.8 484 L1194.9 492 L1197.9 500 L1200.9 508 L1203.9 516 L1206.9 524 L1209.9 532 L1213 540 L1216.1 548 L1219.2 556 L1222.4 564 L1225.6 572 L1229 580 L1232.6 588 L1236.1 596 L1239.8 604 L1243.3 612 L1246.8 620 L1250.2 628 L1253.4 636 L1255 644 L1256.6 650M1175.2 444 L1180 452 L1184.6 460 L1188.9 468 L1192.8 476 L1196.2 484 L1199.6 492 L1202.8 500 L1206 508 L1209 516 L1212.1 524 L1215.1 532 L1218.1 540 L1221.1 548 L1224 556 L1226.9 564 L1229.9 572 L1233 580 L1236.2 588 L1239.5 596 L1242.8 604 L1246 612 L1249.1 620 L1252.1 628 L1254.9 636 L1256.3 644 L1257.6 650M1181.2 444 L1186 452 L1190.4 460 L1194.5 468 L1198.1 476 L1201.2 484 L1204.1 492 L1206.9 500 L1209.5 508 L1212.1 516 L1214.7 524 L1217.2 532 L1219.8 540 L1222.3 548 L1225 556 L1227.6 564 L1230.5 572 L1233.5 580 L1236.8 588 L1240.1 596 L1243.5 604 L1246.9 612 L1250.2 620 L1253.5 628 L1256.6 636 L1258.2 644 L1259.8 650M1181.6 444 L1186.5 452 L1191.2 460 L1195.5 468 L1199.4 476 L1202.8 484 L1206.1 492 L1209.2 500 L1212.3 508 L1215.2 516 L1218.1 524 L1220.9 532 L1223.7 540 L1226.5 548 L1229.3 556 L1232 564 L1234.9 572 L1237.9 580 L1241.1 588 L1244.2 596 L1247.4 604 L1250.5 612 L1253.4 620 L1256.3 628 L1258.9 636 L1260.1 644 L1261.3 650"/>
<ellipse cx="1097.2" cy="236.0" rx="38.2" ry="6.5" transform="rotate(-17.9 1097.2 236.0)"/>
<ellipse cx="1099.4" cy="243.4" rx="39.1" ry="7.3" transform="rotate(-15.0 1099.4 243.4)"/>
<ellipse cx="1101.4" cy="251.7" rx="39.7" ry="6.3" transform="rotate(-12.7 1101.4 251.7)"/>
<ellipse cx="1103.3" cy="261.2" rx="40.0" ry="4.6" transform="rotate(-10.3 1103.3 261.2)"/>
<ellipse cx="1104.9" cy="271.2" rx="39.8" ry="6.5" transform="rotate(-8.3 1104.9 271.2)"/>
<ellipse cx="1105.9" cy="278.7" rx="39.3" ry="7.1" transform="rotate(-7.3 1105.9 278.7)"/>
<ellipse cx="1106.8" cy="285.8" rx="38.7" ry="7.8" transform="rotate(-6.5 1106.8 285.8)"/>
<ellipse cx="1107.6" cy="294.1" rx="37.8" ry="5.5" transform="rotate(-5.6 1107.6 294.1)"/>
<ellipse cx="1108.6" cy="303.2" rx="36.5" ry="5.8" transform="rotate(-6.7 1108.6 303.2)"/>
<ellipse cx="1109.4" cy="309.9" rx="35.6" ry="6.9" transform="rotate(-8.0 1109.4 309.9)"/>
<ellipse cx="1110.4" cy="316.1" rx="34.9" ry="7.2" transform="rotate(-9.4 1110.4 316.1)"/>
<ellipse cx="1111.6" cy="323.1" rx="34.2" ry="6.5" transform="rotate(-10.9 1111.6 323.1)"/>
<ellipse cx="1113.7" cy="333.0" rx="33.4" ry="6.3" transform="rotate(-12.2 1113.7 333.0)"/>
<ellipse cx="1115.6" cy="341.7" rx="33.2" ry="5.3" transform="rotate(-12.1 1115.6 341.7)"/>
<ellipse cx="1116.9" cy="347.7" rx="33.2" ry="4.3" transform="rotate(-11.6 1116.9 347.7)"/>
<ellipse cx="1118.2" cy="354.3" rx="33.3" ry="6.4" transform="rotate(-11.0 1118.2 354.3)"/>
<ellipse cx="1119.6" cy="362.0" rx="33.4" ry="6.0" transform="rotate(-10.4 1119.6 362.0)"/>
<ellipse cx="1121.3" cy="371.6" rx="33.6" ry="4.7" transform="rotate(-11.4 1121.3 371.6)"/>
<ellipse cx="1122.9" cy="378.5" rx="33.3" ry="6.6" transform="rotate(-13.9 1122.9 378.5)"/>
<ellipse cx="1124.5" cy="384.6" rx="33.0" ry="4.2" transform="rotate(-16.1 1124.5 384.6)"/>
<ellipse cx="1126.9" cy="392.0" rx="32.4" ry="4.6" transform="rotate(-19.1 1126.9 392.0)"/>
<ellipse cx="1129.7" cy="399.4" rx="31.6" ry="5.0" transform="rotate(-22.1 1129.7 399.4)"/>
<ellipse cx="1133.3" cy="407.8" rx="30.8" ry="6.3" transform="rotate(-25.1 1133.3 407.8)"/>
<ellipse cx="1136.6" cy="414.6" rx="30.5" ry="6.4" transform="rotate(-26.0 1136.6 414.6)"/>
<ellipse cx="1140.5" cy="422.5" rx="30.7" ry="4.7" transform="rotate(-26.5 1140.5 422.5)"/>
<ellipse cx="1145.4" cy="432.2" rx="31.5" ry="5.1" transform="rotate(-26.6 1145.4 432.2)"/>
<ellipse cx="1148.7" cy="438.8" rx="32.3" ry="4.5" transform="rotate(-26.5 1148.7 438.8)"/>
<ellipse cx="1152.9" cy="447.4" rx="33.8" ry="7.3" transform="rotate(-25.6 1152.9 447.4)"/>
<ellipse cx="1157.2" cy="456.5" rx="35.3" ry="5.6" transform="rotate(-24.5 1157.2 456.5)"/>
<ellipse cx="1160.4" cy="463.6" rx="36.3" ry="4.2" transform="rotate(-23.6 1160.4 463.6)"/>
<ellipse cx="1164.0" cy="472.1" rx="37.3" ry="6.2" transform="rotate(-22.6 1164.0 472.1)"/>
<ellipse cx="1167.0" cy="479.5" rx="37.6" ry="6.5" transform="rotate(-22.1 1167.0 479.5)"/>
<ellipse cx="1170.2" cy="487.3" rx="37.5" ry="7.6" transform="rotate(-22.2 1170.2 487.3)"/>
<ellipse cx="1173.9" cy="496.3" rx="37.0" ry="5.1" transform="rotate(-22.7 1173.9 496.3)"/>
<ellipse cx="1178.0" cy="505.9" rx="35.9" ry="4.4" transform="rotate(-23.9 1178.0 505.9)"/>
<ellipse cx="1181.7" cy="514.0" rx="34.6" ry="5.7" transform="rotate(-25.1 1181.7 514.0)"/>
<ellipse cx="1185.0" cy="520.9" rx="33.3" ry="4.4" transform="rotate(-25.8 1185.0 520.9)"/>
<ellipse cx="1189.5" cy="530.1" rx="31.4" ry="4.2" transform="rotate(-26.8 1189.5 530.1)"/>
<ellipse cx="1193.7" cy="538.3" rx="29.7" ry="7.6" transform="rotate(-27.4 1193.7 538.3)"/>
<ellipse cx="1197.1" cy="544.8" rx="28.4" ry="4.9" transform="rotate(-27.4 1197.1 544.8)"/>
<ellipse cx="1201.4" cy="553.3" rx="26.7" ry="6.0" transform="rotate(-27.2 1201.4 553.3)"/>
<ellipse cx="1205.8" cy="561.8" rx="25.1" ry="7.1" transform="rotate(-27.2 1205.8 561.8)"/>
<ellipse cx="1209.3" cy="568.5" rx="24.0" ry="5.3" transform="rotate(-27.3 1209.3 568.5)"/>
<ellipse cx="1213.0" cy="575.7" rx="22.8" ry="4.4" transform="rotate(-27.5 1213.0 575.7)"/>
<ellipse cx="1218.0" cy="585.3" rx="21.4" ry="7.0" transform="rotate(-27.7 1218.0 585.3)"/>
<ellipse cx="1222.7" cy="594.2" rx="20.3" ry="4.2" transform="rotate(-27.7 1222.7 594.2)"/>
<ellipse cx="1227.6" cy="603.5" rx="19.3" ry="6.9" transform="rotate(-27.4 1227.6 603.5)"/>
<ellipse cx="1231.6" cy="611.4" rx="18.5" ry="6.9" transform="rotate(-27.0 1231.6 611.4)"/>
<ellipse cx="1235.6" cy="619.2" rx="17.8" ry="5.0" transform="rotate(-26.5 1235.6 619.2)"/>
<ellipse cx="1238.7" cy="625.6" rx="17.2" ry="5.0" transform="rotate(-25.8 1238.7 625.6)"/>
<ellipse cx="1241.6" cy="631.8" rx="16.8" ry="5.4" transform="rotate(-23.5 1241.6 631.8)"/>
<ellipse cx="1244.7" cy="640.8" rx="16.9" ry="6.7" transform="rotate(-15.4 1244.7 640.8)"/>
</g>
<path d="M928 75 L929.1 75.9 L930.5 77.2 L932.3 78.6 L934.1 80.3 L936 82 L938 84 L940.3 86.3 L942.6 88.6 L944.6 90.6 L946 92 L952.2 92 L961.4 92 L971.6 92 L980.8 92 L987 92 L987.6 90.6 L988.5 88.6 L989.5 86.4 L990.4 84.4 L991 83 L992.1 82.8 L993.7 82.4 L995.5 82.1 L997.3 81.9 L999 82 L1000.6 82.5 L1002.2 83.4 L1003.8 84.4 L1005.1 85.4 L1006 86 L1007.4 85.8 L1009.3 85.5 L1011.6 85.2 L1013.9 84.7 L1016 84 L1018 83 L1020.1 81.6 L1022.1 80.2 L1023.8 78.9 L1025 78 L1025.2 81.5 L1025.4 86.5 L1025.7 92.3 L1025.9 98.7 L1026 105 L1025.9 112 L1025.5 120.1 L1025.2 128.1 L1024.8 135.1 L1024.6 140 L1026.2 142.4 L1028.3 145.9 L1030.9 149.9 L1034.2 154.1 L1038 158 L1042.8 161.7 L1048.4 165.4 L1054.5 169.1 L1060.5 172.7 L1066 176 L1070.9 179.1 L1075.6 182 L1080.1 184.7 L1084.3 187.2 L1088.5 189.5 L1092.5 191.5 L1096.4 193.1 L1100.1 194.6 L1103.7 196.2 L1107 198 L1110.1 200.1 L1113 202.4 L1115.8 204.7 L1118.4 207.3 L1121 210 L1123.6 212.9 L1126.1 216 L1128.6 219.3 L1130.9 222.6 L1133 226 L1134.9 229.2 L1136.6 232.4 L1138.2 235.7 L1139.7 239.5 L1141 244 L1142.3 249.4 L1143.6 255.5 L1144.6 262 L1145.5 268.9 L1146 276 L1146 283.7 L1145.5 292 L1144.8 300.4 L1144.2 308.3 L1144 315 L1144.2 320.1 L1144.7 324.1 L1145.4 327.6 L1146.2 331 L1147 335 L1147.9 339.8 L1148.9 344.9 L1150 350.1 L1151 355.2 L1152 360 L1152.8 364.3 L1153.5 368.4 L1154.3 372.2 L1155 376.1 L1156 380 L1157.1 384 L1158.4 388.1 L1159.8 392.1 L1161.2 396.1 L1162.7 400 L1164.2 403.9 L1165.7 407.8 L1167.3 411.6 L1169 415.2 L1170.7 418.7 L1172.5 421.9 L1174.3 424.9 L1176.1 427.7 L1178 430.5 L1180 433.4 L1182.1 436.4 L1184.3 439.4 L1186.6 442.4 L1188.8 445.2 L1190.8 448 L1192.5 450.4 L1194.1 452.5 L1195.6 454.6 L1197.1 457 L1198.8 460 L1200.7 463.7 L1202.8 467.8 L1204.9 472.3 L1207 477.1 L1209 482 L1210.9 487.2 L1212.7 492.8 L1214.5 498.5 L1216.3 504.3 L1218 510 L1219.6 515.5 L1221.2 520.9 L1222.8 526.3 L1224.4 531.8 L1226 537.5 L1227.7 543.4 L1229.4 549.6 L1231.2 555.8 L1233.1 562 L1235 568 L1237.1 573.8 L1239.4 579.6 L1241.6 585.2 L1243.9 590.7 L1246 596 L1248 601.2 L1249.9 606.4 L1251.8 611.4 L1253.5 616 L1255 620 L1256.3 623.5 L1257.5 626.6 L1258.6 629.3 L1259.4 631.4 L1260 633 L1258.9 634 L1257.3 635.3 L1255.4 636.9 L1253.1 638.5 L1250.5 640 L1247.1 641.4 L1242.9 642.9 L1238.5 644.4 L1234.7 645.6 L1232 646.5 L1230.9 644.4 L1229.4 641.5 L1227.5 638 L1225.4 634.1 L1223 630 L1220.4 625.6 L1217.4 620.8 L1214.2 615.6 L1210.9 610.3 L1207.5 605 L1204 599.6 L1200.5 594.1 L1196.8 588.5 L1192.9 582.8 L1189 577 L1184.9 571.1 L1180.7 565 L1176.3 559 L1171.9 552.9 L1167.6 547 L1163.2 541.3 L1158.7 535.7 L1154.2 530.1 L1149.9 524.6 L1146 519 L1142.5 513.4 L1139.3 507.8 L1136.4 502.3 L1133.6 496.7 L1131 491 L1128.5 485.2 L1126.3 479.1 L1124.2 473.1 L1122.2 467.4 L1120.5 462 L1119 457.1 L1117.8 452.4 L1116.7 448 L1115.7 443.9 L1114.5 440 L1113.3 436.5 L1112.1 433.3 L1110.8 430.3 L1109.5 427.3 L1108 424 L1106.3 420.4 L1104.4 416.5 L1102.4 412.6 L1100.5 408.7 L1098.6 405 L1096.7 401.2 L1094.7 397.2 L1092.8 393.5 L1091.2 390.3 L1090 388 L1089.9 392.6 L1089.7 398.9 L1089.5 406.5 L1089.3 414.7 L1089 423 L1088.7 431.8 L1088.4 441.6 L1088.1 451.6 L1087.8 461.2 L1087.4 470 L1087 477.6 L1086.6 484.6 L1086.1 491.1 L1085.6 497.5 L1085 504 L1084.2 511.2 L1083.3 518.9 L1082.4 526.2 L1081.6 532.5 L1081 537 L1081.7 539.2 L1082.6 542.1 L1083.7 545.8 L1084.9 550.7 L1086 557 L1087.2 565.2 L1088.4 575.1 L1089.7 586 L1090.9 597.2 L1092 608 L1092.9 617.7 L1093.7 627 L1094.4 636.5 L1095 647.2 L1095.5 660 L1096 676.9 L1096.3 697.2 L1096.6 718 L1096.8 736.3 L1097 749 L1077.2 749 L1048.1 749 L1015.9 749 L986.8 749 L967 749 L966.5 741.9 L965.9 731.3 L965.1 719.7 L964.5 709.1 L964 702 L963.4 709.1 L962.5 719.7 L961.5 731.3 L960.6 741.9 L960 749 L939.8 749 L910 749 L877 749 L847.2 749 L827 749 L827.4 745.8 L828 741.4 L828.6 736.1 L829.3 730.2 L830 724 L830.6 717.4 L831.3 710.1 L832 702.4 L832.7 694.7 L833.5 687 L834.4 679.5 L835.5 671.9 L836.6 664.2 L837.6 656.6 L838.5 649 L839.2 641.6 L839.8 634.4 L840.3 627.1 L840.7 619.4 L841 611 L841 601.3 L840.8 590.3 L840.6 579.3 L840.6 569.1 L841 561 L842 555.3 L843.4 551.2 L845 548.2 L846.6 545.7 L848 543 L849.3 540 L850.6 537.2 L851.8 534.6 L852.8 532.5 L853.5 531 L853.6 527.4 L853.7 522.4 L853.8 516.6 L853.9 510.6 L854 505 L854.1 499.8 L854.3 494.6 L854.4 489.5 L854.5 484.6 L854.5 480 L854.4 475.8 L854.3 471.8 L854.1 468.1 L853.8 464.5 L853.5 461 L853.2 457.7 L852.8 454.5 L852.3 451.5 L851.7 448.3 L851 445 L850 441.4 L848.9 437.7 L847.6 433.9 L846.3 430 L845 426 L843.8 422 L842.7 418.1 L841.5 414 L840.3 409.7 L839 405 L837.6 399.8 L836 394.3 L834.4 388.5 L832.9 382.6 L831.6 377 L830.4 371.1 L829.3 364.8 L828.4 358.8 L827.6 353.7 L827 350 L826.8 350 L826.6 350 L826.4 350 L826.2 350 L826 350 L824.4 354.1 L822.1 360 L819.4 366.6 L816.9 372.7 L815 377 L813.8 378.9 L813 379.2 L812.4 378.8 L811.7 378.8 L810.8 380 L809.5 382.7 L808.1 386.3 L806.5 390.5 L804.9 394.7 L803.4 398.7 L802 402.4 L800.6 406.2 L799.2 409.9 L797.6 413.7 L795.9 417.4 L793.9 421.2 L791.6 424.9 L789.2 428.7 L786.9 432.4 L784.7 436 L782.6 439.5 L780.5 443 L778.5 446.4 L776.7 449.8 L775.3 453 L774.3 456.1 L773.6 459 L773.2 461.8 L772.8 464.8 L772.5 468 L772.2 471.5 L772 475.1 L771.8 478.9 L771.7 482.7 L771.6 486.5 L771.5 490.1 L771.5 493.6 L771.5 497.1 L771.3 500.9 L771 505 L770.5 509.4 L769.9 514.1 L769.2 519.1 L768.2 524.4 L767 530 L765.4 536.2 L763.6 542.8 L761.5 549.7 L759.3 556.7 L757 563.5 L754.5 570.3 L751.8 577.1 L748.9 583.9 L746.1 590.5 L743.5 597 L741 603.2 L738.7 609.3 L736.4 615.2 L734.2 621.1 L732 627 L729.9 633 L727.7 639.1 L725.7 645.2 L723.8 651.2 L722 657 L720.2 662.7 L718.5 668.3 L716.9 673.8 L715.7 679 L715 684 L715.1 688.9 L715.8 693.8 L716.8 698.4 L717.8 702.2 L718.4 705 L711.8 704.2 L702.1 703.1 L691.3 701.9 L681.6 700.8 L675 700 L675.5 696 L676.1 690.3 L676.9 683.7 L677.7 676.7 L678.4 670 L679.1 663.6 L679.7 657 L680.4 650.4 L681 643.7 L681.7 637 L682.4 630.3 L683 623.6 L683.7 616.9 L684.3 610.2 L685 603.5 L685.6 596.8 L686.3 590.1 L686.9 583.4 L687.6 576.7 L688.4 570 L689.3 563.1 L690.3 556 L691.3 549 L692.4 542.6 L693.4 537 L694.5 532.5 L695.7 528.9 L696.8 525.7 L697.9 522.9 L698.7 520 L699.3 517.3 L699.6 514.9 L699.9 512.5 L700.2 510 L700.6 507 L701.2 503.3 L702 499.2 L702.7 494.9 L703.5 490.6 L704.3 486.5 L705 482.6 L705.7 478.9 L706.4 475.2 L707.2 471.6 L708 468 L708.8 464.5 L709.7 461.1 L710.6 457.7 L711.6 454.4 L712.7 451 L714 447.6 L715.5 444.3 L717 440.9 L718.6 437.6 L720.2 434.2 L721.9 430.9 L723.6 427.6 L725.4 424.3 L727.1 420.9 L728.6 417.4 L729.9 413.8 L731.1 410.1 L732.2 406.3 L733.2 402.5 L734.2 398.7 L735.2 394.9 L736.2 391.2 L737.1 387.4 L738 383.7 L738.9 380 L739.7 376.8 L740.4 374 L741.2 371 L742.1 367.4 L743.4 362.6 L745.1 356.1 L747.2 348.4 L749.5 340 L751.8 331.6 L754 324 L756.2 317.1 L758.6 310.5 L760.8 304.2 L762.9 298 L764.5 292 L765.5 286.1 L766.1 280.3 L766.5 274.7 L766.9 269.4 L767.5 264.6 L768.3 260.3 L769.2 256.4 L770.2 252.9 L771.2 249.5 L772.4 246 L773.7 242.5 L775.1 239.1 L776.6 235.7 L778.2 232.4 L780 229 L781.9 225.6 L784 222.1 L786.1 218.7 L788.5 215.3 L791 212 L793.7 208.8 L796.5 205.8 L799.5 202.8 L802.7 199.8 L806 197 L809.5 194.3 L813.1 191.8 L816.9 189.2 L820.8 186.7 L824.8 184 L829 181.1 L833.4 178.1 L837.9 175.1 L842.5 172 L847 169 L851.5 166 L856.1 163 L860.7 160.1 L865.2 157.1 L869.6 154.3 L873.9 151.5 L878.2 148.9 L882.3 146.2 L886.3 143.6 L890 141 L893.5 138.3 L896.7 135.5 L899.8 132.8 L902.5 130.2 L905 128 L907.1 126.4 L908.8 125.2 L910.2 124.2 L911.6 122.9 L913 121 L914.5 118.4 L915.9 115.3 L917.3 111.9 L918.6 108.4 L919.7 105 L920.6 101.5 L921.2 98 L921.7 94.4 L922.3 90.9 L923 87.7 L924 84.7 L925.1 81.7 L926.3 78.9 L927.3 76.7Z" stroke="#10ff8c" stroke-width="6.5"/>
</g>
<g clip-path="url(#cg)">
<path d="M1008 89L1023.5 81.5L1024 103L1008 102Z" fill="#33283a"/>
<path d="M930.5 79L940 88.5L940 93L930 93Z" fill="#1f5f86"/>
<path d="M1008 92.5L1025 88M1008 97.5L1025 94M1008 102.5L1025 100M1008 87.5L1025 82M1011.5 84V104M1015.5 82V104M1019.5 80V104M1023 79V104M930 83.5L941 87.5M930 88.5L941 91.5M933.5 78V94M937 80V94" stroke="#10ff8c" stroke-width="1.5" fill="none"/>
<path d="M951 95.2H986" stroke="#1d4f52" stroke-width="2.4" stroke-dasharray="1.5 2.3" fill="none"/>
<path d="M988 92L990 85L993.5 82.5L996 84.5L998.5 81.5L1002 83.5L1005 86L1007.5 88.5L1007 104L988 104Z" fill="#1cff8e"/>
</g>
<g stroke="#d9fff0" stroke-width="1.6" stroke-linecap="round" fill="none" opacity="0.85"><path d="M844 254l4-7M822 237l3-5M928 301l6 2M1030 300l3 8M957 180l2 7M996 184l1 7M1112 228l3 6M737 492l-2 9M1147 470l4 9M1183 520l5 12"/></g>
<defs>
<linearGradient id="cubeg" x1="0" y1="0" x2="0" y2="1"><stop offset="0" stop-color="#ababab"/><stop offset="1" stop-color="#979797"/></linearGradient>
<filter id="soft" x="-10%" y="-10%" width="120%" height="120%"><feGaussianBlur stdDeviation="0.35"/></filter>
</defs>
<g filter="url(#soft)">
<path d="M1743.8 76L1757.6 75.1V124.1L1743.8 116.5z" fill="url(#cubeg)"/>
<path d="M1760.1 75.1L1802 76V121L1760.1 124.9z" fill="url(#cubeg)"/>
<text x="1781.8" y="103.3" font-family="Liberation Sans, sans-serif" font-weight="bold" font-size="8.8" letter-spacing="0.5" fill="#50555f" text-anchor="middle">FRONT</text>
<text transform="translate(1750.3 102.3) scale(0.3 1) skewY(-3)" font-family="Liberation Sans, sans-serif" font-weight="bold" font-size="8.6" letter-spacing="0.5" fill="#747982" text-anchor="middle">LEFT</text>
</g>
<g font-family="Liberation Sans, sans-serif" font-weight="bold" font-size="9.3">
<rect x="26" y="711.3" width="1.2" height="12.6" fill="#00ff00"/>
<rect x="26" y="724.2" width="5.8" height="1.3" fill="#0000ff"/>
<rect x="28" y="724" width="11" height="1" fill="#ff0000"/>
<text x="23.8" y="707.2" fill="#00ff00">y</text>
<text x="31.2" y="723.8" fill="#0000ff">z</text>
<text x="38.2" y="722" fill="#ff0000">x</text>
</g>

</svg>
<svg id="icons" width="1831" height="40" viewBox="0 0 1831 40">
<defs>
<pattern id="chk" x="0.2" y="1" width="4" height="4" patternUnits="userSpaceOnUse"><rect width="4" height="4" fill="#f0f0f0"/><rect width="2" height="2" fill="#1a1a1a"/><rect x="2" y="2" width="2" height="2" fill="#1a1a1a"/></pattern>
<g id="sep"><rect x="-0.5" y="21" width="1" height="16" fill="#8a8a8a"/><rect x="-1.5" y="25" width="3" height="8.5" rx="1" fill="#8a8a8a"/></g>
</defs>
<use href="#sep" x="5.5"/><use href="#sep" x="110.5"/><use href="#sep" x="254.5"/><use href="#sep" x="398.5"/><use href="#sep" x="542"/><use href="#sep" x="629.5"/><use href="#sep" x="659.5"/><use href="#sep" x="727.5"/>
<!-- A key -->
<path d="M14.5 21.5h12.5q1 0 1 1v11.5l-1.5 2.5h-12.5q-1.5 0-1.5-1.5v-10z" fill="#2f7f9f"/>
<path d="M12.2 24.2l2.4-2.7v12l-2.4 2.6z" fill="#79c8e2"/>
<rect x="14.5" y="21.3" width="13.3" height="12.4" rx="1" fill="#3ea5cb"/>
<text x="20.8" y="30.6" font-family="Liberation Sans, sans-serif" font-weight="bold" font-size="8.6" fill="#ffffff" text-anchor="middle">A</text>
<!-- frame icon -->
<g stroke="#9a9a9a" stroke-width="1.2" fill="none"><path d="M32.5 24.5h13M32.5 34.5h13M34.5 22.5v13.5M43.5 22.5v13.5"/></g>
<g fill="#a4a4a4"><circle cx="34.5" cy="24.5" r="1.2"/><circle cx="43.5" cy="24.5" r="1.2"/><circle cx="34.5" cy="34.5" r="1.2"/><circle cx="43.5" cy="34.5" r="1.2"/></g>
<rect x="35.6" y="25.6" width="6.8" height="7.8" fill="#38a9b9"/>
<!-- dim square -->
<rect x="51" y="22.3" width="14" height="12.7" fill="#4b535d"/><path d="M52 27h9.5v7" stroke="#3f4650" stroke-width="0.8" fill="none" stroke-dasharray="1 1"/>
<!-- dim pie -->
<circle cx="77" cy="28.8" r="6.8" fill="#575757"/><path d="M77 28.8L72.2 24a6.8 6.8 0 0 0 -1.9 6z" fill="#6a4d58"/><path d="M77 28.8L72.2 24a6.8 6.8 0 0 1 9-0.6z" fill="#4f6a58"/><path d="M77 28.8L70.3 30a6.8 6.8 0 0 0 3 4.6z" fill="#4f5878"/>
<!-- dim stack -->
<rect x="92.5" y="21.5" width="11" height="9" fill="#4d6a5c"/><rect x="91" y="23" width="11" height="9" fill="#5a5470"/><rect x="89.5" y="24.5" width="11" height="9" fill="#4a5a78"/><rect x="88.2" y="26" width="11.5" height="10" fill="#49636f"/><path d="M89.5 34.5l2.5-3 1.5 1.5 2.5-3.5 2.5 3v2z" fill="#5f7a84"/>
<!-- camera -->
<g fill="#c9c9c9"><rect x="119" y="26" width="10.2" height="6.6" rx="0.8"/><path d="M129.6 29.2l3.6-3.9v7.9z"/>
<!-- cam lock -->
<path d="M138.5 24.2h9v3.5h-3.2v-0.6a2.6 2.6 0 0 0 -5.2 0v0.6h-0.6z"/><path d="M148 26l3.8-3.6v8z"/>
<!-- cam gear -->
<path d="M157.5 24.2h9v3.8h-2.2a3.4 3.4 0 0 0 -6.4 0h-0.4z"/><path d="M167 26l3.8-3.6v8z"/>
<!-- bookmark -->
<path d="M180 23h6.5v11.2l-3.25-2.8-3.25 2.8z"/></g>
<g fill="#38a9b9"><rect x="138.2" y="29.4" width="6.2" height="5.4" rx="0.6"/></g>
<path d="M139.6 29.6v-1.6a1.7 1.7 0 0 1 3.4 0v1.6" stroke="#38a9b9" stroke-width="1.1" fill="none"/>
<rect x="140.8" y="31" width="1" height="2.2" fill="#444"/>
<circle cx="161.2" cy="31" r="2.6" fill="none" stroke="#38a9b9" stroke-width="1.6"/><circle cx="161.2" cy="31" r="4" fill="none" stroke="#38a9b9" stroke-width="1.3" stroke-dasharray="1.4 1.74"/>
<!-- image plane -->
<path d="M200 28.5l4.8-5.3v10.3l-4.8 2.5z" fill="#38a9b9"/><path d="M197.5 32h3v1.3h-4.2zM195.6 34.6h4.4v1.3h-5.6zM205.5 31h3l-0.8 1.3h-2.2zM204 33.4h3.6l-1.6 2.5h-3z" fill="#c9c9c9"/>
<!-- arrows + magnifier -->
<path d="M220.5 22l2.2 2.6h-1.5v4h-3.6v1.5l-3-2.2 3-2.2v1.5h2.2v-2.6h-1.5z" fill="#dcdcdc"/>
<circle cx="224" cy="29.8" r="2.9" fill="none" stroke="#38a9b9" stroke-width="1.4"/><path d="M222 32l-2.8 3.4" stroke="#38a9b9" stroke-width="1.6" stroke-linecap="round"/>
<!-- pencil -->
<path d="M244 22.8l2.6 2.6-8.4 8.6-2.6-2.6z" fill="#38a9b9" stroke="#38a9b9" stroke-width="0.8" stroke-linejoin="round"/><path d="M235.2 32l2.6 2.6-3.8 1.3z" fill="#c9c9c9"/>
<!-- grid -->
<path d="M265.5 24.5h10v10h-10zM268.8 24.5v10M272.2 24.5v10M265.5 27.8h10M265.5 31.2h10" stroke="#dedede" stroke-width="1" fill="none"/>
<!-- film gate -->
<rect x="282.5" y="23.5" width="13" height="11" fill="#3a3a3a" stroke="#d4d4d4" stroke-width="1"/><path d="M283 25.3h12M283 32.7h12" stroke="#d4d4d4" stroke-width="1.2" stroke-dasharray="1.6 1"/><rect x="283.6" y="26.3" width="10.8" height="5.4" fill="#3a3a3a"/>
<!-- resolution gate -->
<rect x="301.5" y="23.5" width="13" height="11" fill="#3a3a3a" stroke="#d4d4d4" stroke-width="1"/><circle cx="308" cy="29" r="3" fill="#38a9b9"/>
<!-- dim toggle -->
<rect x="318.5" y="20.5" width="17" height="17" fill="#3d3d3d" stroke="#363636"/><rect x="320.5" y="23" width="13" height="12" fill="#4e4e4e"/><circle cx="327" cy="29" r="4" fill="#3b3b3b"/>
<!-- safe action -->
<rect x="339.5" y="23.5" width="13" height="11" fill="#3a3a3a" stroke="#d4d4d4" stroke-width="1"/><path d="M340.5 29h11" stroke="#38a9b9" stroke-width="1.6" stroke-dasharray="1 0.8"/><path d="M346 24v10" stroke="#38a9b9" stroke-width="1.6" stroke-dasharray="1.2 1"/><rect x="344.6" y="27.6" width="2.8" height="2.8" fill="#3a3a3a"/>
<!-- safe title -->
<rect x="358.5" y="23.5" width="13" height="11" fill="#3a3a3a" stroke="#d4d4d4" stroke-width="1"/><circle cx="367.5" cy="27" r="2.3" fill="#38a9b9"/><path d="M360.2 33l2.8-4.6 2.8 4.6z" fill="#38a9b9"/>
<!-- T -->
<rect x="377.5" y="23.5" width="13" height="11" fill="#3a3a3a" stroke="#d4d4d4" stroke-width="1"/>
<text x="384" y="33.4" font-family="Liberation Serif, serif" font-weight="bold" font-size="12.5" fill="#38a9b9" stroke="#38a9b9" stroke-width="0.4" text-anchor="middle">T</text>
<!-- wire cube -->
<g fill="none" stroke="#d2d2d2" stroke-width="1.1" stroke-linejoin="round"><path d="M414.5 22.6l6.2 3.1v7l-6.2 3.2-6.2-3.2v-7z"/><path d="M408.3 25.7l6.2 3.1 6.2-3.1M414.5 28.8v7.1" /></g>
<path d="M414.5 22.5v6M408.2 33l6.3-4 6.3 4" stroke="#8a8a8a" stroke-width="0.6" fill="none" stroke-dasharray="1 1"/>
<!-- shaded cube (active) -->
<rect x="424" y="20" width="18" height="18" fill="#5285b5"/>
<path d="M433 22.2l6.8 3.3-6.8 3.4-6.8-3.4z" fill="#86e0ea"/><path d="M426.2 25.5l6.8 3.4v7.6l-6.8-3.4z" fill="#43bccd"/><path d="M439.8 25.5l-6.8 3.4v7.6l6.8-3.4z" fill="#5fd0de"/>
<path d="M433 22.2l6.8 3.3v7.6l-6.8 3.4-6.8-3.4v-7.6zM426.2 25.5l6.8 3.4 6.8-3.4M433 28.9v7.6" fill="none" stroke="#d8f4f8" stroke-width="0.8" stroke-linejoin="round"/>
<!-- half checker sphere -->
<circle cx="452.3" cy="29" r="6.3" fill="url(#chk)"/><path d="M453 22.7a6.3 6.3 0 0 0 0 12.6z" fill="#c9c9c9"/>
<!-- wire on shaded cube -->
<path d="M471.5 25.2l4.6 2.2v5l-4.6 2.3-4.6-2.3v-5z" fill="#43bccd"/><path d="M471.5 25.2l4.6 2.2-4.6 2.3-4.6-2.3z" fill="#86e0ea"/>
<g fill="none" stroke="#c4c4c4" stroke-width="1.1" stroke-linejoin="round"><path d="M471.5 22.3l6.5 3.3v7.4l-6.5 3.3-6.5-3.3v-7.4z"/><path d="M465 25.6l6.5 3.2 6.5-3.2M471.5 28.8v7.5" stroke-width="0.7"/></g>
<!-- checker sphere -->
<circle cx="490.2" cy="29" r="6.3" fill="url(#chk)"/>
<!-- light bulb -->
<g fill="#d4d4d4"><circle cx="509" cy="27.6" r="3.5"/><path d="M507 30h4l-0.6 3.4h-2.8z"/><rect x="507.8" y="33.8" width="2.4" height="1.6" rx="0.5"/><circle cx="509" cy="22.2" r="0.9"/><circle cx="504.4" cy="24" r="0.8"/><circle cx="513.6" cy="24" r="0.8"/><circle cx="502.8" cy="28.4" r="0.8"/><circle cx="515.2" cy="28.4" r="0.8"/></g>
<!-- teal ball -->
<circle cx="530.5" cy="28" r="4.6" fill="#38a9b9"/><path d="M521.5 30.2l5 3.4M523.2 28.8l4 2.8M521.6 32.4l3.6 2" stroke="#c9c9c9" stroke-width="1.1"/>
<!-- shadows -->
<path d="M551.5 32.2l8-1.6 4.8 2.8-8 2z" fill="#2e8a98"/><path d="M553 33.5l8-2M555.5 35l7-2M554 31.6l5 3.2M557 31l5 3" stroke="#4cc3d2" stroke-width="0.5"/>
<circle cx="558" cy="26.6" r="5" fill="#bdbdbd"/><path d="M555 30l1.5 2.4M557.5 30.8l1.4 2.2M560 30l1.5 2.4" stroke="#8a8a8a" stroke-width="0.9"/>
<!-- AO balls -->
<circle cx="573" cy="32.4" r="3.2" fill="#5a5a5a"/><circle cx="575" cy="29.8" r="3.6" fill="#6e6e6e"/><circle cx="578.8" cy="25.4" r="3.9" fill="#c6c6c6"/>
<!-- AA active -->
<rect x="587" y="20" width="18" height="18" fill="#5285b5"/>
<circle cx="596" cy="29" r="5.2" fill="none" stroke="#2c2c2c" stroke-width="3.4"/><path d="M596 23.8a5.2 5.2 0 0 0 0 10.4" fill="none" stroke="#38b4c4" stroke-width="1.8"/><path d="M596 23.8a5.2 5.2 0 0 1 0 10.4" fill="none" stroke="#f0f0f0" stroke-width="2.2" stroke-dasharray="1.6 0.9"/>
<!-- disabled squares -->
<rect x="606.5" y="20.5" width="17" height="17" fill="#3c3c3c" stroke="#363636"/><rect x="609" y="23" width="7" height="7" fill="#3c4c4c"/><rect x="612.5" y="26.5" width="8.5" height="8.5" fill="#3f5a5c"/>
<!-- dashed select -->
<rect x="639.5" y="23.5" width="7.5" height="7.5" fill="none" stroke="#3fc0d0" stroke-width="1.2" stroke-dasharray="2 1.2"/><path d="M646 27v8.4l2-1.8 1.4 3 1.2-0.6-1.4-2.9h2.6z" fill="#c9c9c9"/>
<!-- xray -->
<rect x="666.5" y="20.5" width="17" height="17" rx="1" fill="#323232" stroke="#4b8fc6"/><rect x="672.5" y="23.5" width="8" height="8" fill="#8e8e8e" stroke="#e2e2e2"/><rect x="669.5" y="26.5" width="8" height="8" fill="#cfcfcf" stroke="#e6e6e6"/><rect x="672.5" y="26.5" width="5" height="5" fill="#a8a8a8" stroke="#e6e6e6" stroke-width="0.8"/>
<!-- xray joints -->
<rect x="685.5" y="21" width="17" height="16.5" fill="#3d3d3d"/><rect x="692.5" y="23.5" width="7.5" height="7.5" fill="none" stroke="#d2d2d2" stroke-width="1.1"/><rect x="688" y="26.5" width="8.5" height="8.5" fill="#c9c9c9"/>
<!-- framed joint -->
<rect x="705" y="21" width="17" height="16.5" fill="#3d3d3d"/><rect x="706.5" y="23.5" width="13" height="11.5" fill="#2f2f2f" stroke="#d2d2d2" stroke-width="1.1"/><circle cx="710.5" cy="26.6" r="1.7" fill="#d2d2d2"/><path d="M711 27l5.6 6.2" stroke="#d2d2d2" stroke-width="1.8" stroke-linecap="round"/>
<!-- aperture -->
<circle cx="744" cy="28.8" r="6.2" fill="#d0d0d0"/><circle cx="744" cy="28.8" r="1.9" fill="#444"/><path d="M744 22.6l2.4 4.6M749.4 25.8l-5 1.4M750 31.4l-4.4-2.4M746.4 34.6l-0.8-5M739.4 33l3.4-3.8M738 27.4l5 0.6M741 23.4l2.2 4.2" stroke="#444" stroke-width="1.1"/>
<!-- gamma -->
<rect x="804.5" y="23" width="6" height="12" fill="#d6d6d6"/><path d="M804.5 25.2a3.9 3.9 0 0 0 0 7.6z" fill="#d6d6d6"/><path d="M804.6 25.2a3.9 3.9 0 0 1 0 7.6z" fill="#3a3a3a"/>
<!-- ON -->
<rect x="857" y="20" width="18" height="18" fill="#5285b5"/><circle cx="866" cy="29" r="6.2" fill="#37b3bd" stroke="#28323a" stroke-width="1"/>
<text x="866" y="31" font-family="Liberation Sans, sans-serif" font-weight="bold" font-size="5.6" fill="#1d3b44" text-anchor="middle" letter-spacing="0.2">ON</text>
</svg>

<div id="topline"></div><div id="leftline"></div><div id="rightline"></div><div id="rightedge"></div>
</body>
</html>
